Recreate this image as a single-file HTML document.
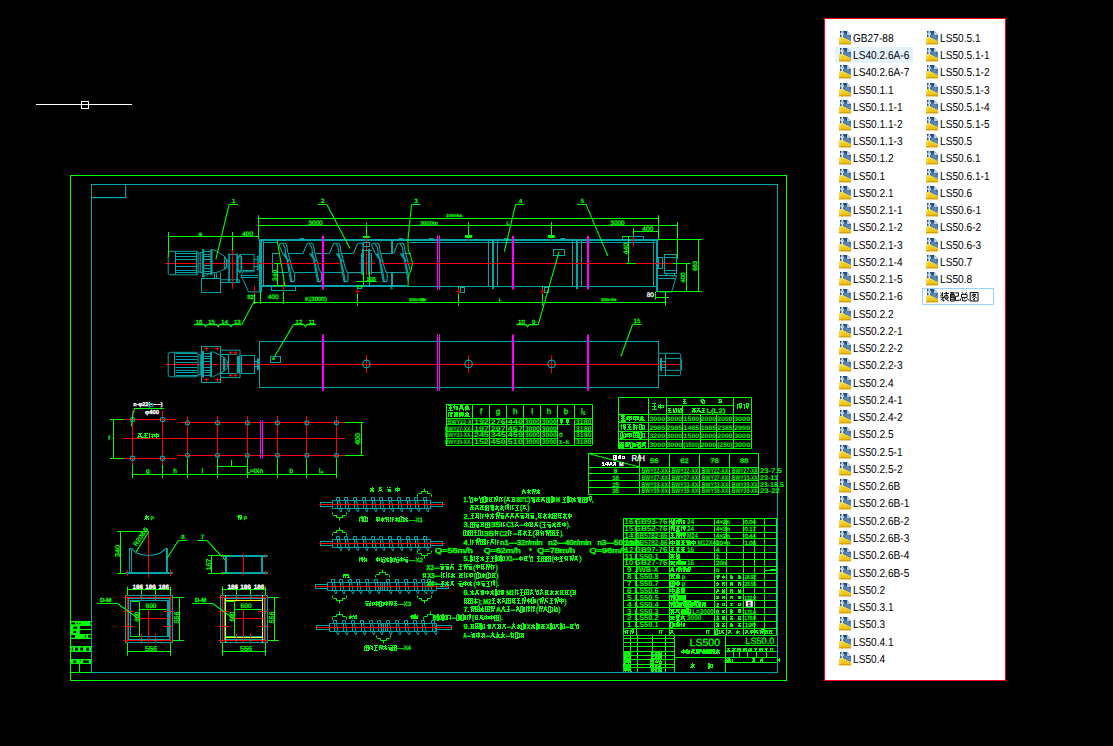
<!DOCTYPE html>
<html><head><meta charset="utf-8"><title>LS500</title>
<style>
html,body{margin:0;padding:0;background:#000}
body{width:1113px;height:746px;overflow:hidden;position:relative;font-family:"Liberation Sans",sans-serif;text-rendering:geometricPrecision;-webkit-font-smoothing:antialiased}
#cad{position:absolute;left:0;top:0}
#cad path,#cad rect,#cad circle{fill:none}
#cad text{font-family:"Liberation Sans",sans-serif;text-rendering:geometricPrecision}
#panel{position:absolute;left:824px;top:18px;width:180px;height:661px;background:#fff;border:1px solid #f00}
#pi{position:absolute;left:-825px;top:-19px;width:1113px;height:746px}
.ic{position:absolute}
.t{position:absolute;font-size:11.5px;line-height:16px;height:16px;color:#000;white-space:nowrap;transform:scaleX(.88);transform-origin:0 50%;letter-spacing:0}
.hl{position:absolute;left:835px;top:47px;width:78px;height:16px;background:#e5f3ff}
.sel{position:absolute;left:922px;top:288px;width:72px;height:17px;border:1px solid #99d1ff;box-sizing:border-box;background:#fff}
</style></head><body>
<svg id="cad" width="1113" height="746" viewBox="0 0 1113 746" fill="none" stroke-linecap="butt">
<rect x="70.5" y="175.5" width="716" height="505" stroke="#00ff00" stroke-width="1" fill="none"/>
<rect x="91.5" y="184.5" width="686" height="488" stroke="#00a6a8" stroke-width="1" fill="none"/>
<path d="M91.5 197.6L125.6 197.6L125.6 184.5" stroke="#00a6a8" stroke-width="1.15" fill="none"/>
<path d="M36 104.5L132 104.5" stroke="#ffffff" stroke-width="1"/>
<rect x="81.5" y="101.5" width="7" height="7" stroke="#ffffff" stroke-width="1" fill="none"/>
<path d="M258.7 240L658.5 240" stroke="#00a6a8" stroke-width="2"/>
<path d="M263.7 242.5L277.6 242.5" stroke="#00a6a8" stroke-width="1"/>
<path d="M409.3 242.5L655.2 242.5" stroke="#00a6a8" stroke-width="1"/>
<path d="M262 286L407 286" stroke="#00a6a8" stroke-width="2"/>
<path d="M407 286.5L656 286.5" stroke="#00a6a8" stroke-width="1"/>
<path d="M260.5 239.1L260.5 291.9" stroke="#00a6a8" stroke-width="3"/>
<path d="M263.5 241L263.5 287" stroke="#00a6a8" stroke-width="1"/>
<path d="M657 239.2L657 291.5" stroke="#00a6a8" stroke-width="2"/>
<path d="M653.5 241L653.5 286.4" stroke="#00a6a8" stroke-width="1"/>
<path d="M656 291.5L669.2 291.5" stroke="#00a6a8" stroke-width="1"/>
<rect x="271.5" y="286.5" width="24" height="4" stroke="#00a6a8" stroke-width="1" fill="none"/>
<path d="M283.5 282L283.5 291" stroke="#ff0000" stroke-width="1"/>
<defs><clipPath id="cf"><path d="M380 230H408L410.5 250L412.6 263L411 270L408.3 277V295H380Z"/></clipPath></defs>
<path d="M279.2 245.7C279.4 244.1 280.2 243.3 281.4 243.3L285 243.3C287.2 244.1 287.2 248.3 287.4 250.5L292.2 268.9L294.7 273.7L294.7 279.9L293.5 281.6L290.8 281.6L289.8 276.9L286.8 259.2L282.6 253.2L279.2 245.7M282.6 244.1L284.9 247.3L285.8 253.8L290 270.3L291.8 280.9M284.2 253.2L289 261.3" stroke="#00a6a8" stroke-width="1.1"/>
<path d="M303 253.2C304.8 250.3 305.8 244.5 307.8 243.3L311.8 243.3C314 244.1 314 248.3 314.2 250.5L319 268.9L321.5 273.7L321.5 279.9L320.3 281.6L317.6 281.6L316.6 276.9L313.6 259.2L309.4 253.2M309.4 244.1L311.7 247.3L312.6 253.8L316.8 270.3L318.6 280.9M311 253.2L315.8 261.3" stroke="#00a6a8" stroke-width="1.1"/>
<path d="M329.5 253.2C331.3 250.3 332.3 244.5 334.3 243.3L338.3 243.3C340.5 244.1 340.5 248.3 340.7 250.5L345.5 268.9L348 273.7L348 279.9L346.8 281.6L344.1 281.6L343.1 276.9L340.1 259.2L335.9 253.2M335.9 244.1L338.2 247.3L339.1 253.8L343.3 270.3L345.1 280.9M337.5 253.2L342.3 261.3" stroke="#00a6a8" stroke-width="1.1"/>
<path d="M353.5 253.2C355.3 250.3 356.3 244.5 358.3 243.3L362.3 243.3C363.3 243.9 363.1 248.3 363.1 253.2" stroke="#00a6a8" stroke-width="1.1"/>
<path d="M371.7 245.7C371.9 244.1 372.7 243.3 373.9 243.3L377.5 243.3C379.7 244.1 379.7 248.3 379.9 250.5L384.7 268.9L387.2 273.7L387.2 279.9L386 281.6L383.3 281.6L382.3 276.9L379.3 259.2L375.1 253.2L371.7 245.7M375.1 244.1L377.4 247.3L378.3 253.8L382.5 270.3L384.3 280.9M376.7 253.2L381.5 261.3" stroke="#00a6a8" stroke-width="1.1"/>
<path d="M393.7 253.2C395.5 250.3 396.5 244.5 398.5 243.3L402.5 243.3C404.7 244.1 404.7 248.3 404.9 250.5L409.7 268.9L412.2 273.7L412.2 279.9L411 281.6L408.3 281.6L407.3 276.9L404.3 259.2L400.1 253.2M400.1 244.1L402.4 247.3L403.3 253.8L407.5 270.3L409.3 280.9M401.7 253.2L406.5 261.3" stroke="#00a6a8" stroke-width="1.1" clip-path="url(#cf)"/>
<path d="M272 253.5L278.6 253.5" stroke="#00a6a8" stroke-width="1"/>
<path d="M288.8 253.5L303 253.5" stroke="#00a6a8" stroke-width="1"/>
<path d="M315.6 253.5L329.5 253.5" stroke="#00a6a8" stroke-width="1"/>
<path d="M342.1 253.5L353.5 253.5" stroke="#00a6a8" stroke-width="1"/>
<path d="M381.3 253.5L393.7 253.5" stroke="#00a6a8" stroke-width="1"/>
<path d="M404.4 253.5L411 253.5" stroke="#00a6a8" stroke-width="1"/>
<path d="M272 272.5L288 272.5" stroke="#00a6a8" stroke-width="1"/>
<path d="M294.7 272.5L316 272.5" stroke="#00a6a8" stroke-width="1"/>
<path d="M321.5 272.5L342.5 272.5" stroke="#00a6a8" stroke-width="1"/>
<path d="M348 272.5L361.5 272.5" stroke="#00a6a8" stroke-width="1"/>
<path d="M372 272.5L381.2 272.5" stroke="#00a6a8" stroke-width="1"/>
<path d="M387.2 272.5L406.5 272.5" stroke="#00a6a8" stroke-width="1"/>
<path d="M272.5 253.1L272.5 272.4" stroke="#00a6a8" stroke-width="1"/>
<path d="M277.3 241L284.8 285.4" stroke="#00ff00" stroke-width="1.1"/>
<path d="M392 240.5L392 253.1" stroke="#00a6a8" stroke-width="2"/>
<path d="M392 272.4L392 286" stroke="#00a6a8" stroke-width="2"/>
<circle cx="391.5" cy="288.2" r="0.9" stroke="#00a6a8" stroke-width="1" fill="none"/>
<path d="M407.9 239.4L408.2 250L410.6 256L412.6 263L411 270L408.3 277L408 287" stroke="#00ff00"/>
<path d="M488.5 241L488.5 286.4" stroke="#00a6a8" stroke-width="1"/>
<path d="M497.5 241L497.5 286.4" stroke="#00a6a8" stroke-width="1"/>
<path d="M493 241L493 289" stroke="#00a6a8" stroke-width="2"/>
<path d="M572.5 241L572.5 286.4" stroke="#00a6a8" stroke-width="1"/>
<path d="M581.5 241L581.5 286.4" stroke="#00a6a8" stroke-width="1"/>
<path d="M577 241L577 289" stroke="#00a6a8" stroke-width="2"/>
<path d="M428.9 238.5L433.7 238.5" stroke="#00a6a8" stroke-width="1"/>
<path d="M503.9 238.5L508.7 238.5" stroke="#00a6a8" stroke-width="1"/>
<path d="M560.4 238.5L565.2 238.5" stroke="#00a6a8" stroke-width="1"/>
<path d="M299.6 238.5L304.4 238.5" stroke="#00a6a8" stroke-width="1"/>
<path d="M398.6 238.5L403.4 238.5" stroke="#00a6a8" stroke-width="1"/>
<rect x="553.5" y="249.5" width="11" height="6" stroke="#00a6a8" stroke-width="1" fill="none"/>
<rect x="622.5" y="236.5" width="21" height="3" stroke="#00a6a8" stroke-width="1" fill="none"/>
<path d="M323 235.8L323 289.6" stroke="#ff00ff" stroke-width="2"/>
<path d="M513 235.8L513 289.6" stroke="#ff00ff" stroke-width="2"/>
<path d="M588 235.8L588 289.6" stroke="#ff00ff" stroke-width="2"/>
<path d="M437.5 235.3L437.5 289.6" stroke="#ff00ff" stroke-width="1"/>
<path d="M439.5 235.3L439.5 289.6" stroke="#ff00ff" stroke-width="1"/>
<path d="M165 263.5L196 263.5" stroke="#ff0000" stroke-width="1"/>
<path d="M198 263.5L203 263.5" stroke="#ff0000" stroke-width="1"/>
<path d="M205 263.5L340.5 263.5" stroke="#ff0000" stroke-width="1"/>
<path d="M359 263.5L375 263.5" stroke="#ff0000" stroke-width="1"/>
<path d="M381.8 263.5L672.8 263.5" stroke="#ff0000" stroke-width="1"/>
<path d="M366.5 222.7L366.5 236" stroke="#00ff00" stroke-width="1"/>
<path d="M363 237L369.8 237" stroke="#00ff00" stroke-width="2"/>
<path d="M366.5 237.4L366.5 275.2" stroke="#ff0000" stroke-width="1"/>
<path d="M363 248.7L363 275.2" stroke="#00a6a8" stroke-width="2"/>
<path d="M369 248.7L369 275.2" stroke="#00a6a8" stroke-width="2"/>
<path d="M361.5 253.1L361.5 274.4" stroke="#00a6a8" stroke-width="1"/>
<path d="M371.5 253.1L371.5 274.4" stroke="#00a6a8" stroke-width="1"/>
<rect x="363.5" y="242.5" width="6" height="4" stroke="#00a6a8" stroke-width="1" fill="none"/>
<path d="M361.5 250.5L371.9 250.5" stroke="#00a6a8" stroke-width="1"/>
<path d="M468.5 222L468.5 235.5" stroke="#00ff00" stroke-width="1"/>
<path d="M465.1 236.5L472.1 236.5" stroke="#00ff00" stroke-width="3"/>
<path d="M468.5 238L468.5 241" stroke="#ff0000" stroke-width="1"/>
<path d="M551.5 222L551.5 235.5" stroke="#00ff00" stroke-width="1"/>
<path d="M547.8 236.5L554.8 236.5" stroke="#00ff00" stroke-width="3"/>
<path d="M551.5 238L551.5 241" stroke="#ff0000" stroke-width="1"/>
<path d="M357.5 286.9L357.5 305.7" stroke="#00ff00" stroke-width="1"/>
<path d="M355.5 291.5L359.5 291.5" stroke="#ff0000" stroke-width="1"/>
<path d="M357.5 288.5L357.5 294" stroke="#ff0000" stroke-width="1"/>
<path d="M458.5 286.9L458.5 305.7" stroke="#00ff00" stroke-width="1"/>
<path d="M456.2 291.5L460.2 291.5" stroke="#ff0000" stroke-width="1"/>
<path d="M458.5 288.5L458.5 294" stroke="#ff0000" stroke-width="1"/>
<path d="M542.5 286.9L542.5 305.7" stroke="#00ff00" stroke-width="1"/>
<path d="M540.5 291.5L544.5 291.5" stroke="#ff0000" stroke-width="1"/>
<path d="M542.5 288.5L542.5 294" stroke="#ff0000" stroke-width="1"/>
<rect x="460.5" y="287.5" width="4" height="5" stroke="#00a6a8" stroke-width="1" fill="none"/>
<rect x="544.5" y="287.5" width="4" height="5" stroke="#00a6a8" stroke-width="1" fill="none"/>
<rect x="357.5" y="286.5" width="4" height="2" stroke="#00a6a8" stroke-width="1" fill="none"/>
<path d="M356.3 286.4L363 286.4" stroke="#00ff00" stroke-width="1.6"/>
<rect x="168.2" y="251.3" width="29.9" height="23.5" rx="1.6" stroke="#00a6a8"/>
<path d="M175.6 253.5L196.7 253.5" stroke="#00a6a8" stroke-width="1"/>
<path d="M175.6 256.5L196.7 256.5" stroke="#00a6a8" stroke-width="1"/>
<path d="M175.6 259.5L196.7 259.5" stroke="#00a6a8" stroke-width="1"/>
<path d="M175.6 266.5L196.7 266.5" stroke="#00a6a8" stroke-width="1"/>
<path d="M175.6 270.5L196.7 270.5" stroke="#00a6a8" stroke-width="1"/>
<path d="M175.6 272.5L196.7 272.5" stroke="#00a6a8" stroke-width="1"/>
<path d="M175.5 251.6L175.5 274.5" stroke="#00a6a8" stroke-width="1"/>
<path d="M196.5 251.6L196.5 274.5" stroke="#00a6a8" stroke-width="1"/>
<path d="M198 253.7L200.2 253L200.2 272.3L198 271.5" stroke="#00a6a8" stroke-width="1" fill="none"/>
<path d="M203.2 249.1V277.3M211.4 249.1V275.3" stroke="#00a6a8" stroke-width="2.2"/>
<path d="M204.2 251.5L210.3 251.5" stroke="#00a6a8" stroke-width="1"/>
<path d="M204.2 254.5L210.3 254.5" stroke="#00a6a8" stroke-width="1"/>
<path d="M204.2 256.5L210.3 256.5" stroke="#00a6a8" stroke-width="1"/>
<path d="M204.2 259.5L210.3 259.5" stroke="#00a6a8" stroke-width="1"/>
<path d="M204.2 265.5L210.3 265.5" stroke="#00a6a8" stroke-width="1"/>
<path d="M204.2 268.5L210.3 268.5" stroke="#00a6a8" stroke-width="1"/>
<path d="M204.2 271.5L210.3 271.5" stroke="#00a6a8" stroke-width="1"/>
<path d="M204.2 273.5L210.3 273.5" stroke="#00a6a8" stroke-width="1"/>
<path d="M200.2 252.5L202.2 252.5" stroke="#00a6a8" stroke-width="1"/>
<path d="M200.2 272.5L202.2 272.5" stroke="#00a6a8" stroke-width="1"/>
<path d="M212.5 249.6L214.8 250.1L224.4 256.2L224.4 269.2L219.3 271.5L214.8 272.8L212.5 272.3" stroke="#00a6a8" stroke-width="1" fill="none"/>
<path d="M224.4 257L226.6 259.7L226.6 266.7L224.4 269.2" stroke="#00a6a8" stroke-width="1.4" fill="none"/>
<path d="M226.6 260.5L228.4 260.5" stroke="#00a6a8" stroke-width="1"/>
<path d="M226.6 266.5L228.4 266.5" stroke="#00a6a8" stroke-width="1"/>
<path d="M229.1 253.4V282.3M237.1 253.4V282.3" stroke="#00a6a8" stroke-width="1.6"/>
<path d="M229.9 254.5L236.4 254.5" stroke="#00a6a8" stroke-width="1"/>
<path d="M237.9 258.2L239.9 255.2L241.4 257.2L241.4 270.2L239.9 272.3L237.9 269.2Z" stroke="#00a6a8" stroke-width="1.6" fill="none"/>
<path d="M239.9 254.4L254 254.4L254 271.8L242.5 271.8" stroke="#00a6a8" stroke-width="1" fill="none"/>
<path d="M242.5 270.5L254 270.5" stroke="#00a6a8" stroke-width="1"/>
<path d="M254 259.5L258 259.5" stroke="#00a6a8" stroke-width="1"/>
<path d="M254 266.5L258 266.5" stroke="#00a6a8" stroke-width="1"/>
<path d="M257 257.2L258 256.2L258 269.7L257 268.7" stroke="#00a6a8" stroke-width="1.3" fill="none"/>
<rect x="201.5" y="278.5" width="19" height="14" stroke="#00a6a8" stroke-width="1" fill="none"/>
<path d="M220.8 279.8L239.4 279.8L239.4 282.5L220.8 282.5" stroke="#00a6a8" stroke-width="1" fill="none"/>
<path d="M202.2 277.3L212.3 272.3" stroke="#00a6a8" stroke-width="1"/>
<path d="M214.5 273.3L214.5 278.5" stroke="#00a6a8" stroke-width="1"/>
<path d="M216.5 273.3L216.5 278.5" stroke="#00a6a8" stroke-width="1"/>
<path d="M220.5 272.3L220.5 278.8" stroke="#00a6a8" stroke-width="1"/>
<path d="M202.2 278.5L220.8 278.5" stroke="#00a6a8" stroke-width="1"/>
<path d="M212.3 272.3L214.8 273.1" stroke="#00a6a8" stroke-width="1"/>
<path d="M241.4 275.5L258 275.5" stroke="#00a6a8" stroke-width="1"/>
<path d="M241.4 277.5L258 277.5" stroke="#00a6a8" stroke-width="1"/>
<path d="M241.4 275.8L248.5 291.9L261.6 291.9" stroke="#00a6a8" stroke-width="1" fill="none"/>
<path d="M242.5 271.8L241.4 275.8" stroke="#00a6a8" stroke-width="1"/>
<rect x="658.5" y="257.5" width="4" height="11" stroke="#00a6a8" stroke-width="1" fill="none"/>
<rect x="664.5" y="254.5" width="12" height="19" stroke="#00a6a8" stroke-width="1" fill="none"/>
<path d="M664.5 257.5L676.6 257.5" stroke="#00a6a8" stroke-width="1"/>
<path d="M664.5 270.5L676.6 270.5" stroke="#00a6a8" stroke-width="1"/>
<path d="M666.5 273L666.5 275.5" stroke="#00a6a8" stroke-width="1"/>
<path d="M674.5 273L674.5 275.5" stroke="#00a6a8" stroke-width="1"/>
<path d="M658.5 275.5L676.6 275.5L671.6 291.9L658.5 291.9" stroke="#00a6a8" stroke-width="1" fill="none"/>
<path d="M658.5 278.5L675.6 278.5" stroke="#00a6a8" stroke-width="1"/>
<path d="M258.5 215.2L258.5 239" stroke="#00ff00" stroke-width="1"/>
<path d="M258.7 218.5L658.5 218.5" stroke="#00ff00" stroke-width="1"/>
<path d="M258.7 225.5L677.9 225.5" stroke="#00ff00" stroke-width="1"/>
<path d="M658.5 215.2L658.5 240.3" stroke="#00ff00" stroke-width="1"/>
<path d="M677.5 222L677.5 258.8" stroke="#00ff00" stroke-width="1"/>
<path d="M168.4 236.5L258.7 236.5" stroke="#00ff00" stroke-width="1"/>
<path d="M168.5 232L168.5 257" stroke="#00ff00" stroke-width="1"/>
<path d="M232.5 232L232.5 250" stroke="#00ff00" stroke-width="1"/>
<path d="M232.5 250L232.5 289" stroke="#ff0000" stroke-width="1"/>
<path d="M254.5 286L254.5 294.4" stroke="#ff0000" stroke-width="1"/>
<text x="315.5" y="224.6" font-size="6.5" fill="#00ff00" stroke="#00ff00" stroke-width="0.3" text-anchor="middle">3000</text>
<text x="617.5" y="224.6" font-size="6.5" fill="#00ff00" stroke="#00ff00" stroke-width="0.3" text-anchor="middle">3000</text>
<text x="429" y="224.6" font-size="5.5" fill="#00ff00" stroke="#00ff00" stroke-width="0.3" text-anchor="middle">300/Xn</text>
<text x="508" y="224.6" font-size="5" fill="#00ff00" stroke="#00ff00" stroke-width="0.3" text-anchor="middle">L</text>
<text x="454" y="217" font-size="4.5" fill="#00ff00" stroke="#00ff00" stroke-width="0.3" text-anchor="middle">10m=ka</text>
<text x="200.3" y="235.6" font-size="6" fill="#00ff00" stroke="#00ff00" stroke-width="0.3" text-anchor="middle">a</text>
<text x="247.6" y="236.2" font-size="6.5" fill="#00ff00" stroke="#00ff00" stroke-width="0.3" text-anchor="middle">400</text>
<path d="M633.3 231.5L658.5 231.5" stroke="#00ff00" stroke-width="1"/>
<path d="M633.5 227.8L633.5 236" stroke="#00ff00" stroke-width="1"/>
<path d="M633.5 236L633.5 246.6" stroke="#ff0000" stroke-width="1"/>
<text x="647.8" y="230.6" font-size="6.5" fill="#00ff00" stroke="#00ff00" stroke-width="0.3" text-anchor="middle">400</text>
<path d="M628.5 236.5L628.5 263.5" stroke="#00ff00" stroke-width="1"/>
<path d="M622.5 236.5L630 236.5" stroke="#00ff00" stroke-width="1"/>
<path d="M626 263.5L636 263.5" stroke="#00ff00" stroke-width="1"/>
<text x="627.6" y="248.6" font-size="6.4" fill="#00ff00" stroke="#00ff00" stroke-width="0.3" text-anchor="middle" transform="rotate(-90 627.6 248.6)" textLength="11.5" lengthAdjust="spacingAndGlyphs">440</text>
<path d="M658.5 239.5L702 239.5" stroke="#00ff00" stroke-width="1"/>
<path d="M672.8 263.5L690.5 263.5" stroke="#00ff00" stroke-width="1"/>
<path d="M658.5 291.5L702 291.5" stroke="#00ff00" stroke-width="1"/>
<path d="M686.5 263.5L686.5 291.9" stroke="#00ff00" stroke-width="1"/>
<path d="M698.5 239.6L698.5 291.9" stroke="#00ff00" stroke-width="1"/>
<text x="685" y="277.5" font-size="6" fill="#00ff00" stroke="#00ff00" stroke-width="0.3" text-anchor="middle" transform="rotate(-90 685 277.5)">400</text>
<text x="696.6" y="265.8" font-size="6" fill="#00ff00" stroke="#00ff00" stroke-width="0.3" text-anchor="middle" transform="rotate(-90 696.6 265.8)">883</text>
<path d="M254.4 302.5L665.3 302.5" stroke="#00ff00" stroke-width="1"/>
<path d="M254.5 294L254.5 304" stroke="#00ff00" stroke-width="1"/>
<path d="M260.5 292L260.5 304" stroke="#00ff00" stroke-width="1"/>
<path d="M283.5 291.3L283.5 304" stroke="#00ff00" stroke-width="1"/>
<path d="M665.5 291.9L665.5 305.7" stroke="#00ff00" stroke-width="1"/>
<path d="M655.2 297.5L669 297.5" stroke="#00ff00" stroke-width="1"/>
<path d="M655.5 292L655.5 299.5" stroke="#00ff00" stroke-width="1"/>
<text x="650.3" y="296.6" font-size="6.5" fill="#ffffff" stroke="#ffffff" stroke-width="0.3" text-anchor="middle">80</text>
<text x="250.6" y="299.2" font-size="6" fill="#00ff00" stroke="#00ff00" stroke-width="0.3" text-anchor="middle">82</text>
<text x="273.3" y="299.2" font-size="6.5" fill="#00ff00" stroke="#00ff00" stroke-width="0.3" text-anchor="middle">400</text>
<text x="316" y="301.2" font-size="6" fill="#00ff00" stroke="#00ff00" stroke-width="0.3" text-anchor="middle">K(3000)</text>
<text x="416.7" y="301.4" font-size="4.3" fill="#00ff00" stroke="#00ff00" stroke-width="0.3" text-anchor="middle">10m=ka</text>
<text x="608.7" y="301.2" font-size="4.3" fill="#00ff00" stroke="#00ff00" stroke-width="0.3" text-anchor="middle">10m=ka</text>
<text x="500" y="301" font-size="4.5" fill="#00ff00" stroke="#00ff00" stroke-width="0.3" text-anchor="middle">L</text>
<text x="424" y="301.4" font-size="4.3" fill="#00ff00" stroke="#00ff00" stroke-width="0.3" text-anchor="middle">kn</text>
<path d="M277.5 263.5L277.5 285.5" stroke="#00ff00" stroke-width="1"/>
<path d="M274 263.5L281 263.5" stroke="#00ff00" stroke-width="1"/>
<path d="M274 285.5L286 285.5" stroke="#00ff00" stroke-width="1"/>
<text x="276.8" y="275.4" font-size="6.4" fill="#00ff00" stroke="#00ff00" stroke-width="0.3" text-anchor="middle" transform="rotate(-90 276.8 275.4)" textLength="11" lengthAdjust="spacingAndGlyphs">340</text>
<path d="M356.3 281.5L376.8 281.5" stroke="#00ff00" stroke-width="1"/>
<text x="371.2" y="280.6" font-size="5.5" fill="#00ff00" stroke="#00ff00" stroke-width="0.3" text-anchor="middle">105</text>
<path d="M363.5 271.2L363.5 284.8" stroke="#00ff00" stroke-width="1"/>
<path d="M369.5 271.2L369.5 284.8" stroke="#00ff00" stroke-width="1"/>
<text x="233.6" y="203.2" font-size="6" fill="#00ff00" stroke="#00ff00" stroke-width="0.3" text-anchor="middle">1</text>
<path d="M229.2 204.5L238 204.5" stroke="#00ff00" stroke-width="1"/>
<path d="M229.2 204.4L215.9 259.2" stroke="#00ff00" stroke-width="1.1"/>
<text x="322.6" y="203.2" font-size="6" fill="#00ff00" stroke="#00ff00" stroke-width="0.3" text-anchor="middle">2</text>
<path d="M318 204.5L326.9 204.5" stroke="#00ff00" stroke-width="1"/>
<path d="M326.9 204.4L350 248.4" stroke="#00ff00" stroke-width="1.1"/>
<text x="416.2" y="203.2" font-size="6" fill="#00ff00" stroke="#00ff00" stroke-width="0.3" text-anchor="middle">3</text>
<path d="M411.6 204.5L420.4 204.5" stroke="#00ff00" stroke-width="1"/>
<path d="M411.6 204.4L407.9 240" stroke="#00ff00" stroke-width="1.1"/>
<text x="520.6" y="203.2" font-size="6" fill="#00ff00" stroke="#00ff00" stroke-width="0.3" text-anchor="middle">4</text>
<path d="M515.6 204.5L524.4 204.5" stroke="#00ff00" stroke-width="1"/>
<path d="M515.6 204.4L504.3 251.6" stroke="#00ff00" stroke-width="1.1"/>
<text x="582.3" y="203.2" font-size="6" fill="#00ff00" stroke="#00ff00" stroke-width="0.3" text-anchor="middle">5</text>
<path d="M577.2 204.5L586 204.5" stroke="#00ff00" stroke-width="1"/>
<path d="M586 204.4L607.4 254.9" stroke="#00ff00" stroke-width="1.1"/>
<circle cx="607.4" cy="254.9" r="0.6" stroke="#00ff00" stroke-width="1" fill="none"/>
<text x="199" y="323.6" font-size="6" fill="#00ff00" stroke="#00ff00" stroke-width="0.3" text-anchor="middle">16</text>
<text x="211.6" y="323.6" font-size="6" fill="#00ff00" stroke="#00ff00" stroke-width="0.3" text-anchor="middle">15</text>
<text x="224.7" y="323.6" font-size="6" fill="#00ff00" stroke="#00ff00" stroke-width="0.3" text-anchor="middle">14</text>
<text x="237.3" y="323.6" font-size="6" fill="#00ff00" stroke="#00ff00" stroke-width="0.3" text-anchor="middle">13</text>
<path d="M194 324.6L203.8 324.6L205.4 326.6L207 324.6L216.6 324.6L218.2 326.6L219.8 324.6L229.4 324.6L231 326.6L232.6 324.6L241.8 324.6" stroke="#00ff00" stroke-width="1.15" fill="none"/>
<path d="M241.8 324.6L254.4 300.7" stroke="#00ff00" stroke-width="1.1"/>
<text x="298.9" y="323.6" font-size="6" fill="#00ff00" stroke="#00ff00" stroke-width="0.3" text-anchor="middle">12</text>
<text x="311.8" y="323.6" font-size="6" fill="#00ff00" stroke="#00ff00" stroke-width="0.3" text-anchor="middle">11</text>
<path d="M293.4 324.6L303.8 324.6L305.4 326.6L307 324.6L316 324.6" stroke="#00ff00" stroke-width="1.15" fill="none"/>
<path d="M293.4 324.6L273.3 358.8" stroke="#00ff00" stroke-width="1.1"/>
<text x="521.4" y="323.6" font-size="6" fill="#00ff00" stroke="#00ff00" stroke-width="0.3" text-anchor="middle">10</text>
<text x="533.7" y="323.6" font-size="6" fill="#00ff00" stroke="#00ff00" stroke-width="0.3" text-anchor="middle">9</text>
<path d="M516.4 324.6L526 324.6L527.6 326.6L529.2 324.6L538.2 324.6" stroke="#00ff00" stroke-width="1.15" fill="none"/>
<path d="M538.2 324.6L559.1 251.6" stroke="#00ff00" stroke-width="1.1"/>
<text x="636.9" y="322.8" font-size="6" fill="#00ff00" stroke="#00ff00" stroke-width="0.3" text-anchor="middle">15</text>
<path d="M632.6 324.5L641.4 324.5" stroke="#00ff00" stroke-width="1"/>
<path d="M632.6 324.2L621.3 355.3" stroke="#00ff00" stroke-width="1.1"/>
<circle cx="621.3" cy="355.3" r="0.6" stroke="#00ff00" stroke-width="1" fill="none"/>
<rect x="259.5" y="341.5" width="399" height="46" stroke="#00a6a8" stroke-width="1" fill="none"/>
<path d="M165 364.5L202.6 364.5" stroke="#ff0000" stroke-width="1"/>
<path d="M204.4 364.5L210.2 364.5" stroke="#ff0000" stroke-width="1"/>
<path d="M212 364.5L218.4 364.5" stroke="#ff0000" stroke-width="1"/>
<path d="M220.2 364.5L227.2 364.5" stroke="#ff0000" stroke-width="1"/>
<path d="M229 364.5L234.8 364.5" stroke="#ff0000" stroke-width="1"/>
<path d="M236.5 364.5L681.9 364.5" stroke="#ff0000" stroke-width="1"/>
<path d="M323 334.4L323 390.8" stroke="#ff00ff" stroke-width="2"/>
<path d="M513 334.4L513 390.8" stroke="#ff00ff" stroke-width="2"/>
<path d="M588 334.4L588 390.8" stroke="#ff00ff" stroke-width="2"/>
<path d="M437.5 334.4L437.5 390.8" stroke="#ff00ff" stroke-width="1"/>
<path d="M439.5 334.4L439.5 390.8" stroke="#ff00ff" stroke-width="1"/>
<path d="M366.5 355.3L366.5 373" stroke="#ff0000" stroke-width="1"/>
<circle cx="366.4" cy="363.9" r="3.7" stroke="#00a6a8" stroke-width="1.2" fill="none"/>
<path d="M468.5 355.3L468.5 373" stroke="#ff0000" stroke-width="1"/>
<circle cx="468.6" cy="363.9" r="3.7" stroke="#00a6a8" stroke-width="1.2" fill="none"/>
<path d="M551.5 355.3L551.5 373" stroke="#ff0000" stroke-width="1"/>
<circle cx="551.5" cy="363.9" r="3.7" stroke="#00a6a8" stroke-width="1.2" fill="none"/>
<rect x="168.2" y="352.3" width="29.8" height="24.5" rx="2.2" stroke="#00a6a8"/>
<path d="M175.8 353.5L197.4 353.5" stroke="#00a6a8" stroke-width="1"/>
<path d="M175.8 356.5L197.4 356.5" stroke="#00a6a8" stroke-width="1"/>
<path d="M175.8 359.5L197.4 359.5" stroke="#00a6a8" stroke-width="1"/>
<path d="M175.8 362.5L197.4 362.5" stroke="#00a6a8" stroke-width="1"/>
<path d="M175.8 367.5L197.4 367.5" stroke="#00a6a8" stroke-width="1"/>
<path d="M175.8 370.5L197.4 370.5" stroke="#00a6a8" stroke-width="1"/>
<path d="M175.8 372.5L197.4 372.5" stroke="#00a6a8" stroke-width="1"/>
<path d="M175.8 375.5L197.4 375.5" stroke="#00a6a8" stroke-width="1"/>
<path d="M174.5 352.5L174.5 376.6" stroke="#00a6a8" stroke-width="1"/>
<path d="M198 354.3L200.3 354.9L200.3 374.7L198 375.3" stroke="#00a6a8" stroke-width="1" fill="none"/>
<rect x="201.5" y="346.5" width="19" height="36" stroke="#00a6a8" stroke-width="1" fill="none"/>
<path d="M202.5 350.8L202.5 377.6" stroke="#00a6a8" stroke-width="3"/>
<path d="M211 351.4L211 377" stroke="#00a6a8" stroke-width="2"/>
<path d="M204.4 353.5L210.2 353.5" stroke="#00a6a8" stroke-width="1"/>
<path d="M204.4 356.5L210.2 356.5" stroke="#00a6a8" stroke-width="1"/>
<path d="M204.4 358.5L210.2 358.5" stroke="#00a6a8" stroke-width="1"/>
<path d="M204.4 361.5L210.2 361.5" stroke="#00a6a8" stroke-width="1"/>
<path d="M204.4 367.5L210.2 367.5" stroke="#00a6a8" stroke-width="1"/>
<path d="M204.4 370.5L210.2 370.5" stroke="#00a6a8" stroke-width="1"/>
<path d="M204.4 372.5L210.2 372.5" stroke="#00a6a8" stroke-width="1"/>
<path d="M204.4 375.5L210.2 375.5" stroke="#00a6a8" stroke-width="1"/>
<path d="M212.8 351.9L214.9 352.5L224.8 357.8L224.8 370.6L214.9 375.9L212.8 376.5" stroke="#00a6a8" stroke-width="1" fill="none"/>
<path d="M224 357.8L224 370.6" stroke="#00a6a8" stroke-width="2"/>
<path d="M225.4 358.9L227.3 361.3L227.3 367.7L225.4 370" stroke="#00a6a8" stroke-width="1" fill="none"/>
<path d="M220.7 350.2L240 350.2L240 377.6L220.7 377.6" stroke="#00a6a8" stroke-width="1" fill="none"/>
<path d="M228.9 354.3L237.1 354.3" stroke="#00a6a8" stroke-width="1" fill="none"/>
<path d="M228.9 373.5L237.1 373.5" stroke="#00a6a8" stroke-width="1" fill="none"/>
<path d="M228.5 354.3L228.5 373.5" stroke="#00a6a8" stroke-width="1"/>
<path d="M220.7 354.5L228.9 354.5" stroke="#00a6a8" stroke-width="1"/>
<path d="M220.7 373.5L228.9 373.5" stroke="#00a6a8" stroke-width="1"/>
<path d="M238.5 356L238.5 373" stroke="#00a6a8" stroke-width="3"/>
<rect x="241.5" y="355.5" width="13" height="18" stroke="#00a6a8" stroke-width="1" fill="none"/>
<path d="M254 361.5L257.5 361.5" stroke="#00a6a8" stroke-width="1"/>
<path d="M254 366.5L257.5 366.5" stroke="#00a6a8" stroke-width="1"/>
<path d="M258 358.4L258 370" stroke="#00a6a8" stroke-width="2"/>
<path d="M204.2 348.5L208.8 348.5" stroke="#ff0000" stroke-width="1"/>
<path d="M206.5 346.3L206.5 351" stroke="#ff0000" stroke-width="1"/>
<path d="M215.1 348.5L219.8 348.5" stroke="#ff0000" stroke-width="1"/>
<path d="M217.5 346.3L217.5 351" stroke="#ff0000" stroke-width="1"/>
<path d="M204.2 379.5L208.8 379.5" stroke="#ff0000" stroke-width="1"/>
<path d="M206.5 377.6L206.5 382.3" stroke="#ff0000" stroke-width="1"/>
<path d="M215.1 379.5L219.8 379.5" stroke="#ff0000" stroke-width="1"/>
<path d="M217.5 377.6L217.5 382.3" stroke="#ff0000" stroke-width="1"/>
<path d="M228.7 352.5L232.2 352.5" stroke="#ff0000" stroke-width="1"/>
<path d="M230.5 351.1L230.5 354.6" stroke="#ff0000" stroke-width="1"/>
<path d="M233.9 352.5L237.4 352.5" stroke="#ff0000" stroke-width="1"/>
<path d="M235.5 351.1L235.5 354.6" stroke="#ff0000" stroke-width="1"/>
<path d="M228.7 375.5L232.2 375.5" stroke="#ff0000" stroke-width="1"/>
<path d="M230.5 373.9L230.5 377.4" stroke="#ff0000" stroke-width="1"/>
<path d="M233.9 375.5L237.4 375.5" stroke="#ff0000" stroke-width="1"/>
<path d="M235.5 373.9L235.5 377.4" stroke="#ff0000" stroke-width="1"/>
<rect x="270.5" y="356.5" width="10" height="6" stroke="#00a6a8" stroke-width="1" fill="none"/>
<circle cx="273.5" cy="359" r="0.7" stroke="#00ff00" stroke-width="1.2" fill="none"/>
<path d="M658.6 353.3L679.5 353.3L680.7 354.6L680.7 374.5L679.5 375.6L658.6 375.6" stroke="#00a6a8" stroke-width="1" fill="none"/>
<path d="M665.5 353.3L665.5 375.6" stroke="#00a6a8" stroke-width="1"/>
<path d="M665.8 358.4L680.7 358.4L681.6 359.5L681.6 369.1L680.7 370.3L665.8 370.3" stroke="#00a6a8" stroke-width="1" fill="none"/>
<rect x="660.5" y="358.5" width="1" height="12" stroke="#00a6a8" stroke-width="1" fill="none"/>
<path d="M661.5 361.5L665.8 361.5" stroke="#00a6a8" stroke-width="1"/>
<path d="M661.5 367.5L665.8 367.5" stroke="#00a6a8" stroke-width="1"/>
<path d="M123.9 419.5L175.8 419.5" stroke="#ff0000" stroke-width="1"/>
<path d="M123.9 458.5L177 458.5" stroke="#ff0000" stroke-width="1"/>
<path d="M179 422.5L344.4 422.5" stroke="#ff0000" stroke-width="1"/>
<path d="M177 455.5L344.4 455.5" stroke="#ff0000" stroke-width="1"/>
<path d="M123 438.5L344.8 438.5" stroke="#ff0000" stroke-width="1"/>
<path d="M132.5 410.7L132.5 464.8" stroke="#ff0000" stroke-width="1"/>
<path d="M132.5 464.8L132.5 478" stroke="#00ff00" stroke-width="1"/>
<circle cx="132.5" cy="419.5" r="2.2" stroke="#00a6a8" stroke-width="1.1" fill="none"/>
<circle cx="132.5" cy="458.3" r="2.2" stroke="#00a6a8" stroke-width="1.1" fill="none"/>
<path d="M162.5 410.7L162.5 464.8" stroke="#ff0000" stroke-width="1"/>
<path d="M162.5 464.8L162.5 478" stroke="#00ff00" stroke-width="1"/>
<circle cx="162.5" cy="419.5" r="2.2" stroke="#00a6a8" stroke-width="1.1" fill="none"/>
<circle cx="162.5" cy="458.3" r="2.2" stroke="#00a6a8" stroke-width="1.1" fill="none"/>
<path d="M187.5 416.1L187.5 458.5" stroke="#ff0000" stroke-width="1"/>
<path d="M187.5 458.5L187.5 478" stroke="#00ff00" stroke-width="1"/>
<circle cx="187.5" cy="422.8" r="2" stroke="#00a6a8" stroke-width="1.1" fill="none"/>
<circle cx="187.5" cy="455.2" r="2" stroke="#00a6a8" stroke-width="1.1" fill="none"/>
<path d="M217.5 416.1L217.5 458.5" stroke="#ff0000" stroke-width="1"/>
<path d="M217.5 458.5L217.5 478" stroke="#00ff00" stroke-width="1"/>
<circle cx="217.5" cy="422.8" r="2" stroke="#00a6a8" stroke-width="1.1" fill="none"/>
<circle cx="217.5" cy="455.2" r="2" stroke="#00a6a8" stroke-width="1.1" fill="none"/>
<path d="M247.5 416.1L247.5 458.5" stroke="#ff0000" stroke-width="1"/>
<path d="M247.5 458.5L247.5 478" stroke="#00ff00" stroke-width="1"/>
<circle cx="247.4" cy="422.8" r="2" stroke="#00a6a8" stroke-width="1.1" fill="none"/>
<circle cx="247.4" cy="455.2" r="2" stroke="#00a6a8" stroke-width="1.1" fill="none"/>
<path d="M277.5 416.1L277.5 458.5" stroke="#ff0000" stroke-width="1"/>
<path d="M277.5 458.5L277.5 478" stroke="#00ff00" stroke-width="1"/>
<circle cx="277.4" cy="422.8" r="2" stroke="#00a6a8" stroke-width="1.1" fill="none"/>
<circle cx="277.4" cy="455.2" r="2" stroke="#00a6a8" stroke-width="1.1" fill="none"/>
<path d="M306.5 416.1L306.5 458.5" stroke="#ff0000" stroke-width="1"/>
<path d="M306.5 458.5L306.5 478" stroke="#00ff00" stroke-width="1"/>
<circle cx="306.9" cy="422.8" r="2" stroke="#00a6a8" stroke-width="1.1" fill="none"/>
<circle cx="306.9" cy="455.2" r="2" stroke="#00a6a8" stroke-width="1.1" fill="none"/>
<path d="M336.5 416.1L336.5 458.5" stroke="#ff0000" stroke-width="1"/>
<path d="M336.5 458.5L336.5 478" stroke="#00ff00" stroke-width="1"/>
<circle cx="336.5" cy="422.8" r="2" stroke="#00a6a8" stroke-width="1.1" fill="none"/>
<circle cx="336.5" cy="455.2" r="2" stroke="#00a6a8" stroke-width="1.1" fill="none"/>
<path d="M260.5 420.2L260.5 458.6" stroke="#ff00ff" stroke-width="1"/>
<path d="M262.5 420.2L262.5 458.6" stroke="#ff00ff" stroke-width="1"/>
<path d="M113.5 419.5L113.5 458.3" stroke="#00ff00" stroke-width="1"/>
<path d="M110 419.5L124 419.5" stroke="#00ff00" stroke-width="1"/>
<path d="M110 458.5L124 458.5" stroke="#00ff00" stroke-width="1"/>
<text x="109" y="440" font-size="6" fill="#00ff00" stroke="#00ff00" stroke-width="0.3" text-anchor="middle">f</text>
<path d="M132.5 474.5L336.5 474.5" stroke="#00ff00" stroke-width="1"/>
<path d="M344.4 422.5L363.7 422.5" stroke="#00ff00" stroke-width="1"/>
<path d="M344.4 455.5L363.7 455.5" stroke="#00ff00" stroke-width="1"/>
<path d="M361.5 422.4L361.5 455.6" stroke="#00ff00" stroke-width="1"/>
<text x="359.6" y="439" font-size="7" fill="#00ff00" stroke="#00ff00" stroke-width="0.3" text-anchor="middle" transform="rotate(-90 359.6 439)">400</text>
<path d="M217.5 466.5L247.4 466.5" stroke="#00ff00" stroke-width="1"/>
<path d="M231.5 459.8L231.5 466.4" stroke="#00ff00" stroke-width="1"/>
<text x="147.8" y="473" font-size="6.5" fill="#00ff00" stroke="#00ff00" stroke-width="0.3" text-anchor="middle">g</text>
<text x="175" y="472.6" font-size="6.5" fill="#00ff00" stroke="#00ff00" stroke-width="0.3" text-anchor="middle">h</text>
<text x="202.5" y="472.6" font-size="6.5" fill="#00ff00" stroke="#00ff00" stroke-width="0.3" text-anchor="middle">l</text>
<text x="254.8" y="472.8" font-size="6.5" fill="#00ff00" stroke="#00ff00" stroke-width="0.3" text-anchor="middle">L=lXn</text>
<text x="291.3" y="472.6" font-size="6.5" fill="#00ff00" stroke="#00ff00" stroke-width="0.3" text-anchor="middle">b</text>
<text x="321" y="472.6" font-size="6.5" fill="#00ff00" stroke="#00ff00" stroke-width="0.3" text-anchor="middle">l&#8324;</text>
<path d="M131.4 426.4L133 413.9L134.6 408.5L163.9 408.5" stroke="#00ff00" stroke-width="1.15" fill="none"/>
<text x="148" y="406.2" font-size="5.4" fill="#ffffff" stroke="#ffffff" stroke-width="0.3" text-anchor="middle" font-weight="bold">n-&#966;22(&#8212;&#8212;)</text>
<rect x="148.5" y="403.5" width="4" height="3" stroke="#00a6a8" stroke-width="1" fill="none"/>
<text x="152" y="413.8" font-size="5.8" fill="#ffffff" stroke="#ffffff" stroke-width="0.3" text-anchor="middle" font-weight="bold">&#966;400</text>
<path d="M140.1 433L137.8 438M140.1 434.5L142.3 438M138.7 436L141.4 436M138.2 433.8L141.9 433.8M143.8 433.2L147.5 433.2M144.1 435.5L147.2 435.5M143.4 437.9L147.9 437.9M145.7 433.2L145.7 437.9M150.1 433L149 435.5M149.7 434.5L149.7 438M150.8 434L153.5 434M152.2 434L152.2 438M151 436.2L153.3 436.2M154.8 434.2L158.9 434.2L158.9 436.5L154.8 436.5L154.8 434.2M156.9 433L156.9 438" stroke="#00ff00" stroke-width="1" shape-rendering="crispEdges"/>
<path d="M144.6 516.1L149.1 516.1M146.8 514.6L146.8 519.6M146.8 516.4L144.6 519.6M146.8 516.4L149.1 519.6" stroke="#00ff00" stroke-width="1" shape-rendering="crispEdges"/>
<text x="152.3" y="519.6" font-size="5" fill="#00ff00" stroke="#00ff00" stroke-width="0.3" text-anchor="middle">P</text>
<path d="M237.4 516L239.2 516M238.3 515L238.3 520M239.9 515L241.9 515L241.9 517.2L239.9 517.2L239.9 515M239.7 518.5L241.9 518.5M240.9 517.2L240.9 520" stroke="#00ff00" stroke-width="1" shape-rendering="crispEdges"/>
<text x="245.5" y="520" font-size="5" fill="#00ff00" stroke="#00ff00" stroke-width="0.3" text-anchor="middle">P</text>
<path d="M117.2 531.5L148.8 531.5" stroke="#00ff00" stroke-width="1"/>
<path d="M120.5 531.5L120.5 573.3" stroke="#00ff00" stroke-width="1"/>
<path d="M117.2 573.5L127.4 573.5" stroke="#00ff00" stroke-width="1"/>
<text x="120" y="551" font-size="6.8" fill="#00ff00" stroke="#00ff00" stroke-width="0.3" text-anchor="middle" transform="rotate(-90 120 551)" textLength="12" lengthAdjust="spacingAndGlyphs">340</text>
<path d="M148.5 531.5L148.5 577.6" stroke="#ff0000" stroke-width="1"/>
<path d="M136 551.9L148.8 531.5" stroke="#00ff00" stroke-width="1.1"/>
<text x="142.4" y="537.8" font-size="6" fill="#00ff00" stroke="#00ff00" stroke-width="0.3" text-anchor="middle" transform="rotate(-55 142.4 537.8)" textLength="21" lengthAdjust="spacingAndGlyphs">R208.5</text>
<path d="M129.5 548.5L129.5 573" stroke="#00a6a8" stroke-width="1"/>
<path d="M167 548.5L167 573" stroke="#00a6a8" stroke-width="2"/>
<path d="M125.7 573L172.7 573" stroke="#00a6a8" stroke-width="2"/>
<path d="M131.5 549.5L131.5 572" stroke="#00a6a8" stroke-width="1"/>
<path d="M129 548.6H131.8L135.5 552.4Q148.4 558.6 161.2 552.4L165.4 548.6H167.8" stroke="#00a6a8" stroke-width="1.15"/>
<path d="M127.5 569.9L127.5 575.8" stroke="#ff0000" stroke-width="1"/>
<path d="M170.5 569.9L170.5 575.8" stroke="#ff0000" stroke-width="1"/>
<text x="182.9" y="539.4" font-size="6" fill="#00ff00" stroke="#00ff00" stroke-width="0.3" text-anchor="middle">8</text>
<path d="M178.6 540.5L186.8 540.5" stroke="#00ff00" stroke-width="1"/>
<path d="M178.6 540.3L167 558.3" stroke="#00ff00" stroke-width="1.1"/>
<text x="202.5" y="539.4" font-size="6" fill="#00ff00" stroke="#00ff00" stroke-width="0.3" text-anchor="middle">7</text>
<path d="M197.1 540.5L206.8 540.5" stroke="#00ff00" stroke-width="1"/>
<path d="M206.8 540.3L226.4 561.3" stroke="#00ff00" stroke-width="1.1"/>
<path d="M221.3 556L267.8 556" stroke="#00a6a8" stroke-width="2"/>
<path d="M221.3 573L267.8 573" stroke="#00a6a8" stroke-width="2"/>
<path d="M226 556L226 573.3" stroke="#00a6a8" stroke-width="2"/>
<path d="M262 556L262 573.3" stroke="#00a6a8" stroke-width="2"/>
<path d="M222.5 553.7L222.5 558" stroke="#ff0000" stroke-width="1"/>
<path d="M222.5 570.7L222.5 575" stroke="#ff0000" stroke-width="1"/>
<path d="M265.5 553.7L265.5 558" stroke="#ff0000" stroke-width="1"/>
<path d="M265.5 570.7L265.5 575" stroke="#ff0000" stroke-width="1"/>
<path d="M243.5 553.7L243.5 575" stroke="#ff0000" stroke-width="1"/>
<path d="M208 555.5L229 555.5" stroke="#00ff00" stroke-width="1"/>
<path d="M208 573.5L229 573.5" stroke="#00ff00" stroke-width="1"/>
<path d="M211.5 555.5L211.5 573.3" stroke="#00ff00" stroke-width="1"/>
<text x="210.8" y="564.4" font-size="6.8" fill="#00ff00" stroke="#00ff00" stroke-width="0.3" text-anchor="middle" transform="rotate(-90 210.8 564.4)" textLength="11.5" lengthAdjust="spacingAndGlyphs">157</text>
<rect x="125.5" y="595.5" width="47" height="47" stroke="#00a6a8" stroke-width="1" fill="none"/>
<rect x="128.5" y="598.5" width="41" height="41" stroke="#00a6a8" stroke-width="1" fill="none"/>
<rect x="130.5" y="600.5" width="37" height="36" stroke="#00a6a8" stroke-width="1" fill="none"/>
<path d="M169 600.2L169 636.9" stroke="#00a6a8" stroke-width="2"/>
<path d="M139.5 601.9L139.5 636" stroke="#00ff00" stroke-width="1"/>
<path d="M139.4 609.5L166.7 609.5" stroke="#00ff00" stroke-width="1"/>
<path d="M131.4 601.5L139.4 601.5" stroke="#00ff00" stroke-width="1"/>
<path d="M131.4 636.5L139.4 636.5" stroke="#00ff00" stroke-width="1"/>
<text x="151" y="608.3" font-size="6.6" fill="#00ff00" stroke="#00ff00" stroke-width="0.3" text-anchor="middle" textLength="11" lengthAdjust="spacingAndGlyphs">600</text>
<text x="138.6" y="616.6" font-size="6" fill="#00ff00" stroke="#00ff00" stroke-width="0.3" text-anchor="middle" transform="rotate(-90 138.6 616.6)" textLength="10" lengthAdjust="spacingAndGlyphs">600</text>
<path d="M123.2 597.5L173.5 597.5" stroke="#ff0000" stroke-width="1"/>
<path d="M123.2 640.5L173.5 640.5" stroke="#ff0000" stroke-width="1"/>
<path d="M123.2 611.5L133.4 611.5" stroke="#ff0000" stroke-width="1"/>
<path d="M163.3 611.5L173.5 611.5" stroke="#ff0000" stroke-width="1"/>
<path d="M123.2 626.5L133.4 626.5" stroke="#ff0000" stroke-width="1"/>
<path d="M163.3 626.5L173.5 626.5" stroke="#ff0000" stroke-width="1"/>
<path d="M139.4 618.5L168.4 618.5" stroke="#ff0000" stroke-width="1"/>
<path d="M127.5 594.2L127.5 642.9" stroke="#ff0000" stroke-width="1"/>
<path d="M170.5 594.2L170.5 642.9" stroke="#ff0000" stroke-width="1"/>
<path d="M141.5 594.2L141.5 600.2" stroke="#ff0000" stroke-width="1"/>
<path d="M141.5 633.5L141.5 643.7" stroke="#ff0000" stroke-width="1"/>
<path d="M155.5 594.2L155.5 600.2" stroke="#ff0000" stroke-width="1"/>
<path d="M155.5 633.5L155.5 643.7" stroke="#ff0000" stroke-width="1"/>
<path d="M148.5 609.6L148.5 643.7" stroke="#ff0000" stroke-width="1"/>
<circle cx="141.4" cy="597.3" r="0.8" stroke="#00a6a8" stroke-width="1" fill="none"/>
<circle cx="155.6" cy="597.3" r="0.8" stroke="#00a6a8" stroke-width="1" fill="none"/>
<circle cx="170.2" cy="611.6" r="0.8" stroke="#00a6a8" stroke-width="1" fill="none"/>
<circle cx="170.2" cy="626.3" r="0.8" stroke="#00a6a8" stroke-width="1" fill="none"/>
<circle cx="141.4" cy="640.3" r="0.8" stroke="#00a6a8" stroke-width="1" fill="none"/>
<circle cx="155.6" cy="640.3" r="0.8" stroke="#00a6a8" stroke-width="1" fill="none"/>
<path d="M127.4 589.5L170.6 589.5" stroke="#00ff00" stroke-width="1"/>
<path d="M127.5 586.5L127.5 595" stroke="#00ff00" stroke-width="1"/>
<path d="M141.5 586.5L141.5 595" stroke="#00ff00" stroke-width="1"/>
<path d="M155.5 586.5L155.5 595" stroke="#00ff00" stroke-width="1"/>
<path d="M170.5 586.5L170.5 595" stroke="#00ff00" stroke-width="1"/>
<text x="137.7" y="588.7" font-size="6.3" fill="#ffffff" stroke="#ffffff" stroke-width="0.3" text-anchor="middle" textLength="10.5" lengthAdjust="spacingAndGlyphs" font-weight="bold">186</text>
<text x="150.5" y="588.7" font-size="6.3" fill="#ffffff" stroke="#ffffff" stroke-width="0.3" text-anchor="middle" textLength="10.5" lengthAdjust="spacingAndGlyphs" font-weight="bold">186</text>
<text x="163.8" y="588.7" font-size="6.3" fill="#ffffff" stroke="#ffffff" stroke-width="0.3" text-anchor="middle" textLength="10.5" lengthAdjust="spacingAndGlyphs" font-weight="bold">186</text>
<path d="M179.5 597.3L179.5 640.3" stroke="#00ff00" stroke-width="1"/>
<path d="M172.7 597.5L183.8 597.5" stroke="#00ff00" stroke-width="1"/>
<path d="M172.7 640.5L183.8 640.5" stroke="#00ff00" stroke-width="1"/>
<text x="178.8" y="617.5" font-size="6.8" fill="#00ff00" stroke="#00ff00" stroke-width="0.3" text-anchor="middle" transform="rotate(-90 178.8 617.5)" textLength="11.5" lengthAdjust="spacingAndGlyphs">556</text>
<path d="M127.4 651.5L170.6 651.5" stroke="#00ff00" stroke-width="1"/>
<path d="M127.5 642.9L127.5 655.7" stroke="#00ff00" stroke-width="1"/>
<path d="M170.5 642.9L170.5 655.7" stroke="#00ff00" stroke-width="1"/>
<text x="151" y="651" font-size="7" fill="#00ff00" stroke="#00ff00" stroke-width="0.3" text-anchor="middle" textLength="12" lengthAdjust="spacingAndGlyphs">556</text>
<text x="105.6" y="602.4" font-size="6" fill="#00ff00" stroke="#00ff00" stroke-width="0.3" text-anchor="middle" font-weight="bold">D-M</text>
<path d="M97 603.5L117.2 603.5" stroke="#00ff00" stroke-width="1"/>
<path d="M117.2 603.3L137.7 618.1" stroke="#00ff00" stroke-width="1.1"/>
<rect x="220.5" y="595.5" width="47" height="47" stroke="#00a6a8" stroke-width="1" fill="none"/>
<rect x="224.5" y="598.5" width="40" height="41" stroke="#00a6a8" stroke-width="1" fill="none"/>
<rect x="225.5" y="600.5" width="37" height="36" stroke="#00a6a8" stroke-width="1" fill="none"/>
<path d="M225.5 595.1L225.5 642.5" stroke="#ffff00" stroke-width="1"/>
<path d="M262.5 595.1L262.5 642.5" stroke="#ffff00" stroke-width="1"/>
<path d="M225.7 600.5L262.9 600.5" stroke="#ffff00" stroke-width="1"/>
<path d="M225.7 637.5L262.9 637.5" stroke="#ffff00" stroke-width="1"/>
<path d="M234.5 601.9L234.5 636" stroke="#00ff00" stroke-width="1"/>
<path d="M234.5 609.5L261.8 609.5" stroke="#00ff00" stroke-width="1"/>
<path d="M226.5 601.5L234.5 601.5" stroke="#00ff00" stroke-width="1"/>
<path d="M226.5 636.5L234.5 636.5" stroke="#00ff00" stroke-width="1"/>
<text x="246.1" y="608.3" font-size="6.6" fill="#00ff00" stroke="#00ff00" stroke-width="0.3" text-anchor="middle" textLength="11" lengthAdjust="spacingAndGlyphs">600</text>
<text x="233.7" y="616.6" font-size="6" fill="#00ff00" stroke="#00ff00" stroke-width="0.3" text-anchor="middle" transform="rotate(-90 233.7 616.6)" textLength="10" lengthAdjust="spacingAndGlyphs">600</text>
<path d="M218.3 597.5L268.6 597.5" stroke="#ff0000" stroke-width="1"/>
<path d="M218.3 640.5L268.6 640.5" stroke="#ff0000" stroke-width="1"/>
<path d="M218.3 611.5L228.5 611.5" stroke="#ff0000" stroke-width="1"/>
<path d="M258.4 611.5L268.6 611.5" stroke="#ff0000" stroke-width="1"/>
<path d="M218.3 626.5L228.5 626.5" stroke="#ff0000" stroke-width="1"/>
<path d="M258.4 626.5L268.6 626.5" stroke="#ff0000" stroke-width="1"/>
<path d="M234.5 618.5L263.5 618.5" stroke="#ff0000" stroke-width="1"/>
<path d="M222.5 594.2L222.5 642.9" stroke="#ff0000" stroke-width="1"/>
<path d="M265.5 594.2L265.5 642.9" stroke="#ff0000" stroke-width="1"/>
<path d="M236.5 594.2L236.5 600.2" stroke="#ff0000" stroke-width="1"/>
<path d="M236.5 633.5L236.5 643.7" stroke="#ff0000" stroke-width="1"/>
<path d="M250.5 594.2L250.5 600.2" stroke="#ff0000" stroke-width="1"/>
<path d="M250.5 633.5L250.5 643.7" stroke="#ff0000" stroke-width="1"/>
<path d="M243.5 609.6L243.5 643.7" stroke="#ff0000" stroke-width="1"/>
<circle cx="236.5" cy="597.3" r="0.8" stroke="#00a6a8" stroke-width="1" fill="none"/>
<circle cx="250.7" cy="597.3" r="0.8" stroke="#00a6a8" stroke-width="1" fill="none"/>
<circle cx="265.3" cy="611.6" r="0.8" stroke="#00a6a8" stroke-width="1" fill="none"/>
<circle cx="265.3" cy="626.3" r="0.8" stroke="#00a6a8" stroke-width="1" fill="none"/>
<circle cx="236.5" cy="640.3" r="0.8" stroke="#00a6a8" stroke-width="1" fill="none"/>
<circle cx="250.7" cy="640.3" r="0.8" stroke="#00a6a8" stroke-width="1" fill="none"/>
<path d="M222.5 589.5L265.7 589.5" stroke="#00ff00" stroke-width="1"/>
<path d="M222.5 586.5L222.5 595" stroke="#00ff00" stroke-width="1"/>
<path d="M236.5 586.5L236.5 595" stroke="#00ff00" stroke-width="1"/>
<path d="M250.5 586.5L250.5 595" stroke="#00ff00" stroke-width="1"/>
<path d="M265.5 586.5L265.5 595" stroke="#00ff00" stroke-width="1"/>
<text x="232.8" y="588.7" font-size="6.3" fill="#ffffff" stroke="#ffffff" stroke-width="0.3" text-anchor="middle" textLength="10.5" lengthAdjust="spacingAndGlyphs" font-weight="bold">186</text>
<text x="245.6" y="588.7" font-size="6.3" fill="#ffffff" stroke="#ffffff" stroke-width="0.3" text-anchor="middle" textLength="10.5" lengthAdjust="spacingAndGlyphs" font-weight="bold">186</text>
<text x="258.9" y="588.7" font-size="6.3" fill="#ffffff" stroke="#ffffff" stroke-width="0.3" text-anchor="middle" textLength="10.5" lengthAdjust="spacingAndGlyphs" font-weight="bold">186</text>
<path d="M274.5 597.3L274.5 640.3" stroke="#00ff00" stroke-width="1"/>
<path d="M267.8 597.5L278.9 597.5" stroke="#00ff00" stroke-width="1"/>
<path d="M267.8 640.5L278.9 640.5" stroke="#00ff00" stroke-width="1"/>
<text x="273.9" y="617.5" font-size="6.8" fill="#00ff00" stroke="#00ff00" stroke-width="0.3" text-anchor="middle" transform="rotate(-90 273.9 617.5)" textLength="11.5" lengthAdjust="spacingAndGlyphs">556</text>
<path d="M222.5 651.5L265.7 651.5" stroke="#00ff00" stroke-width="1"/>
<path d="M222.5 642.9L222.5 655.7" stroke="#00ff00" stroke-width="1"/>
<path d="M265.5 642.9L265.5 655.7" stroke="#00ff00" stroke-width="1"/>
<text x="246.1" y="651" font-size="7" fill="#00ff00" stroke="#00ff00" stroke-width="0.3" text-anchor="middle" textLength="12" lengthAdjust="spacingAndGlyphs">556</text>
<text x="200.7" y="602.4" font-size="6" fill="#00ff00" stroke="#00ff00" stroke-width="0.3" text-anchor="middle" font-weight="bold">D-M</text>
<path d="M192.1 603.5L212.3 603.5" stroke="#00ff00" stroke-width="1"/>
<path d="M212.3 603.3L232.8 618.1" stroke="#00ff00" stroke-width="1.1"/>
<rect x="70.7" y="621.3" width="20.4" height="4.3" fill="#00ff00" stroke="none" style="fill:#00ff00"/>
<rect x="70.7" y="625.5" width="9.1" height="8.6" fill="#00ff00" stroke="none" style="fill:#00ff00"/>
<rect x="75" y="634.1" width="16.1" height="4.3" fill="#00ff00" stroke="none" style="fill:#00ff00"/>
<rect x="70.7" y="646.4" width="20.4" height="5.4" fill="#00ff00" stroke="none" style="fill:#00ff00"/>
<rect x="70.7" y="659.3" width="20.4" height="4.3" fill="#00ff00" stroke="none" style="fill:#00ff00"/>
<rect x="71.3" y="622.3" width="3.8" height="2.1" fill="#000" stroke="none" style="fill:#000"/>
<rect x="76.6" y="622.9" width="1.1" height="1.3" fill="#000" stroke="none" style="fill:#000"/>
<rect x="79.5" y="622.9" width="1.1" height="1.3" fill="#000" stroke="none" style="fill:#000"/>
<rect x="90" y="622.3" width="1.1" height="2.1" fill="#000" stroke="none" style="fill:#000"/>
<rect x="73.4" y="626.6" width="3.8" height="2.1" fill="#000" stroke="none" style="fill:#000"/>
<rect x="73.4" y="630.9" width="2.7" height="2.1" fill="#000" stroke="none" style="fill:#000"/>
<rect x="84.9" y="635.2" width="1.1" height="2.5" fill="#000" stroke="none" style="fill:#000"/>
<rect x="88.1" y="635.2" width="3" height="2.5" fill="#000" stroke="none" style="fill:#000"/>
<rect x="71.8" y="647.5" width="1.1" height="3.2" fill="#000" stroke="none" style="fill:#000"/>
<rect x="75" y="647.5" width="2.7" height="3.2" fill="#000" stroke="none" style="fill:#000"/>
<rect x="80.4" y="647.5" width="2.7" height="3.2" fill="#000" stroke="none" style="fill:#000"/>
<rect x="86.3" y="647.5" width="2.7" height="3.2" fill="#000" stroke="none" style="fill:#000"/>
<rect x="73.4" y="660.4" width="2.7" height="2.4" fill="#000" stroke="none" style="fill:#000"/>
<rect x="79.8" y="659.8" width="1.1" height="1.4" fill="#000" stroke="none" style="fill:#000"/>
<rect x="83" y="660.4" width="5.9" height="2.4" fill="#000" stroke="none" style="fill:#000"/>
<path d="M70.5 621.5L91.4 621.5" stroke="#00ff00" stroke-width="1"/>
<path d="M70.5 625.5L91.4 625.5" stroke="#00ff00" stroke-width="1"/>
<path d="M70.5 629.5L91.4 629.5" stroke="#00ff00" stroke-width="1"/>
<path d="M70.5 634.5L91.4 634.5" stroke="#00ff00" stroke-width="1"/>
<path d="M70.5 638.5L91.4 638.5" stroke="#00ff00" stroke-width="1"/>
<path d="M70.5 646.5L91.4 646.5" stroke="#00ff00" stroke-width="1"/>
<path d="M70.5 651.5L91.4 651.5" stroke="#00ff00" stroke-width="1"/>
<path d="M70.5 659.5L91.4 659.5" stroke="#00ff00" stroke-width="1"/>
<path d="M70.5 663.5L91.4 663.5" stroke="#00ff00" stroke-width="1"/>
<path d="M79.5 663.6L79.5 672.2" stroke="#00ff00" stroke-width="1"/>
<path d="M70.5 672.5L91.4 672.5" stroke="#00ff00" stroke-width="1"/>
<rect x="320.5" y="502.5" width="12" height="4" stroke="#00a6a8" stroke-width="1" fill="none"/>
<rect x="430.5" y="502.5" width="12" height="4" stroke="#00a6a8" stroke-width="1" fill="none"/>
<path d="M332.2 500.5L430.6 500.5" stroke="#00a6a8" stroke-width="1"/>
<path d="M332.2 508.5L430.6 508.5" stroke="#00a6a8" stroke-width="1"/>
<path d="M332.5 500.5L332.5 508.5" stroke="#00a6a8" stroke-width="1"/>
<path d="M430.5 500.5L430.5 508.5" stroke="#00a6a8" stroke-width="1"/>
<path d="M336.5 500.5V497.5H339.5V500.5M339.5 500.5L341 508.5M339 508.5L341 511.9L342.3 508.5M337.5 500.5V508.5M344.5 500.5V497.5H347.5V500.5M347.5 500.5L349 508.5M347 508.5L349 511.9L350.3 508.5M345.5 500.5V508.5M353.5 500.5V497.5H356.5V500.5M356.5 500.5L358 508.5M356 508.5L358 511.9L359.3 508.5M354.5 500.5V508.5M362.5 500.5V497.5H365.5V500.5M365.5 500.5L367 508.5M365 508.5L367 511.9L368.3 508.5M363.5 500.5V508.5M371.5 500.5V497.5H374.5V500.5M374.5 500.5L376 508.5M374 508.5L376 511.9L377.3 508.5M372.5 500.5V508.5M379.5 500.5V497.5H382.5V500.5M382.5 500.5L384 508.5M382 508.5L384 511.9L385.3 508.5M380.5 500.5V508.5M388.5 500.5V497.5H391.5V500.5M391.5 500.5L393 508.5M391 508.5L393 511.9L394.3 508.5M389.5 500.5V508.5M397.5 500.5V497.5H400.5V500.5M400.5 500.5L402 508.5M400 508.5L402 511.9L403.3 508.5M398.5 500.5V508.5M406.5 500.5V497.5H409.5V500.5M409.5 500.5L411 508.5M409 508.5L411 511.9L412.3 508.5M407.5 500.5V508.5M414.5 500.5V497.5H417.5V500.5M417.5 500.5L419 508.5M417 508.5L419 511.9L420.3 508.5M415.5 500.5V508.5M423.5 500.5V497.5H426.5V500.5M426.5 500.5L428 508.5M426 508.5L428 511.9L429.3 508.5M424.5 500.5V508.5" stroke="#00a6a8" stroke-width="1"/>
<path d="M319.2 504.5L444.8 504.5" stroke="#ff0000" stroke-width="1"/>
<rect x="320.5" y="541.5" width="12" height="4" stroke="#00a6a8" stroke-width="1" fill="none"/>
<rect x="430.5" y="541.5" width="12" height="4" stroke="#00a6a8" stroke-width="1" fill="none"/>
<path d="M332.2 539.5L430.6 539.5" stroke="#00a6a8" stroke-width="1"/>
<path d="M332.2 547.5L430.6 547.5" stroke="#00a6a8" stroke-width="1"/>
<path d="M332.5 539.5L332.5 547.5" stroke="#00a6a8" stroke-width="1"/>
<path d="M430.5 539.5L430.5 547.5" stroke="#00a6a8" stroke-width="1"/>
<path d="M336.5 539.5V536.5H339.5V539.5M339.5 539.5L341 547.5M339 547.5L341 550.9L342.3 547.5M337.5 539.5V547.5M344.5 539.5V536.5H347.5V539.5M347.5 539.5L349 547.5M347 547.5L349 550.9L350.3 547.5M345.5 539.5V547.5M353.5 539.5V536.5H356.5V539.5M356.5 539.5L358 547.5M356 547.5L358 550.9L359.3 547.5M354.5 539.5V547.5M362.5 539.5V536.5H365.5V539.5M365.5 539.5L367 547.5M365 547.5L367 550.9L368.3 547.5M363.5 539.5V547.5M371.5 539.5V536.5H374.5V539.5M374.5 539.5L376 547.5M374 547.5L376 550.9L377.3 547.5M372.5 539.5V547.5M379.5 539.5V536.5H382.5V539.5M382.5 539.5L384 547.5M382 547.5L384 550.9L385.3 547.5M380.5 539.5V547.5M388.5 539.5V536.5H391.5V539.5M391.5 539.5L393 547.5M391 547.5L393 550.9L394.3 547.5M389.5 539.5V547.5M397.5 539.5V536.5H400.5V539.5M400.5 539.5L402 547.5M400 547.5L402 550.9L403.3 547.5M398.5 539.5V547.5M406.5 539.5V536.5H409.5V539.5M409.5 539.5L411 547.5M409 547.5L411 550.9L412.3 547.5M407.5 539.5V547.5M414.5 539.5V536.5H417.5V539.5M417.5 539.5L419 547.5M417 547.5L419 550.9L420.3 547.5M415.5 539.5V547.5M423.5 539.5V536.5H426.5V539.5M426.5 539.5L428 547.5M426 547.5L428 550.9L429.3 547.5M424.5 539.5V547.5" stroke="#00a6a8" stroke-width="1"/>
<path d="M319.2 543.5L444.8 543.5" stroke="#ff0000" stroke-width="1"/>
<rect x="315.5" y="584.5" width="12" height="4" stroke="#00a6a8" stroke-width="1" fill="none"/>
<rect x="436.5" y="584.5" width="12" height="4" stroke="#00a6a8" stroke-width="1" fill="none"/>
<path d="M327.3 582.5L436.7 582.5" stroke="#00a6a8" stroke-width="1"/>
<path d="M327.3 590.5L436.7 590.5" stroke="#00a6a8" stroke-width="1"/>
<path d="M327.5 582.5L327.5 590.5" stroke="#00a6a8" stroke-width="1"/>
<path d="M436.5 582.5L436.5 590.5" stroke="#00a6a8" stroke-width="1"/>
<path d="M331.5 582.5V579.5H334.5V582.5M334.5 582.5L336 590.5M334 590.5L336 593.9L337.3 590.5M332.5 582.5V590.5M339.5 582.5V579.5H342.5V582.5M342.5 582.5L344 590.5M342 590.5L344 593.9L345.3 590.5M340.5 582.5V590.5M348.5 582.5V579.5H351.5V582.5M351.5 582.5L353 590.5M351 590.5L353 593.9L354.3 590.5M349.5 582.5V590.5M356.5 582.5V579.5H359.5V582.5M359.5 582.5L361 590.5M359 590.5L361 593.9L362.3 590.5M357.5 582.5V590.5M365.5 582.5V579.5H368.5V582.5M368.5 582.5L370 590.5M368 590.5L370 593.9L371.3 590.5M366.5 582.5V590.5M374.5 582.5V579.5H377.5V582.5M377.5 582.5L379 590.5M377 590.5L379 593.9L380.3 590.5M375.5 582.5V590.5M386.5 582.5V579.5H389.5V582.5M389.5 582.5L391 590.5M389 590.5L391 593.9L392.3 590.5M387.5 582.5V590.5M395.5 582.5V579.5H398.5V582.5M398.5 582.5L400 590.5M398 590.5L400 593.9L401.3 590.5M396.5 582.5V590.5M404.5 582.5V579.5H407.5V582.5M407.5 582.5L409 590.5M407 590.5L409 593.9L410.3 590.5M405.5 582.5V590.5M413.5 582.5V579.5H416.5V582.5M416.5 582.5L418 590.5M416 590.5L418 593.9L419.3 590.5M414.5 582.5V590.5M421.5 582.5V579.5H424.5V582.5M424.5 582.5L426 590.5M424 590.5L426 593.9L427.3 590.5M422.5 582.5V590.5M427.5 582.5V579.5H430.5V582.5M430.5 582.5L432 590.5M430 590.5L432 593.9L433.3 590.5M428.5 582.5V590.5" stroke="#00a6a8" stroke-width="1"/>
<path d="M380.5 582.5L380.5 590.5" stroke="#00a6a8" stroke-width="1"/>
<path d="M382.5 582.5L382.5 590.5" stroke="#00a6a8" stroke-width="1"/>
<path d="M384.5 582.5L384.5 590.5" stroke="#00a6a8" stroke-width="1"/>
<path d="M314 586.5L448.8 586.5" stroke="#ff0000" stroke-width="1"/>
<rect x="316.5" y="625.5" width="13" height="4" stroke="#00a6a8" stroke-width="1" fill="none"/>
<rect x="436.5" y="625.5" width="15" height="4" stroke="#00a6a8" stroke-width="1" fill="none"/>
<path d="M329.5 623.5L436.7 623.5" stroke="#00a6a8" stroke-width="1"/>
<path d="M329.5 631.5L436.7 631.5" stroke="#00a6a8" stroke-width="1"/>
<path d="M329.5 623.5L329.5 631.5" stroke="#00a6a8" stroke-width="1"/>
<path d="M436.5 623.5L436.5 631.5" stroke="#00a6a8" stroke-width="1"/>
<path d="M333.5 623.5V620.5H336.5V623.5M336.5 623.5L338 631.5M336 631.5L338 634.9L339.3 631.5M334.5 623.5V631.5M342.5 623.5V620.5H345.5V623.5M345.5 623.5L347 631.5M345 631.5L347 634.9L348.3 631.5M343.5 623.5V631.5M351.5 623.5V620.5H354.5V623.5M354.5 623.5L356 631.5M354 631.5L356 634.9L357.3 631.5M352.5 623.5V631.5M360.5 623.5V620.5H363.5V623.5M363.5 623.5L365 631.5M363 631.5L365 634.9L366.3 631.5M361.5 623.5V631.5M369.5 623.5V620.5H372.5V623.5M372.5 623.5L374 631.5M372 631.5L374 634.9L375.3 631.5M370.5 623.5V631.5M377.5 623.5V620.5H380.5V623.5M380.5 623.5L382 631.5M380 631.5L382 634.9L383.3 631.5M378.5 623.5V631.5M386.5 623.5V620.5H389.5V623.5M389.5 623.5L391 631.5M389 631.5L391 634.9L392.3 631.5M387.5 623.5V631.5M395.5 623.5V620.5H398.5V623.5M398.5 623.5L400 631.5M398 631.5L400 634.9L401.3 631.5M396.5 623.5V631.5M404.5 623.5V620.5H407.5V623.5M407.5 623.5L409 631.5M407 631.5L409 634.9L410.3 631.5M405.5 623.5V631.5M413.5 623.5V620.5H416.5V623.5M416.5 623.5L418 631.5M416 631.5L418 634.9L419.3 631.5M414.5 623.5V631.5M421.5 623.5V620.5H424.5V623.5M424.5 623.5L426 631.5M424 631.5L426 634.9L427.3 631.5M422.5 623.5V631.5M431.5 623.5V620.5H434.5V623.5M434.5 623.5L436 631.5M434 631.5L436 634.9L437.3 631.5M432.5 623.5V631.5" stroke="#00a6a8" stroke-width="1"/>
<path d="M381.5 623.5L381.5 631.5" stroke="#00a6a8" stroke-width="1"/>
<path d="M383.5 623.5L383.5 631.5" stroke="#00a6a8" stroke-width="1"/>
<path d="M385.5 623.5L385.5 631.5" stroke="#00a6a8" stroke-width="1"/>
<path d="M315.1 627.5L452.2 627.5" stroke="#ff0000" stroke-width="1"/>
<path d="M339.5 520.5V517.5M332.5 512.5V514.5L333.5 515.5H336.5V517.5H342.5V515.5H345.5L346.5 514.5V512.5" stroke="#00ff00" stroke-width="1"/>
<path d="M424.5 488.5V491.5M417.5 496.5V494.5L418.5 493.5H421.5V491.5H427.5V493.5H430.5L431.5 494.5V496.5" stroke="#00ff00" stroke-width="1"/>
<path d="M339.5 527.5V530.5M332.5 535.5V533.5L333.5 532.5H336.5V530.5H342.5V532.5H345.5L346.5 533.5V535.5" stroke="#00ff00" stroke-width="1"/>
<path d="M424.5 558.5V555.5M417.5 550.5V552.5L418.5 553.5H421.5V555.5H427.5V553.5H430.5L431.5 552.5V550.5" stroke="#00ff00" stroke-width="1"/>
<path d="M382.5 569.5V572.5M375.5 577.5V575.5L376.5 574.5H379.5V572.5H385.5V574.5H388.5L389.5 575.5V577.5" stroke="#00ff00" stroke-width="1"/>
<path d="M339.5 603.5V600.5M332.5 595.5V597.5L333.5 598.5H336.5V600.5H342.5V598.5H345.5L346.5 597.5V595.5" stroke="#00ff00" stroke-width="1"/>
<path d="M424.5 603.5V600.5M417.5 595.5V597.5L418.5 598.5H421.5V600.5H427.5V598.5H430.5L431.5 597.5V595.5" stroke="#00ff00" stroke-width="1"/>
<path d="M339.5 611.5V614.5M332.5 619.5V617.5L333.5 616.5H336.5V614.5H342.5V616.5H345.5L346.5 617.5V619.5" stroke="#00ff00" stroke-width="1"/>
<path d="M430.5 611.5V614.5M423.5 619.5V617.5L424.5 616.5H427.5V614.5H433.5V616.5H436.5L437.5 617.5V619.5" stroke="#00ff00" stroke-width="1"/>
<path d="M383.5 643.5V640.5M376.5 635.5V637.5L377.5 638.5H380.5V640.5H386.5V638.5H389.5L390.5 637.5V635.5" stroke="#00ff00" stroke-width="1"/>
<path d="M370 488.6L374.1 488.6M372.1 487L372.1 492.2M372.1 488.8L370 492.2M372.1 488.8L374.1 492.2" stroke="#00ff00" stroke-width="1" shape-rendering="crispEdges"/>
<path d="M380.6 487L378.5 492.2M380.6 488.6L382.6 492.2M379.3 490.1L381.8 490.1M378.9 487.8L382.2 487.8" stroke="#00ff00" stroke-width="1" shape-rendering="crispEdges"/>
<path d="M387.4 487L388.2 488M387 489.1L388.2 489.1L388.2 492.2M389.1 487.5L391.1 487.5M389.3 489.1L390.9 489.1L390.9 491.9L389.3 491.9L389.3 489.1" stroke="#00ff00" stroke-width="1" shape-rendering="crispEdges"/>
<path d="M395.7 488.3L399.4 488.3L399.4 490.6L395.7 490.6L395.7 488.3M397.6 487L397.6 492.2" stroke="#00ff00" stroke-width="1" shape-rendering="crispEdges"/>
<path d="M359.2 517.6L360.7 517.6M359.9 516.6L359.9 521.6M361.2 516.6L362.9 516.6L362.9 518.9L361.2 518.9L361.2 516.6M361.1 520.1L362.9 520.1M362.1 518.9L362.1 521.6M363.6 516.6L365.2 516.6L365.2 521.6L363.6 521.6L363.6 516.6M365.8 517.6L367.3 517.6L367.3 521.1L365.8 521.1L365.8 517.6" stroke="#00ff00" stroke-width="1" shape-rendering="crispEdges"/>
<path d="M376.2 517.9L379.7 517.9L379.7 520.1L376.2 520.1L376.2 517.9M377.9 516.6L377.9 521.6M380.7 518.1L384.6 518.1M382.6 516.6L382.6 521.6M382.6 518.4L380.7 521.6M382.6 518.4L384.6 521.6M386.4 516.6L385.4 519.1M386 518.1L386 521.6M387 517.6L389.3 517.6M388.1 517.6L388.1 521.6M387.2 519.9L389.1 519.9M391.1 516.6L390.1 519.1M390.7 518.1L390.7 521.6M391.7 517.6L394 517.6M392.8 517.6L392.8 521.6M391.9 519.9L393.8 519.9M394.8 518.1L398.7 518.1M396.8 516.6L396.8 521.6M396.8 518.4L394.8 521.6M396.8 518.4L398.7 521.6M399.5 516.6L401.1 516.6L401.1 521.6L399.5 521.6L399.5 516.6M401.8 517.6L403.4 517.6L403.4 521.1L401.8 521.1L401.8 517.6M404.2 518.1L408.1 518.1M406.1 516.6L406.1 521.6M406.1 518.4L404.2 521.6M406.1 518.4L408.1 521.6" stroke="#00ff00" stroke-width="1" shape-rendering="crispEdges"/>
<text x="409.2" y="521.6" font-size="6.2" fill="#00ff00" stroke="#00ff00" stroke-width="0.3" text-anchor="start">&#8212;X1</text>
<path d="M359.2 558.4L360.7 558.4M359.9 557.4L359.9 562.4M361.2 557.4L362.9 557.4L362.9 559.6L361.2 559.6L361.2 557.4M361.1 560.9L362.9 560.9M362.1 559.6L362.1 562.4M364.5 557.4L363.6 559.9M364.2 558.9L364.2 562.4M365.1 558.4L367.3 558.4M366.2 558.4L366.2 562.4M365.3 560.6L367.1 560.6" stroke="#00ff00" stroke-width="1" shape-rendering="crispEdges"/>
<path d="M376.2 558.6L379.7 558.6L379.7 560.9L376.2 560.9L376.2 558.6M377.9 557.4L377.9 562.4M381.1 557.4L381.9 558.4M380.7 559.4L381.9 559.4L381.9 562.4M382.6 557.9L384.6 557.9M382.8 559.4L384.4 559.4L384.4 562.1L382.8 562.1L382.8 559.4M385.4 558.9L389.3 558.9M387.3 557.4L387.3 562.4M387.3 559.1L385.4 562.4M387.3 559.1L389.3 562.4M390.1 557.4L391.7 557.4L391.7 562.4L390.1 562.4L390.1 557.4M392.4 558.4L394 558.4L394 561.9L392.4 561.9L392.4 558.4M395.2 557.4L396 558.4M394.8 559.4L396 559.4L396 562.4M396.8 557.9L398.7 557.9M396.9 559.4L398.5 559.4L398.5 562.1L396.9 562.1L396.9 559.4M399.7 558.6L403.2 558.6L403.2 560.9L399.7 560.9L399.7 558.6M401.4 557.4L401.4 562.4M404.6 557.4L405.4 558.4M404.2 559.4L405.4 559.4L405.4 562.4M406.1 557.9L408.1 557.9M406.3 559.4L407.9 559.4L407.9 562.1L406.3 562.1L406.3 559.4" stroke="#00ff00" stroke-width="1" shape-rendering="crispEdges"/>
<text x="409.2" y="562.4" font-size="6.2" fill="#00ff00" stroke="#00ff00" stroke-width="0.3" text-anchor="start">&#8212;X2</text>
<path d="M365.7 601L366.5 602M365.3 603L366.5 603L366.5 606M367.2 601.5L369.2 601.5M367.4 603L369 603L369 605.8L367.4 605.8L367.4 603M371 601L370 603.5M370.6 602.5L370.6 606M371.6 602L373.9 602M372.7 602L372.7 606M371.8 604.2L373.7 604.2M374.9 602.2L378.4 602.2L378.4 604.5L374.9 604.5L374.9 602.2M376.6 601L376.6 606M379.4 601L381 601L381 606L379.4 606L379.4 601M381.7 602L383.3 602L383.3 605.5L381.7 605.5L381.7 602M384.3 602.2L387.8 602.2L387.8 604.5L384.3 604.5L384.3 602.2M386.1 601L386.1 606M388.8 602L390.4 602M389.6 601L389.6 606M390.9 601L392.7 601L392.7 603.2L390.9 603.2L390.9 601M390.8 604.5L392.7 604.5M391.8 603.2L391.8 606M393.9 601.2L397 601.2M394.1 603.5L396.8 603.5M393.5 605.9L397.4 605.9M395.4 601.2L395.4 605.9" stroke="#00ff00" stroke-width="1" shape-rendering="crispEdges"/>
<text x="397.4" y="606" font-size="6.2" fill="#00ff00" stroke="#00ff00" stroke-width="0.3" text-anchor="start">&#8212;X3</text>
<path d="M364.6 645.6L368.5 645.6L368.5 650.1L364.6 650.1L364.6 645.6M366.6 645.6L366.6 650.1M364.6 647.9L368.5 647.9M370.3 645.4L369.3 647.9M369.9 646.9L369.9 650.4M370.9 646.4L373.2 646.4M372 646.4L372 650.4M371.1 648.6L373 648.6M374.4 645.6L377.5 645.6M374.6 647.9L377.3 647.9M374 650.3L377.9 650.3M375.9 645.6L375.9 650.3M378.7 646.4L380.3 646.4M379.5 645.4L379.5 650.4M380.8 645.4L382.6 645.4L382.6 647.6L380.8 647.6L380.8 645.4M380.7 648.9L382.6 648.9M381.7 647.6L381.7 650.4M383.4 646.9L387.3 646.9M385.4 645.4L385.4 650.4M385.4 647.1L383.4 650.4M385.4 647.1L387.3 650.4M388.5 645.4L389.3 646.4M388.1 647.4L389.3 647.4L389.3 650.4M390.1 645.9L392 645.9M390.2 647.4L391.8 647.4L391.8 650.1L390.2 650.1L390.2 647.4M392.8 645.6L396.7 645.6L396.7 650.1L392.8 650.1L392.8 645.6M394.8 645.6L394.8 650.1M392.8 647.9L396.7 647.9" stroke="#00ff00" stroke-width="1" shape-rendering="crispEdges"/>
<text x="397.2" y="650.4" font-size="6.2" fill="#00ff00" stroke="#00ff00" stroke-width="0.3" text-anchor="start">&#8212;X4</text>
<path d="M343 574.7L344.2 574.7M343.6 574L343.6 577.6M344.7 574L346.1 574L346.1 575.6L344.7 575.6L344.7 574M344.6 576.5L346.1 576.5M345.4 575.6L345.4 577.6M346.9 574.2L349.4 574.2M347.1 575.8L349.2 575.8M346.6 577.5L349.7 577.5M348.2 574.2L348.2 577.5" stroke="#00ff00" stroke-width="1" shape-rendering="crispEdges"/>
<path d="M349 616L352.5 616M350.8 614.8L350.8 618.8M350.8 616.2L349 618.8M350.8 616.2L352.5 618.8M353.4 614.8L354.1 615.6M353 616.4L354.1 616.4L354.1 618.8M354.8 615.2L356.5 615.2M354.9 616.4L356.3 616.4L356.3 618.6L354.9 618.6L354.9 616.4" stroke="#00ff00" stroke-width="1" shape-rendering="crispEdges"/>
<path d="M410.8 614.8L411.4 615.6M410.4 616.4L411.4 616.4L411.4 618.8M412.1 615.2L413.9 615.2M412.3 616.4L413.7 616.4L413.7 618.6L412.3 618.6L412.3 616.4M414.4 614.8L415.9 614.8L415.9 618.8L414.4 618.8L414.4 614.8M416.5 615.6L417.9 615.6L417.9 618.4L416.5 618.4L416.5 615.6" stroke="#00ff00" stroke-width="1" shape-rendering="crispEdges"/>
<path d="M523.9 489.4L522 493.6M523.9 490.7L525.7 493.6M522.7 491.9L525 491.9M522.4 490L525.3 490" stroke="#00ff00" stroke-width="1" shape-rendering="crispEdges"/>
<path d="M526.8 490.7L530.5 490.7M528.6 489.4L528.6 493.6M528.6 490.9L526.8 493.6M528.6 490.9L530.5 493.6" stroke="#00ff00" stroke-width="1" shape-rendering="crispEdges"/>
<path d="M531.6 490.2L533.1 490.2M532.3 489.4L532.3 493.6M533.6 489.4L535.3 489.4L535.3 491.3L533.6 491.3L533.6 489.4M533.5 492.3L535.3 492.3M534.5 491.3L534.5 493.6" stroke="#00ff00" stroke-width="1" shape-rendering="crispEdges"/>
<path d="M536.4 490.7L540.1 490.7M538.2 489.4L538.2 493.6M538.2 490.9L536.4 493.6M538.2 490.9L540.1 493.6" stroke="#00ff00" stroke-width="1" shape-rendering="crispEdges"/>
<text x="463.6" y="502.3" font-size="7.2" fill="#00ff00" stroke="#00ff00" stroke-width="0.5" text-anchor="start" textLength="4.6" lengthAdjust="spacingAndGlyphs">1.</text>
<path d="M469.2 496.7L470 497.8M468.8 498.9L470 498.9L470 502.3M470.8 497.3L472.7 497.3M470.9 498.9L472.5 498.9L472.5 502L470.9 502L470.9 498.9M474 498.1L477.5 498.1L477.5 500.6L474 500.6L474 498.1M475.8 496.7L475.8 502.3M479.2 496.7L480 497.8M478.8 498.9L480 498.9L480 502.3M480.8 497.3L482.7 497.3M480.9 498.9L482.5 498.9L482.5 502L480.9 502L480.9 498.9M483.8 496.7L485.4 496.7L485.4 502.3L483.8 502.3L483.8 496.7M486.1 497.8L487.7 497.8L487.7 501.7L486.1 501.7L486.1 497.8M488.8 497.3L492.7 497.3M489.2 499.2L492.3 499.2M488.8 501.2L492.7 501.2M490 497.3L489.6 502.3M491.7 497.3L491.7 502.3M493.8 497.8L495.4 497.8M494.6 496.7L494.6 502.3M495.9 496.7L497.7 496.7L497.7 499.2L495.9 499.2L495.9 496.7M495.8 500.6L497.7 500.6M496.8 499.2L496.8 502.3M499.8 496.7L498.8 499.5M499.4 498.4L499.4 502.3M500.4 497.8L502.7 497.8M501.5 497.8L501.5 502.3M500.6 500.3L502.5 500.3" stroke="#00ff00" stroke-width="1" shape-rendering="crispEdges"/>
<text x="503.8" y="502.3" font-size="7.2" fill="#00ff00" stroke="#00ff00" stroke-width="0.5" text-anchor="start" textLength="2" lengthAdjust="spacingAndGlyphs">(</text>
<path d="M508.4 496.7L506.4 502.3M508.4 498.4L510.3 502.3M507.2 500.1L509.5 500.1M506.8 497.5L509.9 497.5M511.4 497.3L515.3 497.3M511.8 499.2L514.9 499.2M511.4 501.2L515.3 501.2M512.6 497.3L512.2 502.3M514.3 497.3L514.3 502.3" stroke="#00ff00" stroke-width="1" shape-rendering="crispEdges"/>
<text x="516.4" y="502.3" font-size="7.2" fill="#00ff00" stroke="#00ff00" stroke-width="0.5" text-anchor="start" textLength="14" lengthAdjust="spacingAndGlyphs">80&#176;C)</text>
<path d="M531.4 496.7L532.2 497.8M531 498.9L532.2 498.9L532.2 502.3M533 497.3L534.9 497.3M533.1 498.9L534.7 498.9L534.7 502L533.1 502L533.1 498.9M536 497.3L539.9 497.3M536.4 499.2L539.5 499.2M536 501.2L539.9 501.2M537.2 497.3L536.8 502.3M538.9 497.3L538.9 502.3M543 496.7L541 502.3M543 498.4L544.9 502.3M541.8 500.1L544.1 500.1M541.4 497.5L544.5 497.5M546 497L549.9 497L549.9 502L546 502L546 497M548 497L548 502M546 499.5L549.9 499.5M551 496.7L552.6 496.7L552.6 502.3L551 502.3L551 496.7M553.3 497.8L554.9 497.8L554.9 501.7L553.3 501.7L553.3 497.8" stroke="#00ff00" stroke-width="1" shape-rendering="crispEdges"/>
<text x="556" y="502.3" font-size="7.2" fill="#00ff00" stroke="#00ff00" stroke-width="0.5" text-anchor="start" textLength="4" lengthAdjust="spacingAndGlyphs">M</text>
<path d="M562.5 497L565.6 497M562.7 499.5L565.4 499.5M562.1 502.2L566 502.2M564.1 497L564.1 502.2M567.1 496.7L568.7 496.7L568.7 502.3L567.1 502.3L567.1 496.7M569.4 497.8L571 497.8L571 501.7L569.4 501.7L569.4 497.8M572.1 498.4L576 498.4M574.1 496.7L574.1 502.3M574.1 498.7L572.1 502.3M574.1 498.7L576 502.3M577.5 496.7L578.3 497.8M577.1 498.9L578.3 498.9L578.3 502.3M579.1 497.3L581 497.3M579.2 498.9L580.8 498.9L580.8 502L579.2 502L579.2 498.9M582.1 497L586 497L586 502L582.1 502L582.1 497M584.1 497L584.1 502M582.1 499.5L586 499.5M587.1 497.8L588.7 497.8M587.9 496.7L587.9 502.3M589.2 496.7L591 496.7L591 499.2L589.2 499.2L589.2 496.7M589.1 500.6L591 500.6M590.1 499.2L590.1 502.3" stroke="#00ff00" stroke-width="1" shape-rendering="crispEdges"/>
<text x="592.1" y="502.3" font-size="7.2" fill="#00ff00" stroke="#00ff00" stroke-width="0.5" text-anchor="start" textLength="1.5" lengthAdjust="spacingAndGlyphs">,</text>
<path d="M470 505.3L473.9 505.3M470.4 507.2L473.5 507.2M470 509.2L473.9 509.2M471.2 505.3L470.8 510.3M472.9 505.3L472.9 510.3M476.9 504.7L475 510.3M476.9 506.4L478.9 510.3M475.8 508.1L478.1 508.1M475.4 505.5L478.5 505.5M480 505.3L483.9 505.3M480.4 507.2L483.5 507.2M480 509.2L483.9 509.2M481.2 505.3L480.8 510.3M482.9 505.3L482.9 510.3" stroke="#00ff00" stroke-width="1" shape-rendering="crispEdges"/>
<path d="M485 505L488.9 505L488.9 510L485 510L485 505M486.9 505L486.9 510M485 507.5L488.9 507.5M490.4 504.7L491.2 505.8M490 506.9L491.2 506.9L491.2 510.3M491.9 505.3L493.9 505.3M492.1 506.9L493.7 506.9L493.7 510L492.1 510L492.1 506.9M495 506.4L498.9 506.4M496.9 504.7L496.9 510.3M496.9 506.7L495 510.3M496.9 506.7L498.9 510.3M500 506.4L503.9 506.4M501.9 504.7L501.9 510.3M501.9 506.7L500 510.3M501.9 506.7L503.9 510.3M505 505.8L506.6 505.8M505.8 504.7L505.8 510.3M507.1 504.7L508.9 504.7L508.9 507.2L507.1 507.2L507.1 504.7M506.9 508.6L508.9 508.6M508 507.2L508 510.3M511 504.7L510 507.5M510.6 506.4L510.6 510.3M511.6 505.8L513.9 505.8M512.7 505.8L512.7 510.3M511.8 508.3L513.7 508.3M515.4 505L518.5 505M515.6 507.5L518.3 507.5M515 510.2L518.9 510.2M517 505L517 510.2" stroke="#00ff00" stroke-width="1" shape-rendering="crispEdges"/>
<text x="520" y="510.3" font-size="7.2" fill="#00ff00" stroke="#00ff00" stroke-width="0.5" text-anchor="start" textLength="2" lengthAdjust="spacingAndGlyphs">(</text>
<path d="M524.6 504.7L522.6 510.3M524.6 506.4L526.5 510.3M523.4 508.1L525.7 508.1M523 505.5L526.1 505.5" stroke="#00ff00" stroke-width="1" shape-rendering="crispEdges"/>
<text x="527.6" y="510.3" font-size="7.2" fill="#00ff00" stroke="#00ff00" stroke-width="0.5" text-anchor="start" textLength="2" lengthAdjust="spacingAndGlyphs">)</text>
<text x="463.6" y="518.5" font-size="7.2" fill="#00ff00" stroke="#00ff00" stroke-width="0.5" text-anchor="start" textLength="6" lengthAdjust="spacingAndGlyphs">2.</text>
<path d="M470.6 513.2L473.7 513.2M470.8 515.7L473.5 515.7M470.2 518.4L474.1 518.4M472.2 513.2L472.2 518.4M475.2 513.5L479.1 513.5M475.6 515.4L478.7 515.4M475.2 517.4L479.1 517.4M476.4 513.5L476 518.5M478.1 513.5L478.1 518.5M481.2 512.9L480.2 515.7M480.8 514.6L480.8 518.5M481.8 514L484.1 514M482.9 514L482.9 518.5M482 516.5L483.9 516.5M485.4 514.3L488.9 514.3L488.9 516.8L485.4 516.8L485.4 514.3M487.2 512.9L487.2 518.5M490.2 514.6L494.1 514.6M492.2 512.9L492.2 518.5M492.2 514.9L490.2 518.5M492.2 514.9L494.1 518.5M495.2 514L496.8 514M496 512.9L496 518.5M497.3 512.9L499.1 512.9L499.1 515.4L497.3 515.4L497.3 512.9M497.2 516.8L499.1 516.8M498.2 515.4L498.2 518.5M500.6 512.9L501.4 514M500.2 515.1L501.4 515.1L501.4 518.5M502.2 513.5L504.1 513.5M502.3 515.1L503.9 515.1L503.9 518.2L502.3 518.2L502.3 515.1M507.2 512.9L505.2 518.5M507.2 514.6L509.1 518.5M506 516.3L508.3 516.3M505.6 513.7L508.7 513.7M512.2 512.9L510.2 518.5M512.2 514.6L514.1 518.5M511 516.3L513.3 516.3M510.6 513.7L513.7 513.7M517.2 512.9L515.2 518.5M517.2 514.6L519.1 518.5M516 516.3L518.3 516.3M515.6 513.7L518.7 513.7M520.6 512.9L521.4 514M520.2 515.1L521.4 515.1L521.4 518.5M522.2 513.5L524.1 513.5M522.3 515.1L523.9 515.1L523.9 518.2L522.3 518.2L522.3 515.1M525.2 513.5L529.1 513.5M525.6 515.4L528.7 515.4M525.2 517.4L529.1 517.4M526.4 513.5L526 518.5M528.1 513.5L528.1 518.5M530.6 512.9L531.4 514M530.2 515.1L531.4 515.1L531.4 518.5M532.2 513.5L534.1 513.5M532.3 515.1L533.9 515.1L533.9 518.2L532.3 518.2L532.3 515.1" stroke="#00ff00" stroke-width="1" shape-rendering="crispEdges"/>
<text x="535.2" y="518.5" font-size="7.2" fill="#00ff00" stroke="#00ff00" stroke-width="0.5" text-anchor="start" textLength="2" lengthAdjust="spacingAndGlyphs">,</text>
<path d="M537.8 513.5L541.7 513.5M538.2 515.4L541.3 515.4M537.8 517.4L541.7 517.4M539 513.5L538.6 518.5M540.7 513.5L540.7 518.5M542.8 514.6L546.7 514.6M544.8 512.9L544.8 518.5M544.8 514.9L542.8 518.5M544.8 514.9L546.7 518.5M547.8 514.6L551.7 514.6M549.8 512.9L549.8 518.5M549.8 514.9L547.8 518.5M549.8 514.9L551.7 518.5M552.8 513.2L556.7 513.2L556.7 518.2L552.8 518.2L552.8 513.2M554.8 513.2L554.8 518.2M552.8 515.7L556.7 515.7M557.8 513.5L561.7 513.5M558.2 515.4L561.3 515.4M557.8 517.4L561.7 517.4M559 513.5L558.6 518.5M560.7 513.5L560.7 518.5M562.8 514.6L566.7 514.6M564.8 512.9L564.8 518.5M564.8 514.9L562.8 518.5M564.8 514.9L566.7 518.5M568 514.3L571.5 514.3L571.5 516.8L568 516.8L568 514.3M569.8 512.9L569.8 518.5" stroke="#00ff00" stroke-width="1" shape-rendering="crispEdges"/>
<text x="463.6" y="527.4" font-size="7.2" fill="#00ff00" stroke="#00ff00" stroke-width="0.5" text-anchor="start" textLength="6" lengthAdjust="spacingAndGlyphs">3.</text>
<path d="M470.2 522.1L474.1 522.1L474.1 527.1L470.2 527.1L470.2 522.1M472.2 522.1L472.2 527.1M470.2 524.6L474.1 524.6M475.6 521.8L476.4 522.9M475.2 524L476.4 524L476.4 527.4M477.2 522.4L479.1 522.4M477.3 524L478.9 524L478.9 527.1L477.3 527.1L477.3 524M480.2 522.4L484.1 522.4M480.6 524.3L483.7 524.3M480.2 526.3L484.1 526.3M481.4 522.4L481 527.4M483.1 522.4L483.1 527.4M485.2 522.1L489.1 522.1L489.1 527.1L485.2 527.1L485.2 522.1M487.2 522.1L487.2 527.1M485.2 524.6L489.1 524.6" stroke="#00ff00" stroke-width="1" shape-rendering="crispEdges"/>
<text x="490.2" y="527.4" font-size="7.2" fill="#00ff00" stroke="#00ff00" stroke-width="0.5" text-anchor="start" textLength="10.4" lengthAdjust="spacingAndGlyphs">35</text>
<path d="M502.2 521.8L501.2 524.6M501.8 523.5L501.8 527.4M502.8 522.9L505.1 522.9M503.9 522.9L503.9 527.4M503 525.4L504.9 525.4" stroke="#00ff00" stroke-width="1" shape-rendering="crispEdges"/>
<text x="506.2" y="527.4" font-size="7.2" fill="#00ff00" stroke="#00ff00" stroke-width="0.5" text-anchor="start" textLength="8" lengthAdjust="spacingAndGlyphs">C1</text>
<path d="M516.8 521.8L514.8 527.4M516.8 523.5L518.7 527.4M515.6 525.2L517.9 525.2M515.2 522.6L518.3 522.6" stroke="#00ff00" stroke-width="1" shape-rendering="crispEdges"/>
<text x="519.8" y="527.4" font-size="7.2" fill="#00ff00" stroke="#00ff00" stroke-width="0.5" text-anchor="start" textLength="4" lengthAdjust="spacingAndGlyphs">&#8212;</text>
<path d="M524.6 523.2L528.1 523.2L528.1 525.7L524.6 525.7L524.6 523.2M526.4 521.8L526.4 527.4M529.4 522.4L533.3 522.4M529.8 524.3L532.9 524.3M529.4 526.3L533.3 526.3M530.6 522.4L530.2 527.4M532.3 522.4L532.3 527.4M536.4 521.8L534.4 527.4M536.4 523.5L538.3 527.4M535.2 525.2L537.5 525.2M534.8 522.6L537.9 522.6" stroke="#00ff00" stroke-width="1" shape-rendering="crispEdges"/>
<text x="539.4" y="527.4" font-size="7.2" fill="#00ff00" stroke="#00ff00" stroke-width="0.5" text-anchor="start" textLength="2" lengthAdjust="spacingAndGlyphs">(</text>
<path d="M542.4 522.1L545.5 522.1M542.6 524.6L545.3 524.6M542 527.3L545.9 527.3M544 522.1L544 527.3M547.4 521.8L548.2 522.9M547 524L548.2 524L548.2 527.4M549 522.4L550.9 522.4M549.1 524L550.7 524L550.7 527.1L549.1 527.1L549.1 524M552 523.5L555.9 523.5M554 521.8L554 527.4M554 523.8L552 527.4M554 523.8L555.9 527.4M557 522.4L560.9 522.4M557.4 524.3L560.5 524.3M557 526.3L560.9 526.3M558.2 522.4L557.8 527.4M559.9 522.4L559.9 527.4M562.2 523.2L565.7 523.2L565.7 525.7L562.2 525.7L562.2 523.2M564 521.8L564 527.4" stroke="#00ff00" stroke-width="1" shape-rendering="crispEdges"/>
<text x="567" y="527.4" font-size="7.2" fill="#00ff00" stroke="#00ff00" stroke-width="0.5" text-anchor="start" textLength="3" lengthAdjust="spacingAndGlyphs">).</text>
<path d="M463.6 530L465.2 530L465.2 535.6L463.6 535.6L463.6 530M465.9 531.1L467.5 531.1L467.5 535L465.9 535L465.9 531.1M468.6 530.3L472.5 530.3L472.5 535.3L468.6 535.3L468.6 530.3M470.6 530.3L470.6 535.3M468.6 532.8L472.5 532.8M474 530.3L477.1 530.3M474.2 532.8L476.9 532.8M473.6 535.5L477.5 535.5M475.6 530.3L475.6 535.5M478.6 530L480.2 530L480.2 535.6L478.6 535.6L478.6 530M480.9 531.1L482.5 531.1L482.5 535L480.9 535L480.9 531.1" stroke="#00ff00" stroke-width="1" shape-rendering="crispEdges"/>
<text x="483.6" y="535.6" font-size="7.2" fill="#00ff00" stroke="#00ff00" stroke-width="0.5" text-anchor="start" textLength="10.4" lengthAdjust="spacingAndGlyphs">35</text>
<path d="M495.6 530L494.6 532.8M495.2 531.7L495.2 535.6M496.2 531.1L498.5 531.1M497.3 531.1L497.3 535.6M496.4 533.6L498.3 533.6" stroke="#00ff00" stroke-width="1" shape-rendering="crispEdges"/>
<text x="499.6" y="535.6" font-size="7.2" fill="#00ff00" stroke="#00ff00" stroke-width="0.5" text-anchor="start" textLength="8" lengthAdjust="spacingAndGlyphs">C2</text>
<path d="M509.2 530L508.2 532.8M508.8 531.7L508.8 535.6M509.8 531.1L512.1 531.1M510.9 531.1L510.9 535.6M510 533.6L511.9 533.6" stroke="#00ff00" stroke-width="1" shape-rendering="crispEdges"/>
<text x="513.2" y="535.6" font-size="7.2" fill="#00ff00" stroke="#00ff00" stroke-width="0.5" text-anchor="start" textLength="4" lengthAdjust="spacingAndGlyphs">&#8212;</text>
<path d="M517.8 530.6L521.7 530.6M518.2 532.5L521.3 532.5M517.8 534.5L521.7 534.5M519 530.6L518.6 535.6M520.7 530.6L520.7 535.6M522.8 531.7L526.7 531.7M524.8 530L524.8 535.6M524.8 532L522.8 535.6M524.8 532L526.7 535.6M528.2 530.3L531.3 530.3M528.4 532.8L531.1 532.8M527.8 535.5L531.7 535.5M529.8 530.3L529.8 535.5" stroke="#00ff00" stroke-width="1" shape-rendering="crispEdges"/>
<text x="532.8" y="535.6" font-size="7.2" fill="#00ff00" stroke="#00ff00" stroke-width="0.5" text-anchor="start" textLength="2" lengthAdjust="spacingAndGlyphs">(</text>
<path d="M535.4 530.6L539.3 530.6M535.8 532.5L538.9 532.5M535.4 534.5L539.3 534.5M536.6 530.6L536.2 535.6M538.3 530.6L538.3 535.6M541.4 530L540.4 532.8M541 531.7L541 535.6M542 531.1L544.3 531.1M543.1 531.1L543.1 535.6M542.2 533.6L544.1 533.6M545.4 531.1L547 531.1M546.2 530L546.2 535.6M547.5 530L549.3 530L549.3 532.5L547.5 532.5L547.5 530M547.4 533.9L549.3 533.9M548.4 532.5L548.4 535.6M550.4 530.3L554.3 530.3L554.3 535.3L550.4 535.3L550.4 530.3M552.4 530.3L552.4 535.3M550.4 532.8L554.3 532.8M555.8 530.3L558.9 530.3M556 532.8L558.7 532.8M555.4 535.5L559.3 535.5M557.4 530.3L557.4 535.5" stroke="#00ff00" stroke-width="1" shape-rendering="crispEdges"/>
<text x="560.4" y="535.6" font-size="7.2" fill="#00ff00" stroke="#00ff00" stroke-width="0.5" text-anchor="start" textLength="3" lengthAdjust="spacingAndGlyphs">).</text>
<text x="463.6" y="544.5" font-size="7.2" fill="#00ff00" stroke="#00ff00" stroke-width="0.5" text-anchor="start" textLength="6" lengthAdjust="spacingAndGlyphs">4.</text>
<path d="M471.2 538.9L470.2 541.7M470.8 540.6L470.8 544.5M471.8 540L474.1 540M472.9 540L472.9 544.5M472 542.5L473.9 542.5M475.2 540L476.8 540M476 538.9L476 544.5M477.3 538.9L479.1 538.9L479.1 541.4L477.3 541.4L477.3 538.9M477.2 542.8L479.1 542.8M478.2 541.4L478.2 544.5M480.2 539.2L484.1 539.2L484.1 544.2L480.2 544.2L480.2 539.2M482.2 539.2L482.2 544.2M480.2 541.7L484.1 541.7M486.2 538.9L485.2 541.7M485.8 540.6L485.8 544.5M486.8 540L489.1 540M487.9 540L487.9 544.5M487 542.5L488.9 542.5M492.2 538.9L490.2 544.5M492.2 540.6L494.1 544.5M491 542.3L493.3 542.3M490.6 539.7L493.7 539.7M496.2 538.9L495.2 541.7M495.8 540.6L495.8 544.5M496.8 540L499.1 540M497.9 540L497.9 544.5M497 542.5L498.9 542.5" stroke="#00ff00" stroke-width="1" shape-rendering="crispEdges"/>
<text x="500.2" y="544.5" font-size="7.2" fill="#00ff00" stroke="#00ff00" stroke-width="0.5" text-anchor="start" textLength="42.5" lengthAdjust="spacingAndGlyphs">n1&#8212;32r/min</text>
<text x="548.3" y="544.5" font-size="7.2" fill="#00ff00" stroke="#00ff00" stroke-width="0.5" text-anchor="start" textLength="43" lengthAdjust="spacingAndGlyphs">n2&#8212;40r/min</text>
<text x="597.4" y="544.5" font-size="7.2" fill="#00ff00" stroke="#00ff00" stroke-width="0.5" text-anchor="start" textLength="43" lengthAdjust="spacingAndGlyphs">n3&#8212;50r/min</text>
<text x="435.1" y="553" font-size="7.2" fill="#00ff00" stroke="#00ff00" stroke-width="0.5" text-anchor="start" textLength="37.7" lengthAdjust="spacingAndGlyphs">Q=56m/h</text>
<text x="483.8" y="553" font-size="7.2" fill="#00ff00" stroke="#00ff00" stroke-width="0.5" text-anchor="start" textLength="36.8" lengthAdjust="spacingAndGlyphs">Q=62m/h</text>
<text x="529.2" y="553" font-size="7.2" fill="#00ff00" stroke="#00ff00" stroke-width="0.5" text-anchor="start" textLength="2.5" lengthAdjust="spacingAndGlyphs">*</text>
<text x="537.3" y="553" font-size="7.2" fill="#00ff00" stroke="#00ff00" stroke-width="0.5" text-anchor="start" textLength="37.7" lengthAdjust="spacingAndGlyphs">Q=78m/h</text>
<text x="589.6" y="553" font-size="7.2" fill="#00ff00" stroke="#00ff00" stroke-width="0.5" text-anchor="start" textLength="38" lengthAdjust="spacingAndGlyphs">Q=96m/h</text>
<text x="463.6" y="561.3" font-size="7.2" fill="#00ff00" stroke="#00ff00" stroke-width="0.5" text-anchor="start" textLength="6" lengthAdjust="spacingAndGlyphs">5.</text>
<path d="M470.2 555.7L471.8 555.7L471.8 561.3L470.2 561.3L470.2 555.7M472.5 556.8L474.1 556.8L474.1 560.7L472.5 560.7L472.5 556.8M475.6 556L478.7 556M475.8 558.5L478.5 558.5M475.2 561.2L479.1 561.2M477.2 556L477.2 561.2M480.2 557.4L484.1 557.4M482.2 555.7L482.2 561.3M482.2 557.7L480.2 561.3M482.2 557.7L484.1 561.3M485.6 556L488.7 556M485.8 558.5L488.5 558.5M485.2 561.2L489.1 561.2M487.2 556L487.2 561.2M490.6 556L493.7 556M490.8 558.5L493.5 558.5M490.2 561.2L494.1 561.2M492.2 556L492.2 561.2M495.2 555.7L496.8 555.7L496.8 561.3L495.2 561.3L495.2 555.7M497.5 556.8L499.1 556.8L499.1 560.7L497.5 560.7L497.5 556.8M500.2 555.7L501.8 555.7L501.8 561.3L500.2 561.3L500.2 555.7M502.5 556.8L504.1 556.8L504.1 560.7L502.5 560.7L502.5 556.8" stroke="#00ff00" stroke-width="1" shape-rendering="crispEdges"/>
<text x="506.2" y="561.3" font-size="7.2" fill="#00ff00" stroke="#00ff00" stroke-width="0.5" text-anchor="start" textLength="12" lengthAdjust="spacingAndGlyphs">X1&#8212;</text>
<path d="M519 557.1L522.5 557.1L522.5 559.6L519 559.6L519 557.1M520.8 555.7L520.8 561.3M523.8 556.3L527.7 556.3M524.2 558.2L527.3 558.2M523.8 560.2L527.7 560.2M525 556.3L524.6 561.3M526.7 556.3L526.7 561.3M529.2 555.7L530 556.8M528.8 557.9L530 557.9L530 561.3M530.8 556.3L532.7 556.3M530.9 557.9L532.5 557.9L532.5 561L530.9 561L530.9 557.9" stroke="#00ff00" stroke-width="1" shape-rendering="crispEdges"/>
<path d="M537.2 556L540.3 556M537.4 558.5L540.1 558.5M536.8 561.2L540.7 561.2M538.8 556L538.8 561.2M541.8 556L545.7 556L545.7 561L541.8 561L541.8 556M543.8 556L543.8 561M541.8 558.5L545.7 558.5M546.8 556L550.7 556L550.7 561L546.8 561L546.8 556M548.8 556L548.8 561M546.8 558.5L550.7 558.5" stroke="#00ff00" stroke-width="1" shape-rendering="crispEdges"/>
<text x="551.8" y="561.3" font-size="7.2" fill="#00ff00" stroke="#00ff00" stroke-width="0.5" text-anchor="start" textLength="2" lengthAdjust="spacingAndGlyphs">(</text>
<path d="M554.6 557.1L558.1 557.1L558.1 559.6L554.6 559.6L554.6 557.1M556.4 555.7L556.4 561.3M559.8 556L562.9 556M560 558.5L562.7 558.5M559.4 561.2L563.3 561.2M561.4 556L561.4 561.2M565.4 555.7L564.4 558.5M565 557.4L565 561.3M566 556.8L568.3 556.8M567.1 556.8L567.1 561.3M566.2 559.3L568.1 559.3M569.4 556.8L571 556.8M570.2 555.7L570.2 561.3M571.5 555.7L573.3 555.7L573.3 558.2L571.5 558.2L571.5 555.7M571.4 559.6L573.3 559.6M572.4 558.2L572.4 561.3M576.4 555.7L574.4 561.3M576.4 557.4L578.3 561.3M575.2 559.1L577.5 559.1M574.8 556.5L577.9 556.5" stroke="#00ff00" stroke-width="1" shape-rendering="crispEdges"/>
<text x="579.4" y="561.3" font-size="7.2" fill="#00ff00" stroke="#00ff00" stroke-width="0.5" text-anchor="start" textLength="2" lengthAdjust="spacingAndGlyphs">)</text>
<text x="426.6" y="569.6" font-size="7.2" fill="#00ff00" stroke="#00ff00" stroke-width="0.5" text-anchor="start" textLength="13" lengthAdjust="spacingAndGlyphs">X2&#8212;</text>
<path d="M440.6 564L441.4 565.1M440.2 566.2L441.4 566.2L441.4 569.6M442.2 564.6L444.1 564.6M442.3 566.2L443.9 566.2L443.9 569.3L442.3 569.3L442.3 566.2M445.6 564L446.4 565.1M445.2 566.2L446.4 566.2L446.4 569.6M447.2 564.6L449.1 564.6M447.3 566.2L448.9 566.2L448.9 569.3L447.3 569.3L447.3 566.2M452.2 564L450.2 569.6M452.2 565.7L454.1 569.6M451 567.4L453.3 567.4M450.6 564.8L453.7 564.8" stroke="#00ff00" stroke-width="1" shape-rendering="crispEdges"/>
<path d="M458.6 564.3L461.7 564.3M458.8 566.8L461.5 566.8M458.2 569.5L462.1 569.5M460.2 564.3L460.2 569.5M463.2 565.1L464.8 565.1M464 564L464 569.6M465.3 564L467.1 564L467.1 566.5L465.3 566.5L465.3 564M465.2 567.9L467.1 567.9M466.2 566.5L466.2 569.6M468.6 564L469.4 565.1M468.2 566.2L469.4 566.2L469.4 569.6M470.2 564.6L472.1 564.6M470.3 566.2L471.9 566.2L471.9 569.3L470.3 569.3L470.3 566.2" stroke="#00ff00" stroke-width="1" shape-rendering="crispEdges"/>
<text x="473.2" y="569.6" font-size="7.2" fill="#00ff00" stroke="#00ff00" stroke-width="0.5" text-anchor="start" textLength="2" lengthAdjust="spacingAndGlyphs">(</text>
<path d="M476 565.4L479.5 565.4L479.5 567.9L476 567.9L476 565.4M477.8 564L477.8 569.6M480.8 564.6L484.7 564.6M481.2 566.5L484.3 566.5M480.8 568.5L484.7 568.5M482 564.6L481.6 569.6M483.7 564.6L483.7 569.6M485.8 565.1L487.4 565.1M486.6 564L486.6 569.6M487.9 564L489.7 564L489.7 566.5L487.9 566.5L487.9 564M487.8 567.9L489.7 567.9M488.8 566.5L488.8 569.6M491.8 564L490.8 566.8M491.4 565.7L491.4 569.6M492.4 565.1L494.7 565.1M493.5 565.1L493.5 569.6M492.6 567.6L494.5 567.6" stroke="#00ff00" stroke-width="1" shape-rendering="crispEdges"/>
<text x="495.8" y="569.6" font-size="7.2" fill="#00ff00" stroke="#00ff00" stroke-width="0.5" text-anchor="start" textLength="2" lengthAdjust="spacingAndGlyphs">)</text>
<path d="M423.4 572.5L422.4 575.3M423 574.2L423 578.1M424 573.6L426.3 573.6M425.1 573.6L425.1 578.1M424.2 576.1L426.1 576.1" stroke="#00ff00" stroke-width="1" shape-rendering="crispEdges"/>
<text x="427.4" y="578.1" font-size="7.2" fill="#00ff00" stroke="#00ff00" stroke-width="0.5" text-anchor="start" textLength="13" lengthAdjust="spacingAndGlyphs">X3&#8212;</text>
<path d="M442 572.5L441 575.3M441.6 574.2L441.6 578.1M442.6 573.6L444.9 573.6M443.7 573.6L443.7 578.1M442.8 576.1L444.7 576.1M447 572.5L446 575.3M446.6 574.2L446.6 578.1M447.6 573.6L449.9 573.6M448.7 573.6L448.7 578.1M447.8 576.1L449.7 576.1M451 574.2L454.9 574.2M452.9 572.5L452.9 578.1M452.9 574.5L451 578.1M452.9 574.5L454.9 578.1" stroke="#00ff00" stroke-width="1" shape-rendering="crispEdges"/>
<path d="M459 573.1L462.9 573.1M459.4 575L462.5 575M459 577L462.9 577M460.2 573.1L459.8 578.1M461.9 573.1L461.9 578.1M465 572.5L464 575.3M464.6 574.2L464.6 578.1M465.6 573.6L467.9 573.6M466.7 573.6L466.7 578.1M465.8 576.1L467.7 576.1M469.2 573.9L472.7 573.9L472.7 576.4L469.2 576.4L469.2 573.9M470.9 572.5L470.9 578.1" stroke="#00ff00" stroke-width="1" shape-rendering="crispEdges"/>
<text x="474" y="578.1" font-size="7.2" fill="#00ff00" stroke="#00ff00" stroke-width="0.5" text-anchor="start" textLength="2" lengthAdjust="spacingAndGlyphs">(</text>
<path d="M476.6 572.5L478.2 572.5L478.2 578.1L476.6 578.1L476.6 572.5M478.9 573.6L480.5 573.6L480.5 577.5L478.9 577.5L478.9 573.6M481.6 574.2L485.5 574.2M483.6 572.5L483.6 578.1M483.6 574.5L481.6 578.1M483.6 574.5L485.5 578.1M486.6 572.5L488.2 572.5L488.2 578.1L486.6 578.1L486.6 572.5M488.9 573.6L490.5 573.6L490.5 577.5L488.9 577.5L488.9 573.6M491.6 573.1L495.5 573.1M492 575L495.1 575M491.6 577L495.5 577M492.8 573.1L492.4 578.1M494.5 573.1L494.5 578.1" stroke="#00ff00" stroke-width="1" shape-rendering="crispEdges"/>
<text x="496.6" y="578.1" font-size="7.2" fill="#00ff00" stroke="#00ff00" stroke-width="0.5" text-anchor="start" textLength="2" lengthAdjust="spacingAndGlyphs">)</text>
<text x="426.8" y="586.4" font-size="7.2" fill="#00ff00" stroke="#00ff00" stroke-width="0.5" text-anchor="start" textLength="13" lengthAdjust="spacingAndGlyphs">X4&#8212;</text>
<path d="M440.8 581.1L443.9 581.1M441 583.6L443.7 583.6M440.4 586.3L444.3 586.3M442.4 581.1L442.4 586.3M445.4 582.5L449.3 582.5M447.4 580.8L447.4 586.4M447.4 582.8L445.4 586.4M447.4 582.8L449.3 586.4M452.4 580.8L450.4 586.4M452.4 582.5L454.3 586.4M451.2 584.2L453.5 584.2M450.8 581.6L453.9 581.6" stroke="#00ff00" stroke-width="1" shape-rendering="crispEdges"/>
<path d="M458.8 580.8L459.6 581.9M458.4 583L459.6 583L459.6 586.4M460.4 581.4L462.3 581.4M460.5 583L462.1 583L462.1 586.1L460.5 586.1L460.5 583M463.6 582.2L467.1 582.2L467.1 584.7L463.6 584.7L463.6 582.2M465.4 580.8L465.4 586.4M468.4 582.5L472.3 582.5M470.4 580.8L470.4 586.4M470.4 582.8L468.4 586.4M470.4 582.8L472.3 586.4" stroke="#00ff00" stroke-width="1" shape-rendering="crispEdges"/>
<text x="473.4" y="586.4" font-size="7.2" fill="#00ff00" stroke="#00ff00" stroke-width="0.5" text-anchor="start" textLength="2" lengthAdjust="spacingAndGlyphs">(</text>
<path d="M476.2 582.2L479.7 582.2L479.7 584.7L476.2 584.7L476.2 582.2M478 580.8L478 586.4M481.4 580.8L482.2 581.9M481 583L482.2 583L482.2 586.4M483 581.4L484.9 581.4M483.1 583L484.7 583L484.7 586.1L483.1 586.1L483.1 583M486.4 581.1L489.5 581.1M486.6 583.6L489.3 583.6M486 586.3L489.9 586.3M488 581.1L488 586.3M491 581.9L492.6 581.9M491.8 580.8L491.8 586.4M493.1 580.8L494.9 580.8L494.9 583.3L493.1 583.3L493.1 580.8M493 584.7L494.9 584.7M494 583.3L494 586.4" stroke="#00ff00" stroke-width="1" shape-rendering="crispEdges"/>
<text x="496" y="586.4" font-size="7.2" fill="#00ff00" stroke="#00ff00" stroke-width="0.5" text-anchor="start" textLength="3" lengthAdjust="spacingAndGlyphs">).</text>
<text x="463.6" y="595.2" font-size="7.2" fill="#00ff00" stroke="#00ff00" stroke-width="0.5" text-anchor="start" textLength="6" lengthAdjust="spacingAndGlyphs">6.</text>
<path d="M470.2 591.3L474.1 591.3M472.2 589.6L472.2 595.2M472.2 591.6L470.2 595.2M472.2 591.6L474.1 595.2M477.2 589.6L475.2 595.2M477.2 591.3L479.1 595.2M476 593L478.3 593M475.6 590.4L478.7 590.4M480.6 589.6L481.4 590.7M480.2 591.8L481.4 591.8L481.4 595.2M482.2 590.2L484.1 590.2M482.3 591.8L483.9 591.8L483.9 594.9L482.3 594.9L482.3 591.8M485.4 591L488.9 591L488.9 593.5L485.4 593.5L485.4 591M487.2 589.6L487.2 595.2M490.2 591.3L494.1 591.3M492.2 589.6L492.2 595.2M492.2 591.6L490.2 595.2M492.2 591.6L494.1 595.2M495.2 589.6L496.8 589.6L496.8 595.2L495.2 595.2L495.2 589.6M497.5 590.7L499.1 590.7L499.1 594.6L497.5 594.6L497.5 590.7M500.6 589.6L501.4 590.7M500.2 591.8L501.4 591.8L501.4 595.2M502.2 590.2L504.1 590.2M502.3 591.8L503.9 591.8L503.9 594.9L502.3 594.9L502.3 591.8" stroke="#00ff00" stroke-width="1" shape-rendering="crispEdges"/>
<text x="506.2" y="595.2" font-size="7.2" fill="#00ff00" stroke="#00ff00" stroke-width="0.5" text-anchor="start" textLength="8" lengthAdjust="spacingAndGlyphs">M1</text>
<path d="M515.8 589.6L514.8 592.4M515.4 591.3L515.4 595.2M516.4 590.7L518.7 590.7M517.5 590.7L517.5 595.2M516.6 593.2L518.5 593.2M520.2 589.9L523.3 589.9M520.4 592.4L523.1 592.4M519.8 595.1L523.7 595.1M521.8 589.9L521.8 595.1M524.8 589.9L528.7 589.9L528.7 594.9L524.8 594.9L524.8 589.9M526.8 589.9L526.8 594.9M524.8 592.4L528.7 592.4M531.8 589.6L529.8 595.2M531.8 591.3L533.7 595.2M530.6 593L532.9 593M530.2 590.4L533.3 590.4M535.2 589.6L536 590.7M534.8 591.8L536 591.8L536 595.2M536.8 590.2L538.7 590.2M536.9 591.8L538.5 591.8L538.5 594.9L536.9 594.9L536.9 591.8M541.8 589.6L539.8 595.2M541.8 591.3L543.7 595.2M540.6 593L542.9 593M540.2 590.4L543.3 590.4M544.8 590.2L548.7 590.2M545.2 592.1L548.3 592.1M544.8 594.1L548.7 594.1M546 590.2L545.6 595.2M547.7 590.2L547.7 595.2M549.8 591.3L553.7 591.3M551.8 589.6L551.8 595.2M551.8 591.6L549.8 595.2M551.8 591.6L553.7 595.2M554.8 591.3L558.7 591.3M556.8 589.6L556.8 595.2M556.8 591.6L554.8 595.2M556.8 591.6L558.7 595.2M559.8 590.2L563.7 590.2M560.2 592.1L563.3 592.1M559.8 594.1L563.7 594.1M561 590.2L560.6 595.2M562.7 590.2L562.7 595.2M564.8 590.2L568.7 590.2M565.2 592.1L568.3 592.1M564.8 594.1L568.7 594.1M566 590.2L565.6 595.2M567.7 590.2L567.7 595.2" stroke="#00ff00" stroke-width="1" shape-rendering="crispEdges"/>
<text x="569.8" y="595.2" font-size="7.2" fill="#00ff00" stroke="#00ff00" stroke-width="0.5" text-anchor="start" textLength="2" lengthAdjust="spacingAndGlyphs">(</text>
<path d="M572.4 590.2L576.3 590.2M572.8 592.1L575.9 592.1M572.4 594.1L576.3 594.1M573.6 590.2L573.2 595.2M575.3 590.2L575.3 595.2" stroke="#00ff00" stroke-width="1" shape-rendering="crispEdges"/>
<path d="M463.6 598.5L467.5 598.5M464 600.4L467.1 600.4M463.6 602.4L467.5 602.4M464.8 598.5L464.4 603.5M466.5 598.5L466.5 603.5M468.6 598.2L472.5 598.2L472.5 603.2L468.6 603.2L468.6 598.2M470.6 598.2L470.6 603.2M468.6 600.7L472.5 600.7M473.6 599.6L477.5 599.6M475.6 597.9L475.6 603.5M475.6 599.9L473.6 603.5M475.6 599.9L477.5 603.5" stroke="#00ff00" stroke-width="1" shape-rendering="crispEdges"/>
<text x="478.6" y="603.5" font-size="7.2" fill="#00ff00" stroke="#00ff00" stroke-width="0.5" text-anchor="start" textLength="3" lengthAdjust="spacingAndGlyphs">);</text>
<text x="483.2" y="603.5" font-size="7.2" fill="#00ff00" stroke="#00ff00" stroke-width="0.5" text-anchor="start" textLength="8" lengthAdjust="spacingAndGlyphs">M2</text>
<path d="M492.2 598.2L495.3 598.2M492.4 600.7L495.1 600.7M491.8 603.4L495.7 603.4M493.8 598.2L493.8 603.4M496.8 599.6L500.7 599.6M498.8 597.9L498.8 603.5M498.8 599.9L496.8 603.5M498.8 599.9L500.7 603.5M503.8 597.9L501.8 603.5M503.8 599.6L505.7 603.5M502.6 601.3L504.9 601.3M502.2 598.7L505.3 598.7M506.8 598.2L510.7 598.2L510.7 603.2L506.8 603.2L506.8 598.2M508.8 598.2L508.8 603.2M506.8 600.7L510.7 600.7M511.8 598.5L515.7 598.5M512.2 600.4L515.3 600.4M511.8 602.4L515.7 602.4M513 598.5L512.6 603.5M514.7 598.5L514.7 603.5M517.2 598.2L520.3 598.2M517.4 600.7L520.1 600.7M516.8 603.4L520.7 603.4M518.8 598.2L518.8 603.4M521.8 599L523.4 599M522.6 597.9L522.6 603.5M523.9 597.9L525.7 597.9L525.7 600.4L523.9 600.4L523.9 597.9M523.8 601.8L525.7 601.8M524.8 600.4L524.8 603.5M527 599.3L530.5 599.3L530.5 601.8L527 601.8L527 599.3M528.8 597.9L528.8 603.5M531.8 597.9L533.4 597.9L533.4 603.5L531.8 603.5L531.8 597.9M534.1 599L535.7 599L535.7 602.9L534.1 602.9L534.1 599" stroke="#00ff00" stroke-width="1" shape-rendering="crispEdges"/>
<text x="536.8" y="603.5" font-size="7.2" fill="#00ff00" stroke="#00ff00" stroke-width="0.5" text-anchor="start" textLength="2" lengthAdjust="spacingAndGlyphs">(</text>
<path d="M539.4 599L541 599M540.2 597.9L540.2 603.5M541.5 597.9L543.3 597.9L543.3 600.4L541.5 600.4L541.5 597.9M541.4 601.8L543.3 601.8M542.4 600.4L542.4 603.5M546.4 597.9L544.4 603.5M546.4 599.6L548.3 603.5M545.2 601.3L547.5 601.3M544.8 598.7L547.9 598.7M549.8 598.2L552.9 598.2M550 600.7L552.7 600.7M549.4 603.4L553.3 603.4M551.4 598.2L551.4 603.4M554.4 599L556 599M555.2 597.9L555.2 603.5M556.5 597.9L558.3 597.9L558.3 600.4L556.5 600.4L556.5 597.9M556.4 601.8L558.3 601.8M557.4 600.4L557.4 603.5M559.6 599.3L563.1 599.3L563.1 601.8L559.6 601.8L559.6 599.3M561.4 597.9L561.4 603.5" stroke="#00ff00" stroke-width="1" shape-rendering="crispEdges"/>
<text x="564.4" y="603.5" font-size="7.2" fill="#00ff00" stroke="#00ff00" stroke-width="0.5" text-anchor="start" textLength="2" lengthAdjust="spacingAndGlyphs">)</text>
<text x="463.6" y="612" font-size="7.2" fill="#00ff00" stroke="#00ff00" stroke-width="0.5" text-anchor="start" textLength="6" lengthAdjust="spacingAndGlyphs">7.</text>
<path d="M470.2 607.5L471.8 607.5M471 606.4L471 612M472.3 606.4L474.1 606.4L474.1 608.9L472.3 608.9L472.3 606.4M472.2 610.3L474.1 610.3M473.2 608.9L473.2 612M475.2 606.7L479.1 606.7L479.1 611.7L475.2 611.7L475.2 606.7M477.2 606.7L477.2 611.7M475.2 609.2L479.1 609.2M480.2 608.1L484.1 608.1M482.2 606.4L482.2 612M482.2 608.4L480.2 612M482.2 608.4L484.1 612M485.2 606.7L489.1 606.7L489.1 611.7L485.2 611.7L485.2 606.7M487.2 606.7L487.2 611.7M485.2 609.2L489.1 609.2M490.2 607.5L491.8 607.5M491 606.4L491 612M492.3 606.4L494.1 606.4L494.1 608.9L492.3 608.9L492.3 606.4M492.2 610.3L494.1 610.3M493.2 608.9L493.2 612" stroke="#00ff00" stroke-width="1" shape-rendering="crispEdges"/>
<text x="496.2" y="612" font-size="7.2" fill="#00ff00" stroke="#00ff00" stroke-width="0.5" text-anchor="start" textLength="4.5" lengthAdjust="spacingAndGlyphs">A</text>
<path d="M503.3 606.4L501.3 612M503.3 608.1L505.2 612M502.1 609.8L504.4 609.8M501.7 607.2L504.8 607.2M506.7 606.7L509.8 606.7M506.9 609.2L509.6 609.2M506.3 611.9L510.2 611.9M508.3 606.7L508.3 611.9" stroke="#00ff00" stroke-width="1" shape-rendering="crispEdges"/>
<text x="511.3" y="612" font-size="7.2" fill="#00ff00" stroke="#00ff00" stroke-width="0.5" text-anchor="start" textLength="4" lengthAdjust="spacingAndGlyphs">&#8212;</text>
<path d="M517.9 606.4L515.9 612M517.9 608.1L519.8 612M516.7 609.8L519 609.8M516.3 607.2L519.4 607.2M520.9 606.4L522.5 606.4L522.5 612L520.9 612L520.9 606.4M523.2 607.5L524.8 607.5L524.8 611.4L523.2 611.4L523.2 607.5M525.9 607.5L527.5 607.5M526.7 606.4L526.7 612M528 606.4L529.8 606.4L529.8 608.9L528 608.9L528 606.4M527.9 610.3L529.8 610.3M528.9 608.9L528.9 612M530.9 607.5L532.5 607.5M531.7 606.4L531.7 612M533 606.4L534.8 606.4L534.8 608.9L533 608.9L533 606.4M532.9 610.3L534.8 610.3M533.9 608.9L533.9 612" stroke="#00ff00" stroke-width="1" shape-rendering="crispEdges"/>
<text x="535.9" y="612" font-size="7.2" fill="#00ff00" stroke="#00ff00" stroke-width="0.5" text-anchor="start" textLength="2" lengthAdjust="spacingAndGlyphs">(</text>
<path d="M538.5 607.5L540.1 607.5M539.3 606.4L539.3 612M540.6 606.4L542.4 606.4L542.4 608.9L540.6 608.9L540.6 606.4M540.5 610.3L542.4 610.3M541.5 608.9L541.5 612M545.5 606.4L543.5 612M545.5 608.1L547.4 612M544.3 609.8L546.6 609.8M543.9 607.2L547 607.2M548.5 606.4L550.1 606.4L550.1 612L548.5 612L548.5 606.4M550.8 607.5L552.4 607.5L552.4 611.4L550.8 611.4L550.8 607.5M553.9 606.4L554.7 607.5M553.5 608.6L554.7 608.6L554.7 612M555.5 607L557.4 607M555.6 608.6L557.2 608.6L557.2 611.7L555.6 611.7L555.6 608.6" stroke="#00ff00" stroke-width="1" shape-rendering="crispEdges"/>
<text x="558.5" y="612" font-size="7.2" fill="#00ff00" stroke="#00ff00" stroke-width="0.5" text-anchor="start" textLength="2" lengthAdjust="spacingAndGlyphs">)</text>
<text x="432.7" y="620.3" font-size="7.2" fill="#00ff00" stroke="#00ff00" stroke-width="0.5" text-anchor="start" textLength="4" lengthAdjust="spacingAndGlyphs">8</text>
<path d="M437.3 614.7L438.9 614.7L438.9 620.3L437.3 620.3L437.3 614.7M439.6 615.8L441.2 615.8L441.2 619.7L439.6 619.7L439.6 615.8M442.3 614.7L443.9 614.7L443.9 620.3L442.3 620.3L442.3 614.7M444.6 615.8L446.2 615.8L446.2 619.7L444.6 619.7L444.6 615.8M448.3 614.7L447.3 617.5M447.9 616.4L447.9 620.3M448.9 615.8L451.2 615.8M450 615.8L450 620.3M449.1 618.3L451 618.3" stroke="#00ff00" stroke-width="1" shape-rendering="crispEdges"/>
<text x="452.3" y="620.3" font-size="7.2" fill="#00ff00" stroke="#00ff00" stroke-width="0.5" text-anchor="start" textLength="4" lengthAdjust="spacingAndGlyphs">&#8212;</text>
<path d="M456.9 614.7L458.5 614.7L458.5 620.3L456.9 620.3L456.9 614.7M459.2 615.8L460.8 615.8L460.8 619.7L459.2 619.7L459.2 615.8M461.9 614.7L463.5 614.7L463.5 620.3L461.9 620.3L461.9 614.7M464.2 615.8L465.8 615.8L465.8 619.7L464.2 619.7L464.2 615.8M466.9 615.8L468.5 615.8M467.7 614.7L467.7 620.3M469 614.7L470.8 614.7L470.8 617.2L469 617.2L469 614.7M468.9 618.6L470.8 618.6M469.9 617.2L469.9 620.3" stroke="#00ff00" stroke-width="1" shape-rendering="crispEdges"/>
<text x="471.9" y="620.3" font-size="7.2" fill="#00ff00" stroke="#00ff00" stroke-width="0.5" text-anchor="start" textLength="2" lengthAdjust="spacingAndGlyphs">(</text>
<path d="M474.5 615.3L478.4 615.3M474.9 617.2L478 617.2M474.5 619.2L478.4 619.2M475.7 615.3L475.3 620.3M477.4 615.3L477.4 620.3M481.5 614.7L479.5 620.3M481.5 616.4L483.4 620.3M480.3 618.1L482.6 618.1M479.9 615.5L483 615.5M484.7 616.1L488.2 616.1L488.2 618.6L484.7 618.6L484.7 616.1M486.5 614.7L486.5 620.3M489.7 616.1L493.2 616.1L493.2 618.6L489.7 618.6L489.7 616.1M491.5 614.7L491.5 620.3M494.5 615L498.4 615L498.4 620L494.5 620L494.5 615M496.5 615L496.5 620M494.5 617.5L498.4 617.5" stroke="#00ff00" stroke-width="1" shape-rendering="crispEdges"/>
<text x="499.5" y="620.3" font-size="7.2" fill="#00ff00" stroke="#00ff00" stroke-width="0.5" text-anchor="start" textLength="3" lengthAdjust="spacingAndGlyphs">).</text>
<text x="463.6" y="629.1" font-size="7.2" fill="#00ff00" stroke="#00ff00" stroke-width="0.5" text-anchor="start" textLength="6" lengthAdjust="spacingAndGlyphs">9.</text>
<path d="M470.2 624.1L474.1 624.1M470.6 626L473.7 626M470.2 628L474.1 628M471.4 624.1L471 629.1M473.1 624.1L473.1 629.1M475.2 623.8L479.1 623.8L479.1 628.8L475.2 628.8L475.2 623.8M477.2 623.8L477.2 628.8M475.2 626.3L479.1 626.3M480.2 623.5L481.8 623.5L481.8 629.1L480.2 629.1L480.2 623.5M482.5 624.6L484.1 624.6L484.1 628.5L482.5 628.5L482.5 624.6" stroke="#00ff00" stroke-width="1" shape-rendering="crispEdges"/>
<path d="M487.6 623.5L488.4 624.6M487.2 625.7L488.4 625.7L488.4 629.1M489.2 624.1L491.1 624.1M489.3 625.7L490.9 625.7L490.9 628.8L489.3 628.8L489.3 625.7M494.2 623.5L492.2 629.1M494.2 625.2L496.1 629.1M493 626.9L495.3 626.9M492.6 624.3L495.7 624.3M497.2 624.1L501.1 624.1M497.6 626L500.7 626M497.2 628L501.1 628M498.4 624.1L498 629.1M500.1 624.1L500.1 629.1M504.2 623.5L502.2 629.1M504.2 625.2L506.1 629.1M503 626.9L505.3 626.9M502.6 624.3L505.7 624.3" stroke="#00ff00" stroke-width="1" shape-rendering="crispEdges"/>
<text x="507.2" y="629.1" font-size="7.2" fill="#00ff00" stroke="#00ff00" stroke-width="0.5" text-anchor="start" textLength="4" lengthAdjust="spacingAndGlyphs">&#8212;</text>
<path d="M513.8 623.5L511.8 629.1M513.8 625.2L515.7 629.1M512.6 626.9L514.9 626.9M512.2 624.3L515.3 624.3M516.8 625.2L520.7 625.2M518.8 623.5L518.8 629.1M518.8 625.5L516.8 629.1M518.8 625.5L520.7 629.1M521.8 623.5L523.4 623.5L523.4 629.1L521.8 629.1L521.8 623.5M524.1 624.6L525.7 624.6L525.7 628.5L524.1 628.5L524.1 624.6" stroke="#00ff00" stroke-width="1" shape-rendering="crispEdges"/>
<text x="526.8" y="629.1" font-size="7.2" fill="#00ff00" stroke="#00ff00" stroke-width="0.5" text-anchor="start" textLength="3.6" lengthAdjust="spacingAndGlyphs">X</text>
<path d="M531 625.2L534.9 625.2M533 623.5L533 629.1M533 625.5L531 629.1M533 625.5L534.9 629.1M536 623.5L537.6 623.5L537.6 629.1L536 629.1L536 623.5M538.3 624.6L539.9 624.6L539.9 628.5L538.3 628.5L538.3 624.6M541 624.1L544.9 624.1M541.4 626L544.5 626M541 628L544.9 628M542.2 624.1L541.8 629.1M543.9 624.1L543.9 629.1" stroke="#00ff00" stroke-width="1" shape-rendering="crispEdges"/>
<text x="546" y="629.1" font-size="7.2" fill="#00ff00" stroke="#00ff00" stroke-width="0.5" text-anchor="start" textLength="3.6" lengthAdjust="spacingAndGlyphs">X</text>
<path d="M550.2 623.5L551.8 623.5L551.8 629.1L550.2 629.1L550.2 623.5M552.5 624.6L554.1 624.6L554.1 628.5L552.5 628.5L552.5 624.6M557.2 623.5L555.2 629.1M557.2 625.2L559.1 629.1M556 626.9L558.3 626.9M555.6 624.3L558.7 624.3M560.2 623.5L561.8 623.5L561.8 629.1L560.2 629.1L560.2 623.5M562.5 624.6L564.1 624.6L564.1 628.5L562.5 628.5L562.5 624.6" stroke="#00ff00" stroke-width="1" shape-rendering="crispEdges"/>
<text x="565.2" y="629.1" font-size="7.2" fill="#00ff00" stroke="#00ff00" stroke-width="0.5" text-anchor="start" textLength="4" lengthAdjust="spacingAndGlyphs">&#8212;</text>
<path d="M569.8 624.1L573.7 624.1M570.2 626L573.3 626M569.8 628L573.7 628M571 624.1L570.6 629.1M572.7 624.1L572.7 629.1M575.2 623.5L576 624.6M574.8 625.7L576 625.7L576 629.1M576.8 624.1L578.7 624.1M576.9 625.7L578.5 625.7L578.5 628.8L576.9 628.8L576.9 625.7" stroke="#00ff00" stroke-width="1" shape-rendering="crispEdges"/>
<text x="463.6" y="638" font-size="7.2" fill="#00ff00" stroke="#00ff00" stroke-width="0.5" text-anchor="start" textLength="7" lengthAdjust="spacingAndGlyphs">A&#8212;</text>
<path d="M471.6 632.4L472.4 633.5M471.2 634.6L472.4 634.6L472.4 638M473.2 633L475.1 633M473.3 634.6L474.9 634.6L474.9 637.7L473.3 637.7L473.3 634.6M476.4 633.8L479.9 633.8L479.9 636.3L476.4 636.3L476.4 633.8M478.2 632.4L478.2 638M481.2 633L485.1 633M481.6 634.9L484.7 634.9M481.2 636.9L485.1 636.9M482.4 633L482 638M484.1 633L484.1 638" stroke="#00ff00" stroke-width="1" shape-rendering="crispEdges"/>
<text x="486.2" y="638" font-size="7.2" fill="#00ff00" stroke="#00ff00" stroke-width="0.5" text-anchor="start" textLength="4" lengthAdjust="spacingAndGlyphs">&#8212;</text>
<path d="M492.8 632.4L490.8 638M492.8 634.1L494.7 638M491.6 635.8L493.9 635.8M491.2 633.2L494.3 633.2M495.8 634.1L499.7 634.1M497.8 632.4L497.8 638M497.8 634.4L495.8 638M497.8 634.4L499.7 638M500.8 634.1L504.7 634.1M502.8 632.4L502.8 638M502.8 634.4L500.8 638M502.8 634.4L504.7 638" stroke="#00ff00" stroke-width="1" shape-rendering="crispEdges"/>
<text x="505.8" y="638" font-size="7.2" fill="#00ff00" stroke="#00ff00" stroke-width="0.5" text-anchor="start" textLength="4" lengthAdjust="spacingAndGlyphs">&#8212;</text>
<path d="M511.4 632.4L510.4 635.2M511 634.1L511 638M512 633.5L514.3 633.5M513.1 633.5L513.1 638M512.2 636L514.1 636M515.4 632.4L517 632.4L517 638L515.4 638L515.4 632.4M517.7 633.5L519.3 633.5L519.3 637.4L517.7 637.4L517.7 633.5M520.4 633L524.3 633M520.8 634.9L523.9 634.9M520.4 636.9L524.3 636.9M521.6 633L521.2 638M523.3 633L523.3 638" stroke="#00ff00" stroke-width="1" shape-rendering="crispEdges"/>
<path d="M446.5 404.3L446.5 445" stroke="#00ff00" stroke-width="1"/>
<path d="M472.5 404.3L472.5 445" stroke="#00ff00" stroke-width="1"/>
<path d="M489.5 404.3L489.5 445" stroke="#00ff00" stroke-width="1"/>
<path d="M506.5 404.3L506.5 445" stroke="#00ff00" stroke-width="1"/>
<path d="M523.5 404.3L523.5 445" stroke="#00ff00" stroke-width="1"/>
<path d="M540.5 404.3L540.5 445" stroke="#00ff00" stroke-width="1"/>
<path d="M557.5 404.3L557.5 445" stroke="#00ff00" stroke-width="1"/>
<path d="M574.5 404.3L574.5 445" stroke="#00ff00" stroke-width="1"/>
<path d="M592.5 404.3L592.5 445" stroke="#00ff00" stroke-width="1"/>
<path d="M446 404.5L592 404.5" stroke="#00ff00" stroke-width="1"/>
<path d="M446 418.5L592 418.5" stroke="#00ff00" stroke-width="1"/>
<path d="M446 424.5L557.6 424.5" stroke="#00ff00" stroke-width="1"/>
<path d="M574.4 424.5L592 424.5" stroke="#00ff00" stroke-width="1"/>
<path d="M446 431.5L557.6 431.5" stroke="#00ff00" stroke-width="1"/>
<path d="M574.4 431.5L592 431.5" stroke="#00ff00" stroke-width="1"/>
<path d="M446 438.5L557.6 438.5" stroke="#00ff00" stroke-width="1"/>
<path d="M574.4 438.5L592 438.5" stroke="#00ff00" stroke-width="1"/>
<path d="M446 445.5L592 445.5" stroke="#00ff00" stroke-width="1"/>
<text x="481.2" y="414" font-size="8" fill="#00ff00" stroke="#00ff00" stroke-width="0.3" text-anchor="middle">f</text>
<text x="498.1" y="414" font-size="8" fill="#00ff00" stroke="#00ff00" stroke-width="0.3" text-anchor="middle">g</text>
<text x="515.2" y="414" font-size="8" fill="#00ff00" stroke="#00ff00" stroke-width="0.3" text-anchor="middle">h</text>
<text x="532.2" y="414" font-size="8" fill="#00ff00" stroke="#00ff00" stroke-width="0.3" text-anchor="middle">l</text>
<text x="549.1" y="414" font-size="8" fill="#00ff00" stroke="#00ff00" stroke-width="0.3" text-anchor="middle">h</text>
<text x="566" y="414" font-size="8" fill="#00ff00" stroke="#00ff00" stroke-width="0.3" text-anchor="middle">b</text>
<text x="583.2" y="414" font-size="8" fill="#00ff00" stroke="#00ff00" stroke-width="0.3" text-anchor="middle">l&#8321;</text>
<path d="M448.4 405.6L452.1 405.6M448.7 407.9L451.8 407.9M448 410.3L452.5 410.3M450.2 405.6L450.2 410.3M454.7 405.4L453.6 407.9M454.3 406.9L454.3 410.4M455.4 406.4L458.1 406.4M456.8 406.4L456.8 410.4M455.6 408.6L457.9 408.6M461.4 405.4L459.2 410.4M461.4 406.9L463.7 410.4M460.1 408.4L462.8 408.4M459.6 406.1L463.2 406.1M464.8 406.9L469.3 406.9M467.1 405.4L467.1 410.4M467.1 407.1L464.8 410.4M467.1 407.1L469.3 410.4" stroke="#00ff00" stroke-width="1.4" shape-rendering="crispEdges"/>
<path d="M449.1 411.8L448 414.3M448.7 413.3L448.7 416.8M449.8 412.8L452.5 412.8M451.1 412.8L451.1 416.8M450 415.1L452.3 415.1M453.6 412.3L458.1 412.3M454.1 414.1L457.7 414.1M453.6 415.8L458.1 415.8M455 412.3L454.5 416.8M457 412.3L457 416.8M460.3 411.8L459.2 414.3M459.9 413.3L459.9 416.8M461 412.8L463.7 412.8M462.3 412.8L462.3 416.8M461.2 415.1L463.5 415.1M464.8 413.3L469.3 413.3M467.1 411.8L467.1 416.8M467.1 413.6L464.8 416.8M467.1 413.6L469.3 416.8" stroke="#00ff00" stroke-width="1.4" shape-rendering="crispEdges"/>
<text x="447.5" y="423.9" font-size="6.6" font-weight="bold" fill="#00ff00" stroke="none" text-anchor="start" textLength="24" lengthAdjust="spacingAndGlyphs">BWY22-X</text>
<text x="474" y="423.9" font-size="6.8" font-weight="bold" fill="#00ff00" stroke="none" text-anchor="start" textLength="14.8" lengthAdjust="spacingAndGlyphs">192</text>
<text x="490.8" y="423.9" font-size="6.8" font-weight="bold" fill="#00ff00" stroke="none" text-anchor="start" textLength="15" lengthAdjust="spacingAndGlyphs">276</text>
<text x="507.8" y="423.9" font-size="6.8" font-weight="bold" fill="#00ff00" stroke="none" text-anchor="start" textLength="15.2" lengthAdjust="spacingAndGlyphs">440</text>
<text x="525" y="423.9" font-size="6.8" font-weight="bold" fill="#00ff00" stroke="none" text-anchor="start" textLength="14.8" lengthAdjust="spacingAndGlyphs">3000</text>
<text x="541.8" y="423.9" font-size="6.8" font-weight="bold" fill="#00ff00" stroke="none" text-anchor="start" textLength="15" lengthAdjust="spacingAndGlyphs">3000</text>
<text x="576" y="423.9" font-size="6.8" font-weight="bold" fill="#00ff00" stroke="none" text-anchor="start" textLength="15.5" lengthAdjust="spacingAndGlyphs">3180</text>
<text x="445" y="430.7" font-size="6.6" font-weight="bold" fill="#00ff00" stroke="none" text-anchor="start" textLength="27" lengthAdjust="spacingAndGlyphs">BWY27-XX-</text>
<text x="474" y="430.7" font-size="6.8" font-weight="bold" fill="#00ff00" stroke="none" text-anchor="start" textLength="14.8" lengthAdjust="spacingAndGlyphs">197</text>
<text x="490.8" y="430.7" font-size="6.8" font-weight="bold" fill="#00ff00" stroke="none" text-anchor="start" textLength="15" lengthAdjust="spacingAndGlyphs">297</text>
<text x="507.8" y="430.7" font-size="6.8" font-weight="bold" fill="#00ff00" stroke="none" text-anchor="start" textLength="15.2" lengthAdjust="spacingAndGlyphs">457</text>
<text x="525" y="430.7" font-size="6.8" font-weight="bold" fill="#00ff00" stroke="none" text-anchor="start" textLength="14.8" lengthAdjust="spacingAndGlyphs">3000</text>
<text x="541.8" y="430.7" font-size="6.8" font-weight="bold" fill="#00ff00" stroke="none" text-anchor="start" textLength="15" lengthAdjust="spacingAndGlyphs">3000</text>
<text x="576" y="430.7" font-size="6.8" font-weight="bold" fill="#00ff00" stroke="none" text-anchor="start" textLength="15.5" lengthAdjust="spacingAndGlyphs">3180</text>
<text x="445" y="437.1" font-size="6.6" font-weight="bold" fill="#00ff00" stroke="none" text-anchor="start" textLength="27" lengthAdjust="spacingAndGlyphs">BWY33-XX-</text>
<text x="474" y="437.1" font-size="6.8" font-weight="bold" fill="#00ff00" stroke="none" text-anchor="start" textLength="14.8" lengthAdjust="spacingAndGlyphs">245</text>
<text x="490.8" y="437.1" font-size="6.8" font-weight="bold" fill="#00ff00" stroke="none" text-anchor="start" textLength="15" lengthAdjust="spacingAndGlyphs">345</text>
<text x="507.8" y="437.1" font-size="6.8" font-weight="bold" fill="#00ff00" stroke="none" text-anchor="start" textLength="15.2" lengthAdjust="spacingAndGlyphs">459</text>
<text x="525" y="437.1" font-size="6.8" font-weight="bold" fill="#00ff00" stroke="none" text-anchor="start" textLength="14.8" lengthAdjust="spacingAndGlyphs">3000</text>
<text x="541.8" y="437.1" font-size="6.8" font-weight="bold" fill="#00ff00" stroke="none" text-anchor="start" textLength="15" lengthAdjust="spacingAndGlyphs">3000</text>
<text x="576" y="437.1" font-size="6.8" font-weight="bold" fill="#00ff00" stroke="none" text-anchor="start" textLength="15.5" lengthAdjust="spacingAndGlyphs">3180</text>
<text x="445" y="444" font-size="6.6" font-weight="bold" fill="#00ff00" stroke="none" text-anchor="start" textLength="27" lengthAdjust="spacingAndGlyphs">BWY39-XX-</text>
<text x="474" y="444" font-size="6.8" font-weight="bold" fill="#00ff00" stroke="none" text-anchor="start" textLength="14.8" lengthAdjust="spacingAndGlyphs">152</text>
<text x="490.8" y="444" font-size="6.8" font-weight="bold" fill="#00ff00" stroke="none" text-anchor="start" textLength="15" lengthAdjust="spacingAndGlyphs">450</text>
<text x="507.8" y="444" font-size="6.8" font-weight="bold" fill="#00ff00" stroke="none" text-anchor="start" textLength="15.2" lengthAdjust="spacingAndGlyphs">510</text>
<text x="525" y="444" font-size="6.8" font-weight="bold" fill="#00ff00" stroke="none" text-anchor="start" textLength="14.8" lengthAdjust="spacingAndGlyphs">3000</text>
<text x="541.8" y="444" font-size="6.8" font-weight="bold" fill="#00ff00" stroke="none" text-anchor="start" textLength="15" lengthAdjust="spacingAndGlyphs">3000</text>
<text x="576" y="444" font-size="6.8" font-weight="bold" fill="#00ff00" stroke="none" text-anchor="start" textLength="15.5" lengthAdjust="spacingAndGlyphs">3180</text>
<path d="M559.9 419.9L563.4 419.9M560.1 422.1L563.2 422.1M559.4 424.5L563.9 424.5M561.6 419.9L561.6 424.5M565.5 419.9L569 419.9M565.7 422.1L568.8 422.1M565 424.5L569.5 424.5M567.2 419.9L567.2 424.5" stroke="#00ff00" stroke-width="1.4" shape-rendering="crispEdges"/>
<text x="561" y="437" font-size="6" fill="#00ff00" stroke="#00ff00" stroke-width="0.3" text-anchor="middle">0</text>
<text x="558.6" y="444" font-size="6" font-weight="bold" fill="#00ff00" stroke="none" text-anchor="start" textLength="11" lengthAdjust="spacingAndGlyphs">1-k</text>
<path d="M618.5 397.4L618.5 448.6" stroke="#00ff00" stroke-width="1"/>
<path d="M648.5 397.4L648.5 448.6" stroke="#00ff00" stroke-width="1"/>
<path d="M666.5 397.4L666.5 448.6" stroke="#00ff00" stroke-width="1"/>
<path d="M682.5 405.3L682.5 448.6" stroke="#00ff00" stroke-width="1"/>
<path d="M700.5 414L700.5 448.6" stroke="#00ff00" stroke-width="1"/>
<path d="M716.5 414L716.5 448.6" stroke="#00ff00" stroke-width="1"/>
<path d="M733.5 397.4L733.5 448.6" stroke="#00ff00" stroke-width="1"/>
<path d="M751.5 397.4L751.5 448.6" stroke="#00ff00" stroke-width="1"/>
<path d="M618.5 397.5L751 397.5" stroke="#00ff00" stroke-width="1"/>
<path d="M618.5 414.5L751 414.5" stroke="#00ff00" stroke-width="1"/>
<path d="M618.5 422.5L751 422.5" stroke="#00ff00" stroke-width="1"/>
<path d="M618.5 431.5L751 431.5" stroke="#00ff00" stroke-width="1"/>
<path d="M618.5 439.5L751 439.5" stroke="#00ff00" stroke-width="1"/>
<path d="M618.5 448.5L751 448.5" stroke="#00ff00" stroke-width="1"/>
<path d="M666 405.5L733.2 405.5" stroke="#00ff00" stroke-width="1"/>
<path d="M652.1 403.9L656.2 403.9M652.4 406.4L655.9 406.4M651.6 409.1L656.7 409.1M654.1 403.9L654.1 409.1M658.5 405L663 405L663 407.5L658.5 407.5L658.5 405M660.8 403.6L660.8 409.2" stroke="#00ff00" stroke-width="1" shape-rendering="crispEdges"/>
<path d="M683 399.2L686.1 399.2M683.2 401.2L685.9 401.2M682.6 403.3L686.5 403.3M684.6 399.2L684.6 403.3" stroke="#00ff00" stroke-width="1" shape-rendering="crispEdges"/>
<path d="M700.8 399L701.6 399.9M700.4 400.8L701.6 400.8L701.6 403.4M702.4 399.4L704.3 399.4M702.5 400.8L704.1 400.8L704.1 403.2L702.5 403.2L702.5 400.8" stroke="#00ff00" stroke-width="1" shape-rendering="crispEdges"/>
<path d="M718.2 399.4L722.1 399.4M718.6 401L721.7 401M718.2 402.5L722.1 402.5M719.4 399.4L719 403.4M721.1 399.4L721.1 403.4" stroke="#00ff00" stroke-width="1" shape-rendering="crispEdges"/>
<path d="M668 408.2L671.3 408.2M668.2 410.3L671.1 410.3M667.6 412.5L671.7 412.5M669.6 408.2L669.6 412.5M673 408L673.8 408.9M672.6 409.8L673.8 409.8L673.8 412.6M674.6 408.5L676.7 408.5M674.9 409.8L676.5 409.8L676.5 412.4L674.9 412.4L674.9 409.8M678 408L678.8 408.9M677.6 409.8L678.8 409.8L678.8 412.6M679.6 408.5L681.7 408.5M679.9 409.8L681.5 409.8L681.5 412.4L679.9 412.4L679.9 409.8" stroke="#00ff00" stroke-width="1" shape-rendering="crispEdges"/>
<path d="M692 408.6L695.9 408.6M692.4 410.2L695.5 410.2M692 411.7L695.9 411.7M693.2 408.6L692.8 412.6M694.9 408.6L694.9 412.6M698.7 408.2L696.7 412.6M698.7 409.5L700.6 412.6M697.5 410.8L699.8 410.8M697.1 408.9L700.2 408.9M701.8 408.4L704.9 408.4M702 410.4L704.7 410.4M701.4 412.5L705.3 412.5M703.4 408.4L703.4 412.5" stroke="#00ff00" stroke-width="1" shape-rendering="crispEdges"/>
<text x="706.4" y="412.8" font-size="6.5" fill="#00ff00" stroke="#00ff00" stroke-width="0.3" text-anchor="start" textLength="19" lengthAdjust="spacingAndGlyphs">L(L2)</text>
<path d="M736.6 404.7L738.6 404.7M737.6 403.6L737.6 409.2M739.4 403.6L741.7 403.6L741.7 406.1L739.4 406.1L739.4 403.6M739.1 407.5L741.7 407.5M740.6 406.1L740.6 409.2M743.2 404.7L745.2 404.7M744.2 403.6L744.2 409.2M746 403.6L748.3 403.6L748.3 406.1L746 406.1L746 403.6M745.8 407.5L748.3 407.5M747.2 406.1L747.2 409.2" stroke="#00ff00" stroke-width="1" shape-rendering="crispEdges"/>
<path d="M621.1 416L625 416M621.3 418.4L624.8 418.4M620.6 421L625.5 421M623.1 416L623.1 421M627.1 417.1L631.6 417.1L631.6 419.5L627.1 419.5L627.1 417.1M629.4 415.7L629.4 421.1M633.4 417.1L637.9 417.1L637.9 419.5L633.4 419.5L633.4 417.1M635.7 415.7L635.7 421.1M639.5 417.3L644.4 417.3M642 415.7L642 421.1M642 417.6L639.5 421.1M642 417.6L644.4 421.1" stroke="#00ff00" stroke-width="1.4" shape-rendering="crispEdges"/>
<text x="649.4" y="421.1" font-size="6.6" font-weight="bold" fill="#00ff00" stroke="none" text-anchor="start" textLength="15.8" lengthAdjust="spacingAndGlyphs">3000</text>
<text x="666.8" y="421.1" font-size="6.6" font-weight="bold" fill="#00ff00" stroke="none" text-anchor="start" textLength="15.2" lengthAdjust="spacingAndGlyphs">3000</text>
<text x="683.6" y="421.1" font-size="6.6" font-weight="bold" fill="#00ff00" stroke="none" text-anchor="start" textLength="15.6" lengthAdjust="spacingAndGlyphs">1500</text>
<text x="700.8" y="421.1" font-size="6.6" font-weight="bold" fill="#00ff00" stroke="none" text-anchor="start" textLength="15.2" lengthAdjust="spacingAndGlyphs">2000</text>
<text x="717.6" y="421.1" font-size="6.6" font-weight="bold" fill="#00ff00" stroke="none" text-anchor="start" textLength="14.8" lengthAdjust="spacingAndGlyphs">2000</text>
<text x="734" y="421.1" font-size="6.6" font-weight="bold" fill="#00ff00" stroke="none" text-anchor="start" textLength="16.2" lengthAdjust="spacingAndGlyphs">3000</text>
<path d="M620.6 425.3L622.6 425.3M621.6 424.2L621.6 429.6M623.3 424.2L625.5 424.2L625.5 426.6L623.3 426.6L623.3 424.2M623.1 428L625.5 428M624.4 426.6L624.4 429.6M627.4 424.5L631.3 424.5M627.6 426.9L631.1 426.9M626.9 429.5L631.8 429.5M629.4 424.5L629.4 429.5M634.4 424.2L633.2 426.9M633.9 425.8L633.9 429.6M635.2 425.3L638.1 425.3M636.6 425.3L636.6 429.6M635.4 427.7L637.9 427.7M639.5 424.2L641.6 424.2L641.6 429.6L639.5 429.6L639.5 424.2M642.4 425.3L644.4 425.3L644.4 429.1L642.4 429.1L642.4 425.3" stroke="#00ff00" stroke-width="1.4" shape-rendering="crispEdges"/>
<text x="649.4" y="429.6" font-size="6.6" font-weight="bold" fill="#00ff00" stroke="none" text-anchor="start" textLength="15.8" lengthAdjust="spacingAndGlyphs">2985</text>
<text x="666.8" y="429.6" font-size="6.6" font-weight="bold" fill="#00ff00" stroke="none" text-anchor="start" textLength="15.2" lengthAdjust="spacingAndGlyphs">2985</text>
<text x="683.6" y="429.6" font-size="6.6" font-weight="bold" fill="#00ff00" stroke="none" text-anchor="start" textLength="15.6" lengthAdjust="spacingAndGlyphs">1485</text>
<text x="700.8" y="429.6" font-size="6.6" font-weight="bold" fill="#00ff00" stroke="none" text-anchor="start" textLength="15.2" lengthAdjust="spacingAndGlyphs">1985</text>
<text x="717.6" y="429.6" font-size="6.6" font-weight="bold" fill="#00ff00" stroke="none" text-anchor="start" textLength="14.8" lengthAdjust="spacingAndGlyphs">2385</text>
<text x="734" y="429.6" font-size="6.6" font-weight="bold" fill="#00ff00" stroke="none" text-anchor="start" textLength="16.2" lengthAdjust="spacingAndGlyphs">2990</text>
<path d="M620.6 432.5L622.7 432.5L622.7 437.9L620.6 437.9L620.6 432.5M623.5 433.6L625.5 433.6L625.5 437.4L623.5 437.4L623.5 433.6M627.1 433.9L631.6 433.9L631.6 436.3L627.1 436.3L627.1 433.9M629.4 432.5L629.4 437.9M633.2 432.8L638.1 432.8L638.1 437.6L633.2 437.6L633.2 432.8M635.7 432.8L635.7 437.6M633.2 435.2L638.1 435.2M639.5 432.5L641.6 432.5L641.6 437.9L639.5 437.9L639.5 432.5M642.4 433.6L644.4 433.6L644.4 437.4L642.4 437.4L642.4 433.6" stroke="#00ff00" stroke-width="1.4" shape-rendering="crispEdges"/>
<text x="649.4" y="437.9" font-size="6.6" font-weight="bold" fill="#00ff00" stroke="none" text-anchor="start" textLength="15.8" lengthAdjust="spacingAndGlyphs">3200</text>
<text x="666.8" y="437.9" font-size="6.6" font-weight="bold" fill="#00ff00" stroke="none" text-anchor="start" textLength="15.2" lengthAdjust="spacingAndGlyphs">3000</text>
<text x="683.6" y="437.9" font-size="6.6" font-weight="bold" fill="#00ff00" stroke="none" text-anchor="start" textLength="15.6" lengthAdjust="spacingAndGlyphs">1500</text>
<text x="700.8" y="437.9" font-size="6.6" font-weight="bold" fill="#00ff00" stroke="none" text-anchor="start" textLength="15.2" lengthAdjust="spacingAndGlyphs">2000</text>
<text x="717.6" y="437.9" font-size="6.6" font-weight="bold" fill="#00ff00" stroke="none" text-anchor="start" textLength="14.8" lengthAdjust="spacingAndGlyphs">2000</text>
<text x="734" y="437.9" font-size="6.6" font-weight="bold" fill="#00ff00" stroke="none" text-anchor="start" textLength="16.2" lengthAdjust="spacingAndGlyphs">3000</text>
<path d="M619.4 442.6L623.7 442.6L623.7 447L619.4 447L619.4 442.6M621.5 442.6L621.5 447M619.4 444.8L623.7 444.8M625 443.4L626.7 443.4M625.9 442.4L625.9 447.2M627.4 442.4L629.3 442.4L629.3 444.6L627.4 444.6L627.4 442.4M627.1 445.8L629.3 445.8M628.4 444.6L628.4 447.2M630.6 442.4L632.4 442.4L632.4 447.2L630.6 447.2L630.6 442.4M633.2 443.4L634.9 443.4L634.9 446.7L633.2 446.7L633.2 443.4M636.6 442.4L637.5 443.4M636.2 444.3L637.5 444.3L637.5 447.2M638.3 442.9L640.5 442.9M638.6 444.3L640.3 444.3L640.3 447L638.6 447L638.6 444.3M643.9 442.4L641.8 447.2M643.9 443.8L646.1 447.2M642.7 445.3L645.2 445.3M642.2 443.1L645.7 443.1" stroke="#00ff00" stroke-width="1.4" shape-rendering="crispEdges"/>
<text x="649.4" y="447.2" font-size="6.6" font-weight="bold" fill="#00ff00" stroke="none" text-anchor="start" textLength="15.8" lengthAdjust="spacingAndGlyphs">3000</text>
<text x="666.8" y="447.2" font-size="6.6" font-weight="bold" fill="#00ff00" stroke="none" text-anchor="start" textLength="15.2" lengthAdjust="spacingAndGlyphs">3000</text>
<text x="683.6" y="447.2" font-size="6.6" font-weight="bold" fill="#00ff00" stroke="none" text-anchor="start" textLength="15.6" lengthAdjust="spacingAndGlyphs">(1500)</text>
<text x="700.8" y="447.2" font-size="6.6" font-weight="bold" fill="#00ff00" stroke="none" text-anchor="start" textLength="15.2" lengthAdjust="spacingAndGlyphs">2000</text>
<text x="717.6" y="447.2" font-size="6.6" font-weight="bold" fill="#00ff00" stroke="none" text-anchor="start" textLength="14.8" lengthAdjust="spacingAndGlyphs">(250)</text>
<text x="734" y="447.2" font-size="6.6" font-weight="bold" fill="#00ff00" stroke="none" text-anchor="start" textLength="16.2" lengthAdjust="spacingAndGlyphs">3000</text>
<path d="M588.5 453.5L588.5 494.2" stroke="#00ff00" stroke-width="1"/>
<path d="M639.5 453.5L639.5 494.2" stroke="#00ff00" stroke-width="1"/>
<path d="M669.5 453.5L669.5 494.2" stroke="#00ff00" stroke-width="1"/>
<path d="M699.5 453.5L699.5 494.2" stroke="#00ff00" stroke-width="1"/>
<path d="M729.5 453.5L729.5 494.2" stroke="#00ff00" stroke-width="1"/>
<path d="M758.5 453.5L758.5 494.2" stroke="#00ff00" stroke-width="1"/>
<path d="M588.3 453.5L758.9 453.5" stroke="#00ff00" stroke-width="1"/>
<path d="M588.3 467.5L758.9 467.5" stroke="#00ff00" stroke-width="1"/>
<path d="M588.3 473.5L758.9 473.5" stroke="#00ff00" stroke-width="1"/>
<path d="M588.3 480.5L758.9 480.5" stroke="#00ff00" stroke-width="1"/>
<path d="M588.3 487.5L758.9 487.5" stroke="#00ff00" stroke-width="1"/>
<path d="M588.3 494.5L758.9 494.5" stroke="#00ff00" stroke-width="1"/>
<path d="M588.3 453.5L639.3 467" stroke="#00ff00" stroke-width="1.1"/>
<text x="645" y="460.6" font-size="8.5" fill="#ffffff" stroke="#ffffff" stroke-width="0.3" text-anchor="end" textLength="13.5" lengthAdjust="spacingAndGlyphs">R/H</text>
<path d="M613.4 455.8L616.7 455.8L616.7 459.2L613.4 459.2L613.4 455.8M615 455.8L615 459.2M613.4 457.5L616.7 457.5M617.6 456.4L618.9 456.4M618.3 455.6L618.3 459.4M619.4 455.6L620.9 455.6L620.9 457.3L619.4 457.3L619.4 455.6M619.2 458.3L620.9 458.3M620.2 457.3L620.2 459.4M622.6 455.6L621.8 457.5M622.3 456.7L622.3 459.4M623.1 456.4L625.1 456.4M624.1 456.4L624.1 459.4M623.3 458.1L624.9 458.1" stroke="#ffffff" stroke-width="1" shape-rendering="crispEdges"/>
<path d="M601.9 462.2L604.4 462.2M602.1 463.8L604.2 463.8M601.6 465.5L604.7 465.5M603.1 462.2L603.1 465.5M605.7 462.9L608.4 462.9L608.4 464.5L605.7 464.5L605.7 462.9M607 462L607 465.6M610.9 462L609.4 465.6M610.9 463.1L612.5 465.6M610 464.2L611.9 464.2M609.7 462.5L612.2 462.5M613.3 462.4L616.4 462.4M613.6 463.6L616.1 463.6M613.3 464.9L616.4 464.9M614.2 462.4L613.9 465.6M615.6 462.4L615.6 465.6" stroke="#ffffff" stroke-width="1" shape-rendering="crispEdges"/>
<text x="619" y="466" font-size="5.5" fill="#ffffff" stroke="#ffffff" stroke-width="0.3" text-anchor="start">M</text>
<text x="654.3" y="462.8" font-size="6.5" fill="#00ff00" stroke="#00ff00" stroke-width="0.3" text-anchor="middle" textLength="8.5" lengthAdjust="spacingAndGlyphs">56</text>
<text x="684.5" y="462.8" font-size="6.5" fill="#00ff00" stroke="#00ff00" stroke-width="0.3" text-anchor="middle" textLength="8.5" lengthAdjust="spacingAndGlyphs">62</text>
<text x="714.6" y="462.8" font-size="6.5" fill="#00ff00" stroke="#00ff00" stroke-width="0.3" text-anchor="middle" textLength="8.5" lengthAdjust="spacingAndGlyphs">78</text>
<text x="744.2" y="462.8" font-size="6.5" fill="#00ff00" stroke="#00ff00" stroke-width="0.3" text-anchor="middle" textLength="8.5" lengthAdjust="spacingAndGlyphs">88</text>
<text x="615.6" y="473" font-size="6.2" fill="#00ff00" stroke="#00ff00" stroke-width="0.3" text-anchor="middle">8</text>
<text x="641.5" y="473" font-size="6.8" font-weight="bold" fill="#00ff00" stroke="none" text-anchor="start" textLength="28.2" lengthAdjust="spacingAndGlyphs">BWY22-XX-</text>
<text x="671.5" y="473" font-size="6.8" font-weight="bold" fill="#00ff00" stroke="none" text-anchor="start" textLength="28.5" lengthAdjust="spacingAndGlyphs">BWY22-XX-</text>
<text x="701.8" y="473" font-size="6.8" font-weight="bold" fill="#00ff00" stroke="none" text-anchor="start" textLength="28.2" lengthAdjust="spacingAndGlyphs">BWY22-XX-</text>
<text x="731.8" y="473" font-size="6.8" font-weight="bold" fill="#00ff00" stroke="none" text-anchor="start" textLength="27.5" lengthAdjust="spacingAndGlyphs">BWY27-XX-</text>
<text x="759.9" y="473" font-size="6.8" font-weight="bold" fill="#00ff00" stroke="none" text-anchor="start" textLength="22" lengthAdjust="spacingAndGlyphs">23-7.5</text>
<text x="615.6" y="479.9" font-size="6.2" fill="#00ff00" stroke="#00ff00" stroke-width="0.3" text-anchor="middle">16</text>
<text x="641.5" y="479.9" font-size="6.8" font-weight="bold" fill="#00ff00" stroke="none" text-anchor="start" textLength="28.2" lengthAdjust="spacingAndGlyphs">BWY27-XX-</text>
<text x="671.5" y="479.9" font-size="6.8" font-weight="bold" fill="#00ff00" stroke="none" text-anchor="start" textLength="28.5" lengthAdjust="spacingAndGlyphs">BWY27-XX-</text>
<text x="701.8" y="479.9" font-size="6.8" font-weight="bold" fill="#00ff00" stroke="none" text-anchor="start" textLength="28.2" lengthAdjust="spacingAndGlyphs">BWY27-XX-</text>
<text x="731.8" y="479.9" font-size="6.8" font-weight="bold" fill="#00ff00" stroke="none" text-anchor="start" textLength="27.5" lengthAdjust="spacingAndGlyphs">BWY33-XX-</text>
<text x="759.9" y="479.9" font-size="6.8" font-weight="bold" fill="#00ff00" stroke="none" text-anchor="start" textLength="18" lengthAdjust="spacingAndGlyphs">23-11</text>
<text x="615.6" y="486.8" font-size="6.2" fill="#00ff00" stroke="#00ff00" stroke-width="0.3" text-anchor="middle">25</text>
<text x="641.5" y="486.8" font-size="6.8" font-weight="bold" fill="#00ff00" stroke="none" text-anchor="start" textLength="28.2" lengthAdjust="spacingAndGlyphs">BWY33-XX-</text>
<text x="671.5" y="486.8" font-size="6.8" font-weight="bold" fill="#00ff00" stroke="none" text-anchor="start" textLength="28.5" lengthAdjust="spacingAndGlyphs">BWY33-XX-</text>
<text x="701.8" y="486.8" font-size="6.8" font-weight="bold" fill="#00ff00" stroke="none" text-anchor="start" textLength="28.2" lengthAdjust="spacingAndGlyphs">BWY33-XX-</text>
<text x="731.8" y="486.8" font-size="6.8" font-weight="bold" fill="#00ff00" stroke="none" text-anchor="start" textLength="27.5" lengthAdjust="spacingAndGlyphs">BWY39-XX-</text>
<text x="759.9" y="486.8" font-size="6.8" font-weight="bold" fill="#00ff00" stroke="none" text-anchor="start" textLength="24" lengthAdjust="spacingAndGlyphs">23-18.5</text>
<text x="615.6" y="493.3" font-size="6.2" fill="#00ff00" stroke="#00ff00" stroke-width="0.3" text-anchor="middle">35</text>
<text x="641.5" y="493.3" font-size="6.8" font-weight="bold" fill="#00ff00" stroke="none" text-anchor="start" textLength="28.2" lengthAdjust="spacingAndGlyphs">BWY39-XX-</text>
<text x="671.5" y="493.3" font-size="6.8" font-weight="bold" fill="#00ff00" stroke="none" text-anchor="start" textLength="28.5" lengthAdjust="spacingAndGlyphs">BWY39-XX-</text>
<text x="701.8" y="493.3" font-size="6.8" font-weight="bold" fill="#00ff00" stroke="none" text-anchor="start" textLength="28.2" lengthAdjust="spacingAndGlyphs">BWY39-XX-</text>
<text x="731.8" y="493.3" font-size="6.8" font-weight="bold" fill="#00ff00" stroke="none" text-anchor="start" textLength="27.5" lengthAdjust="spacingAndGlyphs">BWY39-XX-</text>
<text x="759.9" y="493.3" font-size="6.8" font-weight="bold" fill="#00ff00" stroke="none" text-anchor="start" textLength="20" lengthAdjust="spacingAndGlyphs">23-22</text>
<path d="M623.5 518.4L623.5 635.1" stroke="#00ff00" stroke-width="1"/>
<path d="M636.5 518.4L636.5 635.1" stroke="#00ff00" stroke-width="1"/>
<path d="M669.5 518.4L669.5 635.1" stroke="#00ff00" stroke-width="1"/>
<path d="M714.5 518.4L714.5 635.1" stroke="#00ff00" stroke-width="1"/>
<path d="M726.5 518.4L726.5 635.1" stroke="#00ff00" stroke-width="1"/>
<path d="M743.5 518.4L743.5 635.1" stroke="#00ff00" stroke-width="1"/>
<path d="M754.5 518.4L754.5 635.1" stroke="#00ff00" stroke-width="1"/>
<path d="M764.5 518.4L764.5 635.1" stroke="#00ff00" stroke-width="1"/>
<path d="M776.5 518.4L776.5 635.1" stroke="#00ff00" stroke-width="1"/>
<path d="M623.4 518.5L776.7 518.5" stroke="#00ff00" stroke-width="1"/>
<path d="M623.4 525.5L776.7 525.5" stroke="#00ff00" stroke-width="1"/>
<path d="M623.4 532.5L776.7 532.5" stroke="#00ff00" stroke-width="1"/>
<path d="M623.4 538.5L776.7 538.5" stroke="#00ff00" stroke-width="1"/>
<path d="M623.4 545.5L776.7 545.5" stroke="#00ff00" stroke-width="1"/>
<path d="M623.4 552.5L776.7 552.5" stroke="#00ff00" stroke-width="1"/>
<path d="M623.4 559.5L776.7 559.5" stroke="#00ff00" stroke-width="1"/>
<path d="M623.4 566.5L776.7 566.5" stroke="#00ff00" stroke-width="1"/>
<path d="M623.4 573.5L776.7 573.5" stroke="#00ff00" stroke-width="1"/>
<path d="M623.4 580.5L776.7 580.5" stroke="#00ff00" stroke-width="1"/>
<path d="M623.4 587.5L776.7 587.5" stroke="#00ff00" stroke-width="1"/>
<path d="M623.4 593.5L776.7 593.5" stroke="#00ff00" stroke-width="1"/>
<path d="M623.4 600.5L776.7 600.5" stroke="#00ff00" stroke-width="1"/>
<path d="M623.4 607.5L776.7 607.5" stroke="#00ff00" stroke-width="1"/>
<path d="M623.4 614.5L776.7 614.5" stroke="#00ff00" stroke-width="1"/>
<path d="M623.4 621.5L776.7 621.5" stroke="#00ff00" stroke-width="1"/>
<path d="M623.4 628.5L776.7 628.5" stroke="#00ff00" stroke-width="1"/>
<path d="M623.4 635.5L776.7 635.5" stroke="#00ff00" stroke-width="1"/>
<text x="624.6" y="524.3" font-size="7.2" font-weight="bold" fill="#00ff00" stroke="none" text-anchor="start" textLength="8.6" lengthAdjust="spacingAndGlyphs">16</text>
<text x="634.6" y="524.3" font-size="7.4" font-weight="bold" fill="#00ff00" stroke="none" text-anchor="start" textLength="33" lengthAdjust="spacingAndGlyphs">GB93-76</text>
<path d="M670.8 519.5L671.7 520.4M670.4 521.4L671.7 521.4L671.7 524.3M672.5 519.9L674.7 519.9M672.8 521.4L674.5 521.4L674.5 524L672.8 524L672.8 521.4M675.6 520.4L677.3 520.4M676.5 519.5L676.5 524.3M678 519.5L679.9 519.5L679.9 521.6L678 521.6L678 519.5M677.8 522.8L679.9 522.8M679 521.6L679 524.3M681.9 519.5L680.8 521.9M681.4 520.9L681.4 524.3M682.5 520.4L685.1 520.4M683.8 520.4L683.8 524.3M682.7 522.6L684.9 522.6" stroke="#00ff00" stroke-width="1.4" shape-rendering="crispEdges"/>
<text x="687" y="524.3" font-size="7" font-weight="bold" fill="#00ff00" stroke="none" text-anchor="start" textLength="7.2" lengthAdjust="spacingAndGlyphs">24</text>
<text x="716" y="524.3" font-size="6.2" fill="#00ff00" stroke="#00ff00" stroke-width="0.3" text-anchor="start">4&#215;2n</text>
<text x="744.4" y="524.3" font-size="6" fill="#00ff00" stroke="#00ff00" stroke-width="0.3" text-anchor="start" textLength="11.5" lengthAdjust="spacingAndGlyphs">0.04</text>
<text x="624.6" y="531.1" font-size="7.2" font-weight="bold" fill="#00ff00" stroke="none" text-anchor="start" textLength="8.6" lengthAdjust="spacingAndGlyphs">15</text>
<text x="634.6" y="531.1" font-size="7.4" font-weight="bold" fill="#00ff00" stroke="none" text-anchor="start" textLength="33" lengthAdjust="spacingAndGlyphs">GB52-76</text>
<path d="M670.4 527.3L672.1 527.3M671.3 526.3L671.3 531.1M672.8 526.3L674.7 526.3L674.7 528.5L672.8 528.5L672.8 526.3M672.5 529.7L674.7 529.7M673.8 528.5L673.8 531.1M676 526.6L679.5 526.6M676.2 528.7L679.3 528.7M675.6 531L679.9 531M677.8 526.6L677.8 531M680.8 527.3L682.5 527.3M681.7 526.3L681.7 531.1M683.2 526.3L685.1 526.3L685.1 528.5L683.2 528.5L683.2 526.3M682.9 529.7L685.1 529.7M684.2 528.5L684.2 531.1" stroke="#00ff00" stroke-width="1.4" shape-rendering="crispEdges"/>
<text x="687" y="531.1" font-size="7" font-weight="bold" fill="#00ff00" stroke="none" text-anchor="start" textLength="7.2" lengthAdjust="spacingAndGlyphs">24</text>
<text x="716" y="531.1" font-size="6.2" fill="#00ff00" stroke="#00ff00" stroke-width="0.3" text-anchor="start">4&#215;3n</text>
<text x="744.4" y="531.1" font-size="6" fill="#00ff00" stroke="#00ff00" stroke-width="0.3" text-anchor="start" textLength="11.5" lengthAdjust="spacingAndGlyphs">0.17</text>
<text x="624.6" y="538" font-size="7.2" font-weight="bold" fill="#00ff00" stroke="none" text-anchor="start" textLength="8.6" lengthAdjust="spacingAndGlyphs">14</text>
<text x="634.6" y="538" font-size="7.4" font-weight="bold" fill="#00ff00" stroke="none" text-anchor="start" textLength="33" lengthAdjust="spacingAndGlyphs">GB5782-86</text>
<path d="M670.8 533.4L674.3 533.4M671 535.6L674.1 535.6M670.4 537.9L674.7 537.9M672.5 533.4L672.5 537.9M675.6 534.1L677.3 534.1M676.5 533.2L676.5 538M678 533.2L679.9 533.2L679.9 535.3L678 535.3L678 533.2M677.8 536.5L679.9 536.5M679 535.3L679 538M680.8 534.1L682.5 534.1M681.7 533.2L681.7 538M683.2 533.2L685.1 533.2L685.1 535.3L683.2 535.3L683.2 533.2M682.9 536.5L685.1 536.5M684.2 535.3L684.2 538" stroke="#00ff00" stroke-width="1.4" shape-rendering="crispEdges"/>
<text x="687" y="538" font-size="7" font-weight="bold" fill="#00ff00" stroke="none" text-anchor="start" textLength="10.8" lengthAdjust="spacingAndGlyphs">M24</text>
<text x="716" y="538" font-size="6.2" fill="#00ff00" stroke="#00ff00" stroke-width="0.3" text-anchor="start">4&#215;2n</text>
<text x="744.4" y="538" font-size="6" fill="#00ff00" stroke="#00ff00" stroke-width="0.3" text-anchor="start" textLength="11.5" lengthAdjust="spacingAndGlyphs">0.44</text>
<text x="624.6" y="544.9" font-size="7.2" font-weight="bold" fill="#00ff00" stroke="none" text-anchor="start" textLength="8.6" lengthAdjust="spacingAndGlyphs">13</text>
<text x="634.6" y="544.9" font-size="7.4" font-weight="bold" fill="#00ff00" stroke="none" text-anchor="start" textLength="33" lengthAdjust="spacingAndGlyphs">GB5782-86</text>
<path d="M670.6 541.3L674.5 541.3L674.5 543.4L670.6 543.4L670.6 541.3M672.5 540.1L672.5 544.9M675.6 540.5L679.9 540.5M676 542.2L679.5 542.2M675.6 543.9L679.9 543.9M676.9 540.5L676.5 544.9M678.8 540.5L678.8 544.9M681.2 540.3L684.7 540.3M681.4 542.5L684.5 542.5M680.8 544.8L685.1 544.8M682.9 540.3L682.9 544.8M686.4 540.1L687.3 541M686 542L687.3 542L687.3 544.9M688.1 540.5L690.3 540.5M688.4 542L690.1 542L690.1 544.6L688.4 544.6L688.4 542M691.4 541.3L695.3 541.3L695.3 543.4L691.4 543.4L691.4 541.3M693.3 540.1L693.3 544.9" stroke="#00ff00" stroke-width="1.4" shape-rendering="crispEdges"/>
<text x="697.4" y="544.9" font-size="7" font-weight="bold" fill="#00ff00" stroke="none" text-anchor="start" textLength="21.6" lengthAdjust="spacingAndGlyphs">M12X40</text>
<text x="716" y="544.9" font-size="6.2" fill="#00ff00" stroke="#00ff00" stroke-width="0.3" text-anchor="start">10&#215;n</text>
<text x="744.4" y="544.9" font-size="6" fill="#00ff00" stroke="#00ff00" stroke-width="0.3" text-anchor="start" textLength="11.5" lengthAdjust="spacingAndGlyphs">1.06</text>
<text x="624.6" y="551.7" font-size="7.2" font-weight="bold" fill="#00ff00" stroke="none" text-anchor="start" textLength="8.6" lengthAdjust="spacingAndGlyphs">12</text>
<text x="634.6" y="551.7" font-size="7.4" font-weight="bold" fill="#00ff00" stroke="none" text-anchor="start" textLength="33" lengthAdjust="spacingAndGlyphs">GB97-76</text>
<path d="M670.8 547.2L674.3 547.2M671 549.3L674.1 549.3M670.4 551.6L674.7 551.6M672.5 547.2L672.5 551.6M676 547.2L679.5 547.2M676.2 549.3L679.3 549.3M675.6 551.6L679.9 551.6M677.8 547.2L677.8 551.6M681.2 547.2L684.7 547.2M681.4 549.3L684.5 549.3M680.8 551.6L685.1 551.6M682.9 547.2L682.9 551.6" stroke="#00ff00" stroke-width="1.4" shape-rendering="crispEdges"/>
<text x="687" y="551.7" font-size="7" font-weight="bold" fill="#00ff00" stroke="none" text-anchor="start" textLength="7.2" lengthAdjust="spacingAndGlyphs">16</text>
<text x="716" y="551.7" font-size="6.2" fill="#00ff00" stroke="#00ff00" stroke-width="0.3" text-anchor="start">4</text>
<text x="624.6" y="558.6" font-size="7.2" font-weight="bold" fill="#00ff00" stroke="none" text-anchor="start" textLength="8.6" lengthAdjust="spacingAndGlyphs">11</text>
<text x="634.6" y="558.6" font-size="7.4" font-weight="bold" fill="#00ff00" stroke="none" text-anchor="start" textLength="24" lengthAdjust="spacingAndGlyphs">LS50-1</text>
<path d="M670.4 554.3L674.7 554.3M670.8 555.9L674.3 555.9M670.4 557.6L674.7 557.6M671.7 554.3L671.3 558.6M673.6 554.3L673.6 558.6M676 553.8L676.9 554.7M675.6 555.7L676.9 555.7L676.9 558.6M677.8 554.3L679.9 554.3M678 555.7L679.7 555.7L679.7 558.3L678 558.3L678 555.7" stroke="#00ff00" stroke-width="1.4" shape-rendering="crispEdges"/>
<text x="716" y="558.6" font-size="6.2" fill="#00ff00" stroke="#00ff00" stroke-width="0.3" text-anchor="start">1</text>
<text x="624.6" y="565.4" font-size="7.2" font-weight="bold" fill="#00ff00" stroke="none" text-anchor="start" textLength="8.6" lengthAdjust="spacingAndGlyphs">10</text>
<text x="634.6" y="565.4" font-size="7.4" font-weight="bold" fill="#00ff00" stroke="none" text-anchor="start" textLength="33" lengthAdjust="spacingAndGlyphs">GB27-76</text>
<path d="M670.4 562.1L674.7 562.1M672.5 560.6L672.5 565.4M672.5 562.3L670.4 565.4M672.5 562.3L674.7 565.4M675.6 561.6L677.3 561.6M676.5 560.6L676.5 565.4M678 560.6L679.9 560.6L679.9 562.8L678 562.8L678 560.6M677.8 564L679.9 564M679 562.8L679 565.4M681 561.8L684.9 561.8L684.9 564L681 564L681 561.8M682.9 560.6L682.9 565.4" stroke="#00ff00" stroke-width="1.4" shape-rendering="crispEdges"/>
<text x="687" y="565.4" font-size="7" font-weight="bold" fill="#00ff00" stroke="none" text-anchor="start" textLength="7.2" lengthAdjust="spacingAndGlyphs">16</text>
<text x="716" y="565.4" font-size="6.2" fill="#00ff00" stroke="#00ff00" stroke-width="0.3" text-anchor="start">20n</text>
<text x="627" y="572.3" font-size="7.2" font-weight="bold" fill="#00ff00" stroke="none" text-anchor="start" textLength="4.6" lengthAdjust="spacingAndGlyphs">9</text>
<text x="634.6" y="572.3" font-size="7.4" font-weight="bold" fill="#00ff00" stroke="none" text-anchor="start" textLength="24" lengthAdjust="spacingAndGlyphs">JWB-X</text>
<path d="M672.5 567.5L670.4 572.3M672.5 568.9L674.7 572.3M671.3 570.4L673.8 570.4M670.8 568.2L674.3 568.2M675.6 568.5L677.3 568.5M676.5 567.5L676.5 572.3M678 567.5L679.9 567.5L679.9 569.7L678 569.7L678 567.5M677.8 570.9L679.9 570.9M679 569.7L679 572.3M680.8 568.5L682.5 568.5M681.7 567.5L681.7 572.3M683.2 567.5L685.1 567.5L685.1 569.7L683.2 569.7L683.2 567.5M682.9 570.9L685.1 570.9M684.2 569.7L684.2 572.3M686 568.5L687.7 568.5M686.9 567.5L686.9 572.3M688.4 567.5L690.3 567.5L690.3 569.7L688.4 569.7L688.4 567.5M688.1 570.9L690.3 570.9M689.4 569.7L689.4 572.3" stroke="#00ff00" stroke-width="1.4" shape-rendering="crispEdges"/>
<text x="716" y="572.3" font-size="6.2" fill="#00ff00" stroke="#00ff00" stroke-width="0.3" text-anchor="start">n</text>
<text x="627" y="579.2" font-size="7.2" font-weight="bold" fill="#00ff00" stroke="none" text-anchor="start" textLength="4.6" lengthAdjust="spacingAndGlyphs">8</text>
<text x="634.6" y="579.2" font-size="7.4" font-weight="bold" fill="#00ff00" stroke="none" text-anchor="start" textLength="24" lengthAdjust="spacingAndGlyphs">LS50.8</text>
<path d="M670.4 574.8L674.7 574.8M670.8 576.5L674.3 576.5M670.4 578.2L674.7 578.2M671.7 574.8L671.3 579.2M673.6 574.8L673.6 579.2M675.6 575.8L679.9 575.8M677.8 574.4L677.8 579.2M677.8 576L675.6 579.2M677.8 576L679.9 579.2" stroke="#00ff00" stroke-width="1.4" shape-rendering="crispEdges"/>
<text x="681.8" y="579.2" font-size="7" font-weight="bold" fill="#00ff00" stroke="none" text-anchor="start" textLength="3.6" lengthAdjust="spacingAndGlyphs">p</text>
<path d="M716.4 576L717.6 576M717 575.4L717 578.8M718 575.4L719.3 575.4L719.3 576.9L718 576.9L718 575.4M717.9 577.7L719.3 577.7M718.7 576.9L718.7 578.8" stroke="#00ff00" stroke-width="1" shape-rendering="crispEdges"/>
<path d="M722.1 576.2L724.8 576.2L724.8 577.7L722.1 577.7L722.1 576.2M723.5 575.4L723.5 578.8" stroke="#00ff00" stroke-width="1" shape-rendering="crispEdges"/>
<path d="M730 575.4L731.2 575.4L731.2 578.8L730 578.8L730 575.4M731.7 576L732.9 576L732.9 578.4L731.7 578.4L731.7 576" stroke="#00ff00" stroke-width="1" shape-rendering="crispEdges"/>
<path d="M738 575.4L739.2 575.4L739.2 578.8L738 578.8L738 575.4M739.7 576L740.9 576L740.9 578.4L739.7 578.4L739.7 576" stroke="#00ff00" stroke-width="1" shape-rendering="crispEdges"/>
<text x="744.4" y="579.2" font-size="6" fill="#00ff00" stroke="#00ff00" stroke-width="0.3" text-anchor="start" textLength="11.5" lengthAdjust="spacingAndGlyphs">16.92</text>
<text x="627" y="586" font-size="7.2" font-weight="bold" fill="#00ff00" stroke="none" text-anchor="start" textLength="4.6" lengthAdjust="spacingAndGlyphs">7</text>
<text x="634.6" y="586" font-size="7.4" font-weight="bold" fill="#00ff00" stroke="none" text-anchor="start" textLength="24" lengthAdjust="spacingAndGlyphs">LS50.7</text>
<path d="M670.4 581.5L674.7 581.5L674.7 585.8L670.4 585.8L670.4 581.5M672.5 581.5L672.5 585.8M670.4 583.6L674.7 583.6M675.8 582.4L679.7 582.4L679.7 584.6L675.8 584.6L675.8 582.4M677.8 581.2L677.8 586" stroke="#00ff00" stroke-width="1.4" shape-rendering="crispEdges"/>
<text x="681.8" y="586" font-size="7" font-weight="bold" fill="#00ff00" stroke="none" text-anchor="start" textLength="3.6" lengthAdjust="spacingAndGlyphs">p</text>
<path d="M716.4 583.2L719.3 583.2M717.9 582.2L717.9 585.6M717.9 583.4L716.4 585.6M717.9 583.4L719.3 585.6" stroke="#00ff00" stroke-width="1" shape-rendering="crispEdges"/>
<path d="M722 582.9L723.2 582.9M722.6 582.2L722.6 585.6M723.6 582.2L724.9 582.2L724.9 583.8L723.6 583.8L723.6 582.2M723.5 584.6L724.9 584.6M724.3 583.8L724.3 585.6" stroke="#00ff00" stroke-width="1" shape-rendering="crispEdges"/>
<path d="M730 582.6L732.9 582.6M730.3 583.8L732.6 583.8M730 584.9L732.9 584.9M730.9 582.6L730.6 585.6M732.2 582.6L732.2 585.6" stroke="#00ff00" stroke-width="1" shape-rendering="crispEdges"/>
<path d="M738 582.9L739.2 582.9M738.6 582.2L738.6 585.6M739.6 582.2L740.9 582.2L740.9 583.8L739.6 583.8L739.6 582.2M739.5 584.6L740.9 584.6M740.3 583.8L740.3 585.6" stroke="#00ff00" stroke-width="1" shape-rendering="crispEdges"/>
<text x="744.4" y="586" font-size="6" fill="#00ff00" stroke="#00ff00" stroke-width="0.3" text-anchor="start" textLength="11.5" lengthAdjust="spacingAndGlyphs">23.55</text>
<text x="627" y="592.9" font-size="7.2" font-weight="bold" fill="#00ff00" stroke="none" text-anchor="start" textLength="4.6" lengthAdjust="spacingAndGlyphs">6</text>
<text x="634.6" y="592.9" font-size="7.4" font-weight="bold" fill="#00ff00" stroke="none" text-anchor="start" textLength="24" lengthAdjust="spacingAndGlyphs">LS50.6</text>
<path d="M670.6 589.3L674.5 589.3L674.5 591.4L670.6 591.4L670.6 589.3M672.5 588.1L672.5 592.9M675.6 589.5L679.9 589.5M677.8 588.1L677.8 592.9M677.8 589.8L675.6 592.9M677.8 589.8L679.9 592.9M680.8 588.6L685.1 588.6M681.2 590.2L684.7 590.2M680.8 591.9L685.1 591.9M682.1 588.6L681.7 592.9M684 588.6L684 592.9" stroke="#00ff00" stroke-width="1.4" shape-rendering="crispEdges"/>
<path d="M717.9 589.1L716.4 592.5M717.9 590.1L719.3 592.5M717 591.1L718.7 591.1M716.7 589.6L719 589.6" stroke="#00ff00" stroke-width="1" shape-rendering="crispEdges"/>
<path d="M722.3 589.1L722.9 589.8M722 590.4L722.9 590.4L722.9 592.5M723.5 589.4L724.9 589.4M723.6 590.4L724.8 590.4L724.8 592.3L723.6 592.3L723.6 590.4" stroke="#00ff00" stroke-width="1" shape-rendering="crispEdges"/>
<path d="M730 589.8L731.2 589.8M730.6 589.1L730.6 592.5M731.6 589.1L732.9 589.1L732.9 590.6L731.6 590.6L731.6 589.1M731.5 591.5L732.9 591.5M732.3 590.6L732.3 592.5" stroke="#00ff00" stroke-width="1" shape-rendering="crispEdges"/>
<path d="M738.3 589.1L738.9 589.8M738 590.4L738.9 590.4L738.9 592.5M739.5 589.4L740.9 589.4M739.6 590.4L740.8 590.4L740.8 592.3L739.6 592.3L739.6 590.4" stroke="#00ff00" stroke-width="1" shape-rendering="crispEdges"/>
<text x="627" y="599.8" font-size="7.2" font-weight="bold" fill="#00ff00" stroke="none" text-anchor="start" textLength="4.6" lengthAdjust="spacingAndGlyphs">5</text>
<text x="634.6" y="599.8" font-size="7.4" font-weight="bold" fill="#00ff00" stroke="none" text-anchor="start" textLength="24" lengthAdjust="spacingAndGlyphs">LS50.5</text>
<path d="M670.4 595.9L672.1 595.9M671.3 595L671.3 599.8M672.8 595L674.7 595L674.7 597.1L672.8 597.1L672.8 595M672.5 598.3L674.7 598.3M673.8 597.1L673.8 599.8M675.6 595L677.4 595L677.4 599.8L675.6 599.8L675.6 595M678.2 595.9L679.9 595.9L679.9 599.3L678.2 599.3L678.2 595.9M680.8 595.2L685.1 595.2L685.1 599.5L680.8 599.5L680.8 595.2M682.9 595.2L682.9 599.5M680.8 597.4L685.1 597.4" stroke="#00ff00" stroke-width="1.4" shape-rendering="crispEdges"/>
<path d="M716.4 596.3L719.3 596.3M716.7 597.5L719 597.5M716.4 598.7L719.3 598.7M717.3 596.3L717 599.4M718.6 596.3L718.6 599.4" stroke="#00ff00" stroke-width="1" shape-rendering="crispEdges"/>
<path d="M722 596.6L723.2 596.6M722.6 596L722.6 599.4M723.6 596L724.9 596L724.9 597.5L723.6 597.5L723.6 596M723.5 598.3L724.9 598.3M724.3 597.5L724.3 599.4" stroke="#00ff00" stroke-width="1" shape-rendering="crispEdges"/>
<path d="M730 596.6L731.2 596.6M730.6 596L730.6 599.4M731.6 596L732.9 596L732.9 597.5L731.6 597.5L731.6 596M731.5 598.3L732.9 598.3M732.3 597.5L732.3 599.4" stroke="#00ff00" stroke-width="1" shape-rendering="crispEdges"/>
<path d="M738 596.3L740.9 596.3M738.3 597.5L740.6 597.5M738 598.7L740.9 598.7M738.9 596.3L738.6 599.4M740.2 596.3L740.2 599.4" stroke="#00ff00" stroke-width="1" shape-rendering="crispEdges"/>
<text x="744.4" y="599.8" font-size="6" fill="#00ff00" stroke="#00ff00" stroke-width="0.3" text-anchor="start" textLength="11.5" lengthAdjust="spacingAndGlyphs">132.9</text>
<text x="627" y="606.6" font-size="7.2" font-weight="bold" fill="#00ff00" stroke="none" text-anchor="start" textLength="4.6" lengthAdjust="spacingAndGlyphs">4</text>
<text x="634.6" y="606.6" font-size="7.4" font-weight="bold" fill="#00ff00" stroke="none" text-anchor="start" textLength="24" lengthAdjust="spacingAndGlyphs">LS50.4</text>
<path d="M670.4 602.8L672.1 602.8M671.3 601.8L671.3 606.6M672.8 601.8L674.7 601.8L674.7 604L672.8 604L672.8 601.8M672.5 605.2L674.7 605.2M673.8 604L673.8 606.6M675.6 601.8L677.4 601.8L677.4 606.6L675.6 606.6L675.6 601.8M678.2 602.8L679.9 602.8L679.9 606.1L678.2 606.1L678.2 602.8M680.8 602.8L682.5 602.8M681.7 601.8L681.7 606.6M683.2 601.8L685.1 601.8L685.1 604L683.2 604L683.2 601.8M682.9 605.2L685.1 605.2M684.2 604L684.2 606.6M686 602.1L690.3 602.1L690.3 606.4L686 606.4L686 602.1M688.1 602.1L688.1 606.4M686 604.2L690.3 604.2M691.2 602.8L692.9 602.8M692.1 601.8L692.1 606.6M693.6 601.8L695.5 601.8L695.5 604L693.6 604L693.6 601.8M693.3 605.2L695.5 605.2M694.6 604L694.6 606.6M696.4 601.8L698.2 601.8L698.2 606.6L696.4 606.6L696.4 601.8M699 602.8L700.7 602.8L700.7 606.1L699 606.1L699 602.8M701.6 602.3L705.9 602.3M702 604L705.5 604M701.6 605.7L705.9 605.7M702.9 602.3L702.5 606.6M704.8 602.3L704.8 606.6" stroke="#00ff00" stroke-width="1.4" shape-rendering="crispEdges"/>
<path d="M716.7 603L719 603M716.8 604.5L718.9 604.5M716.4 606.1L719.3 606.1M717.9 603L717.9 606.1" stroke="#00ff00" stroke-width="1" shape-rendering="crispEdges"/>
<path d="M722.7 602.8L722 604.5M722.4 603.8L722.4 606.2M723.2 603.5L724.9 603.5M724 603.5L724 606.2M723.3 605L724.8 605" stroke="#00ff00" stroke-width="1" shape-rendering="crispEdges"/>
<path d="M730 603.8L732.9 603.8M731.5 602.8L731.5 606.2M731.5 604L730 606.2M731.5 604L732.9 606.2" stroke="#00ff00" stroke-width="1" shape-rendering="crispEdges"/>
<path d="M738.7 602.8L738 604.5M738.4 603.8L738.4 606.2M739.2 603.5L740.9 603.5M740 603.5L740 606.2M739.3 605L740.8 605" stroke="#00ff00" stroke-width="1" shape-rendering="crispEdges"/>
<text x="627" y="613.5" font-size="7.2" font-weight="bold" fill="#00ff00" stroke="none" text-anchor="start" textLength="4.6" lengthAdjust="spacingAndGlyphs">3</text>
<text x="634.6" y="613.5" font-size="7.4" font-weight="bold" fill="#00ff00" stroke="none" text-anchor="start" textLength="24" lengthAdjust="spacingAndGlyphs">LS50.3</text>
<path d="M670.4 609.2L674.7 609.2M670.8 610.8L674.3 610.8M670.4 612.5L674.7 612.5M671.7 609.2L671.3 613.5M673.6 609.2L673.6 613.5M677.8 608.7L675.6 613.5M677.8 610.1L679.9 613.5M676.5 611.6L679 611.6M676 609.4L679.5 609.4M680.8 610.1L685.1 610.1M682.9 608.7L682.9 613.5M682.9 610.4L680.8 613.5M682.9 610.4L685.1 613.5M686 608.7L687.8 608.7L687.8 613.5L686 613.5L686 608.7M688.6 609.6L690.3 609.6L690.3 613L688.6 613L688.6 609.6" stroke="#00ff00" stroke-width="1.4" shape-rendering="crispEdges"/>
<text x="692.2" y="613.5" font-size="7" font-weight="bold" fill="#00ff00" stroke="none" text-anchor="start" textLength="21.6" lengthAdjust="spacingAndGlyphs">L=3000</text>
<text x="716" y="613.5" font-size="6.2" fill="#00ff00" stroke="#00ff00" stroke-width="0.3" text-anchor="start">1</text>
<path d="M717.1 609.7L716.4 611.4M716.8 610.7L716.8 613.1M717.6 610.4L719.3 610.4M718.4 610.4L718.4 613.1M717.7 611.9L719.2 611.9" stroke="#00ff00" stroke-width="1" shape-rendering="crispEdges"/>
<path d="M722 610.7L724.9 610.7M723.5 609.7L723.5 613.1M723.5 610.9L722 613.1M723.5 610.9L724.9 613.1" stroke="#00ff00" stroke-width="1" shape-rendering="crispEdges"/>
<path d="M730 609.7L731.2 609.7L731.2 613.1L730 613.1L730 609.7M731.7 610.4L732.9 610.4L732.9 612.7L731.7 612.7L731.7 610.4" stroke="#00ff00" stroke-width="1" shape-rendering="crispEdges"/>
<path d="M738 609.8L740.9 609.8L740.9 612.9L738 612.9L738 609.8M739.5 609.8L739.5 612.9M738 611.4L740.9 611.4" stroke="#00ff00" stroke-width="1" shape-rendering="crispEdges"/>
<text x="744.4" y="613.5" font-size="6" fill="#00ff00" stroke="#00ff00" stroke-width="0.3" text-anchor="start" textLength="11.5" lengthAdjust="spacingAndGlyphs">175.4</text>
<text x="627" y="620.3" font-size="7.2" font-weight="bold" fill="#00ff00" stroke="none" text-anchor="start" textLength="4.6" lengthAdjust="spacingAndGlyphs">2</text>
<text x="634.6" y="620.3" font-size="7.4" font-weight="bold" fill="#00ff00" stroke="none" text-anchor="start" textLength="24" lengthAdjust="spacingAndGlyphs">LS50.2</text>
<path d="M670.4 617L674.7 617M672.5 615.5L672.5 620.3M672.5 617.2L670.4 620.3M672.5 617.2L674.7 620.3M676 615.8L679.5 615.8M676.2 617.9L679.3 617.9M675.6 620.2L679.9 620.2M677.8 615.8L677.8 620.2M682.9 615.5L680.8 620.3M682.9 617L685.1 620.3M681.7 618.4L684.2 618.4M681.2 616.3L684.7 616.3" stroke="#00ff00" stroke-width="1.4" shape-rendering="crispEdges"/>
<text x="687" y="620.3" font-size="7" font-weight="bold" fill="#00ff00" stroke="none" text-anchor="start" textLength="14.4" lengthAdjust="spacingAndGlyphs">3000</text>
<text x="716" y="620.3" font-size="6.2" fill="#00ff00" stroke="#00ff00" stroke-width="0.3" text-anchor="start">1</text>
<path d="M716.7 616.7L719 616.7M716.8 618.2L718.9 618.2M716.4 619.9L719.3 619.9M717.9 616.7L717.9 619.9" stroke="#00ff00" stroke-width="1" shape-rendering="crispEdges"/>
<path d="M722 616.7L724.9 616.7L724.9 619.8L722 619.8L722 616.7M723.5 616.7L723.5 619.8M722 618.2L724.9 618.2" stroke="#00ff00" stroke-width="1" shape-rendering="crispEdges"/>
<path d="M730.3 616.7L732.6 616.7M730.4 618.2L732.5 618.2M730 619.9L732.9 619.9M731.5 616.7L731.5 619.9" stroke="#00ff00" stroke-width="1" shape-rendering="crispEdges"/>
<path d="M738 616.9L740.9 616.9M738.3 618.1L740.6 618.1M738 619.3L740.9 619.3M738.9 616.9L738.6 619.9M740.2 616.9L740.2 619.9" stroke="#00ff00" stroke-width="1" shape-rendering="crispEdges"/>
<text x="744.4" y="620.3" font-size="6" fill="#00ff00" stroke="#00ff00" stroke-width="0.3" text-anchor="start" textLength="11.5" lengthAdjust="spacingAndGlyphs">176.0</text>
<text x="627" y="627.2" font-size="7.2" font-weight="bold" fill="#00ff00" stroke="none" text-anchor="start" textLength="4.6" lengthAdjust="spacingAndGlyphs">1</text>
<text x="634.6" y="627.2" font-size="7.4" font-weight="bold" fill="#00ff00" stroke="none" text-anchor="start" textLength="24" lengthAdjust="spacingAndGlyphs">LS50.1</text>
<path d="M670.4 622.4L672.2 622.4L672.2 627.2L670.4 627.2L670.4 622.4M673 623.4L674.7 623.4L674.7 626.7L673 626.7L673 623.4M675.6 623.8L679.9 623.8M677.8 622.4L677.8 627.2M677.8 624.1L675.6 627.2M677.8 624.1L679.9 627.2M681.9 622.4L680.8 624.8M681.4 623.8L681.4 627.2M682.5 623.4L685.1 623.4M683.8 623.4L683.8 627.2M682.7 625.5L684.9 625.5" stroke="#00ff00" stroke-width="1.4" shape-rendering="crispEdges"/>
<text x="716" y="627.2" font-size="6.2" fill="#00ff00" stroke="#00ff00" stroke-width="0.3" text-anchor="start">1</text>
<path d="M716.4 623.7L719.3 623.7M716.7 624.9L719 624.9M716.4 626.1L719.3 626.1M717.3 623.7L717 626.8M718.6 623.7L718.6 626.8" stroke="#00ff00" stroke-width="1" shape-rendering="crispEdges"/>
<path d="M722.3 623.6L724.6 623.6M722.4 625.1L724.5 625.1M722 626.7L724.9 626.7M723.5 623.6L723.5 626.7" stroke="#00ff00" stroke-width="1" shape-rendering="crispEdges"/>
<path d="M730 623.4L731.2 623.4L731.2 626.8L730 626.8L730 623.4M731.7 624.1L732.9 624.1L732.9 626.5L731.7 626.5L731.7 624.1" stroke="#00ff00" stroke-width="1" shape-rendering="crispEdges"/>
<path d="M738.3 623.6L740.6 623.6M738.4 625.1L740.5 625.1M738 626.7L740.9 626.7M739.5 623.6L739.5 626.7" stroke="#00ff00" stroke-width="1" shape-rendering="crispEdges"/>
<text x="744.4" y="627.2" font-size="6" fill="#00ff00" stroke="#00ff00" stroke-width="0.3" text-anchor="start" textLength="11.5" lengthAdjust="spacingAndGlyphs">190</text>
<path d="M625.6 629.7L624.6 631.9M625.2 631L625.2 634.1M626.2 630.5L628.5 630.5M627.3 630.5L627.3 634.1M626.4 632.5L628.3 632.5M629.6 630.5L631.2 630.5M630.4 629.7L630.4 634.1M631.7 629.7L633.5 629.7L633.5 631.6L631.7 631.6L631.7 629.7M631.6 632.7L633.5 632.7M632.6 631.6L632.6 634.1" stroke="#00ff00" stroke-width="1" shape-rendering="crispEdges"/>
<path d="M659.9 630.1L659 632.1M659.5 631.3L659.5 634.1M660.4 630.9L662.5 630.9M661.5 630.9L661.5 634.1M660.6 632.7L662.3 632.7" stroke="#00ff00" stroke-width="1" shape-rendering="crispEdges"/>
<path d="M671.8 630.1L670 634.1M671.8 631.3L673.5 634.1M670.7 632.5L672.8 632.5M670.4 630.7L673.1 630.7" stroke="#00ff00" stroke-width="1" shape-rendering="crispEdges"/>
<path d="M706.9 630.1L706 632.1M706.5 631.3L706.5 634.1M707.4 630.9L709.5 630.9M708.5 630.9L708.5 634.1M707.6 632.7L709.3 632.7" stroke="#00ff00" stroke-width="1" shape-rendering="crispEdges"/>
<path d="M715.6 629.9L717.2 629.9L717.2 634.1L715.6 634.1L715.6 629.9M717.8 630.7L719.3 630.7L719.3 633.6L717.8 633.6L717.8 630.7M722.2 629.9L720.4 634.1M722.2 631.1L724.1 634.1M721.1 632.4L723.4 632.4M720.8 630.5L723.7 630.5" stroke="#00ff00" stroke-width="1" shape-rendering="crispEdges"/>
<path d="M729.8 630.1L728 634.1M729.8 631.3L731.5 634.1M728.7 632.5L730.8 632.5M728.4 630.7L731.1 630.7" stroke="#00ff00" stroke-width="1" shape-rendering="crispEdges"/>
<path d="M736 631.3L739.5 631.3M737.8 630.1L737.8 634.1M737.8 631.5L736 634.1M737.8 631.5L739.5 634.1" stroke="#00ff00" stroke-width="1" shape-rendering="crispEdges"/>
<path d="M746.9 629.9L745 634.1M746.9 631.1L748.7 634.1M745.7 632.4L748 632.4M745.4 630.5L748.3 630.5M750 630.9L753.3 630.9L753.3 632.8L750 632.8L750 630.9M751.6 629.9L751.6 634.1M756.5 629.9L754.6 634.1M756.5 631.1L758.3 634.1M755.3 632.4L757.6 632.4M755 630.5L757.9 630.5M759.4 630.7L760.9 630.7M760.1 629.9L760.1 634.1M761.4 629.9L763.1 629.9L763.1 631.8L761.4 631.8L761.4 629.9M761.2 632.8L763.1 632.8M762.3 631.8L762.3 634.1M764.2 630.3L767.9 630.3M764.6 631.8L767.5 631.8M764.2 633.2L767.9 633.2M765.3 630.3L764.9 634.1M767 630.3L767 634.1M769 630.3L772.7 630.3M769.4 631.8L772.3 631.8M769 633.2L772.7 633.2M770.1 630.3L769.7 634.1M771.8 630.3L771.8 634.1" stroke="#00ff00" stroke-width="1" shape-rendering="crispEdges"/>
<rect x="745.7" y="600.5" width="7.1" height="6.2" style="fill:#fff" stroke="none"/>
<text x="749.4" y="606" font-size="5.5" fill="#000" stroke="#000" stroke-width="0.3" text-anchor="middle">5</text>
<path d="M765 570.5L771 570.5" stroke="#00ff00" stroke-width="1"/>
<path d="M770 570L777.8 570" stroke="#00ff00" stroke-width="2"/>
<path d="M623.5 634.5L623.5 672.2" stroke="#00a6a8" stroke-width="1"/>
<path d="M623.4 638.5L674.8 638.5" stroke="#00ff00" stroke-width="1"/>
<path d="M623.4 642.5L674.8 642.5" stroke="#00ff00" stroke-width="1"/>
<path d="M623.4 646.5L674.8 646.5" stroke="#00ff00" stroke-width="1"/>
<path d="M623.4 651.5L674.8 651.5" stroke="#00ff00" stroke-width="1"/>
<path d="M623.4 655.5L674.8 655.5" stroke="#00ff00" stroke-width="1"/>
<path d="M623.4 659.5L674.8 659.5" stroke="#00ff00" stroke-width="1"/>
<path d="M623.4 664.5L674.8 664.5" stroke="#00ff00" stroke-width="1"/>
<path d="M623.4 667.5L674.8 667.5" stroke="#00ff00" stroke-width="1"/>
<path d="M630.5 634.5L630.5 672.2" stroke="#00ff00" stroke-width="1"/>
<path d="M637.5 634.5L637.5 672.2" stroke="#00ff00" stroke-width="1"/>
<path d="M652.5 634.5L652.5 672.2" stroke="#00ff00" stroke-width="1"/>
<path d="M665.5 634.5L665.5 672.2" stroke="#00ff00" stroke-width="1"/>
<path d="M674.5 634.5L674.5 672.2" stroke="#00ff00" stroke-width="1"/>
<path d="M725.5 634.5L725.5 672.2" stroke="#00ff00" stroke-width="1"/>
<path d="M674.8 657.5L725.5 657.5" stroke="#00ff00" stroke-width="1"/>
<text x="704.8" y="645.6" font-size="10.4" fill="#00ff00" stroke="#00ff00" stroke-width="0.3" text-anchor="middle" textLength="30.4" lengthAdjust="spacingAndGlyphs">LS500</text>
<path d="M681.6 650.5L685.1 650.5L685.1 652.5L681.6 652.5L681.6 650.5M683.4 649.4L683.4 653.8" stroke="#00ff00" stroke-width="1.4" shape-rendering="crispEdges"/>
<path d="M687.3 649.4L686.3 651.6M686.9 650.7L686.9 653.8M687.9 650.3L690.2 650.3M689 650.3L689 653.8M688.1 652.3L690 652.3" stroke="#00ff00" stroke-width="1.4" shape-rendering="crispEdges"/>
<path d="M693.1 649.4L691.2 653.8M693.1 650.7L695.1 653.8M692 652L694.3 652M691.6 650.1L694.7 650.1" stroke="#00ff00" stroke-width="1.4" shape-rendering="crispEdges"/>
<path d="M696.1 650.3L697.7 650.3M696.9 649.4L696.9 653.8M698.2 649.4L700 649.4L700 651.4L698.2 651.4L698.2 649.4M698.1 652.5L700 652.5M699.1 651.4L699.1 653.8" stroke="#00ff00" stroke-width="1.4" shape-rendering="crispEdges"/>
<path d="M701.4 649.4L702.2 650.3M701 651.2L702.2 651.2L702.2 653.8M703 649.8L704.9 649.8M703.1 651.2L704.7 651.2L704.7 653.6L703.1 653.6L703.1 651.2" stroke="#00ff00" stroke-width="1.4" shape-rendering="crispEdges"/>
<path d="M705.9 649.6L709.8 649.6L709.8 653.6L705.9 653.6L705.9 649.6M707.9 649.6L707.9 653.6M705.9 651.6L709.8 651.6" stroke="#00ff00" stroke-width="1.4" shape-rendering="crispEdges"/>
<path d="M710.8 650.3L712.4 650.3M711.6 649.4L711.6 653.8M712.9 649.4L714.7 649.4L714.7 651.4L712.9 651.4L712.9 649.4M712.8 652.5L714.7 652.5M713.8 651.4L713.8 653.8" stroke="#00ff00" stroke-width="1.4" shape-rendering="crispEdges"/>
<path d="M715.7 650.7L719.6 650.7M717.6 649.4L717.6 653.8M717.6 650.9L715.7 653.8M717.6 650.9L719.6 653.8" stroke="#00ff00" stroke-width="1.4" shape-rendering="crispEdges"/>
<path d="M690.6 664.8L694.7 664.8M692.6 663.4L692.6 668M692.6 665L690.6 668M692.6 665L694.7 668" stroke="#00ff00" stroke-width="1" shape-rendering="crispEdges"/>
<path d="M708 663.4L709.7 663.4L709.7 668L708 668L708 663.4M710.5 664.3L712.1 664.3L712.1 667.5L710.5 667.5L710.5 664.3" stroke="#00ff00" stroke-width="1" shape-rendering="crispEdges"/>
<text x="759.8" y="644.2" font-size="9.2" fill="#00ff00" stroke="#00ff00" stroke-width="0.3" text-anchor="middle" textLength="29" lengthAdjust="spacingAndGlyphs">LS50.0</text>
<path d="M725.5 645.5L776.7 645.5" stroke="#00ff00" stroke-width="1"/>
<path d="M725.5 651.5L776.7 651.5" stroke="#00ff00" stroke-width="1"/>
<path d="M725.5 657.5L776.7 657.5" stroke="#00ff00" stroke-width="1"/>
<path d="M725.5 662.5L776.7 662.5" stroke="#00ff00" stroke-width="1"/>
<path d="M733.5 651.9L733.5 657.6" stroke="#00ff00" stroke-width="1"/>
<path d="M739.5 651.9L739.5 657.6" stroke="#00ff00" stroke-width="1"/>
<path d="M747.5 651.9L747.5 657.6" stroke="#00ff00" stroke-width="1"/>
<path d="M756.5 651.9L756.5 657.6" stroke="#00ff00" stroke-width="1"/>
<path d="M766.5 651.9L766.5 657.6" stroke="#00ff00" stroke-width="1"/>
<path d="M727 648.9L730.1 648.9M728.5 647.8L728.5 651.4M728.5 649.1L727 651.4M728.5 649.1L730.1 651.4" stroke="#00ff00" stroke-width="1" shape-rendering="crispEdges"/>
<path d="M732.4 648.9L735.5 648.9M733.9 647.8L733.9 651.4M733.9 649.1L732.4 651.4M733.9 649.1L735.5 651.4" stroke="#00ff00" stroke-width="1" shape-rendering="crispEdges"/>
<path d="M737.8 648L740.9 648L740.9 651.2L737.8 651.2L737.8 648M739.3 648L739.3 651.2M737.8 649.6L740.9 649.6" stroke="#00ff00" stroke-width="1" shape-rendering="crispEdges"/>
<path d="M743.2 648L746.3 648L746.3 651.2L743.2 651.2L743.2 648M744.8 648L744.8 651.2M743.2 649.6L746.3 649.6" stroke="#00ff00" stroke-width="1" shape-rendering="crispEdges"/>
<path d="M748.8 648.7L751.5 648.7L751.5 650.3L748.8 650.3L748.8 648.7M750.1 647.8L750.1 651.4" stroke="#00ff00" stroke-width="1" shape-rendering="crispEdges"/>
<path d="M754.3 648L756.8 648M754.5 649.6L756.6 649.6M754 651.3L757.1 651.3M755.5 648L755.5 651.3" stroke="#00ff00" stroke-width="1" shape-rendering="crispEdges"/>
<path d="M759.4 648L762.5 648L762.5 651.2L759.4 651.2L759.4 648M760.9 648L760.9 651.2M759.4 649.6L762.5 649.6" stroke="#00ff00" stroke-width="1" shape-rendering="crispEdges"/>
<path d="M765.1 648L767.6 648M765.3 649.6L767.4 649.6M764.8 651.3L767.9 651.3M766.3 648L766.3 651.3" stroke="#00ff00" stroke-width="1" shape-rendering="crispEdges"/>
<path d="M771 647.8L770.2 649.6M770.7 648.9L770.7 651.4M771.4 648.5L773.3 648.5M772.4 648.5L772.4 651.4M771.6 650.1L773.1 650.1" stroke="#00ff00" stroke-width="1" shape-rendering="crispEdges"/>
<path d="M726.6 658.8L729.5 658.8L729.5 661.8L726.6 661.8L726.6 658.8M728.1 658.8L728.1 661.8M726.6 660.3L729.5 660.3M731.1 658.6L730.4 660.3M730.8 659.6L730.8 662M731.6 659.3L733.3 659.3M732.4 659.3L732.4 662M731.7 660.8L733.2 660.8" stroke="#00ff00" stroke-width="1" shape-rendering="crispEdges"/>
<path d="M752.3 658.4L755 658.4M752.5 660.1L754.8 660.1M752 661.9L755.3 661.9M753.6 658.4L753.6 661.9" stroke="#00ff00" stroke-width="1.4" shape-rendering="crispEdges"/>
<path d="M760 659.3L761.2 659.3M760.6 658.6L760.6 662M761.6 658.6L762.9 658.6L762.9 660.1L761.6 660.1L761.6 658.6M761.5 661L762.9 661M762.3 660.1L762.3 662" stroke="#00ff00" stroke-width="1" shape-rendering="crispEdges"/>
<path d="M777 659.3L778.2 659.3M777.6 658.6L777.6 662M778.6 658.6L779.9 658.6L779.9 660.1L778.6 660.1L778.6 658.6M778.5 661L779.9 661M779.3 660.1L779.3 662" stroke="#00ff00" stroke-width="1" shape-rendering="crispEdges"/>
<path d="M624.4 651.4L625 652.1M624.1 652.8L625 652.8L625 655M625.6 651.8L627.2 651.8M625.8 652.8L627 652.8L627 654.8L625.8 654.8L625.8 652.8M628.1 651.8L631.2 651.8M628.4 653L630.8 653M628.1 654.3L631.2 654.3M629 651.8L628.7 655M630.4 651.8L630.4 655" stroke="#00ff00" stroke-width="1.4" shape-rendering="crispEdges"/>
<path d="M652.4 651.6L650.9 655M652.4 652.6L653.8 655M651.5 653.6L653.2 653.6M651.2 652.1L653.5 652.1M654.6 652.6L657.5 652.6M656.1 651.6L656.1 655M656.1 652.8L654.6 655M656.1 652.8L657.5 655M658.3 651.8L661.2 651.8L661.2 654.8L658.3 654.8L658.3 651.8M659.8 651.8L659.8 654.8M658.3 653.3L661.2 653.3" stroke="#00ff00" stroke-width="1" shape-rendering="crispEdges"/>
<path d="M624.2 656.5L627 656.5L627 658.1L624.2 658.1L624.2 656.5M625.6 655.6L625.6 659.2M628.4 655.8L630.8 655.8M628.5 657.4L630.7 657.4M628.1 659.1L631.2 659.1M629.6 655.8L629.6 659.1" stroke="#00ff00" stroke-width="1.4" shape-rendering="crispEdges"/>
<path d="M651.6 655.8L650.9 657.5M651.3 656.8L651.3 659.2M652.1 656.5L653.8 656.5M652.9 656.5L652.9 659.2M652.2 658L653.7 658M654.6 656.8L657.5 656.8M656.1 655.8L656.1 659.2M656.1 657L654.6 659.2M656.1 657L657.5 659.2M658.3 656L661.2 656L661.2 659L658.3 659L658.3 656M659.8 656L659.8 659M658.3 657.5L661.2 657.5" stroke="#00ff00" stroke-width="1" shape-rendering="crispEdges"/>
<path d="M624.2 660.7L627 660.7L627 662.3L624.2 662.3L624.2 660.7M625.6 659.8L625.6 663.4M628.1 660.9L631.2 660.9M629.6 659.8L629.6 663.4M629.6 661.1L628.1 663.4M629.6 661.1L631.2 663.4" stroke="#00ff00" stroke-width="1.4" shape-rendering="crispEdges"/>
<path d="M650.9 660.2L653.8 660.2L653.8 663.2L650.9 663.2L650.9 660.2M652.4 660.2L652.4 663.2M650.9 661.7L653.8 661.7M654.6 661L657.5 661M656.1 660L656.1 663.4M656.1 661.2L654.6 663.4M656.1 661.2L657.5 663.4M658.6 660L659.2 660.7M658.3 661.4L659.2 661.4L659.2 663.4M659.8 660.3L661.2 660.3M659.9 661.4L661.1 661.4L661.1 663.2L659.9 663.2L659.9 661.4" stroke="#00ff00" stroke-width="1" shape-rendering="crispEdges"/>
<path d="M624.1 664L625.4 664L625.4 667.6L624.1 667.6L624.1 664M625.9 664.7L627.2 664.7L627.2 667.3L625.9 667.3L625.9 664.7M628.1 665.1L631.2 665.1M629.6 664L629.6 667.6M629.6 665.3L628.1 667.6M629.6 665.3L631.2 667.6" stroke="#00ff00" stroke-width="1.4" shape-rendering="crispEdges"/>
<path d="M650.9 664.4L653.8 664.4L653.8 667.4L650.9 667.4L650.9 664.4M652.4 664.4L652.4 667.4M650.9 665.9L653.8 665.9M654.6 665.2L657.5 665.2M656.1 664.2L656.1 667.6M656.1 665.4L654.6 667.6M656.1 665.4L657.5 667.6M658.3 664.6L661.2 664.6M658.6 665.7L660.9 665.7M658.3 666.9L661.2 666.9M659.2 664.6L658.9 667.6M660.5 664.6L660.5 667.6" stroke="#00ff00" stroke-width="1" shape-rendering="crispEdges"/>
<path d="M624.2 669L627 669L627 670.6L624.2 670.6L624.2 669M625.6 668.1L625.6 671.7M629.6 668.1L628.1 671.7M629.6 669.1L631.2 671.7M628.7 670.2L630.5 670.2M628.4 668.6L630.8 668.6" stroke="#00ff00" stroke-width="1.4" shape-rendering="crispEdges"/>
<path d="M650.9 668.9L652.1 668.9M651.5 668.3L651.5 671.7M652.5 668.3L653.8 668.3L653.8 669.8L652.5 669.8L652.5 668.3M652.4 670.6L653.8 670.6M653.2 669.8L653.2 671.7M655.3 668.3L654.6 670M655 669.3L655 671.7M655.8 668.9L657.5 668.9M656.6 668.9L656.6 671.7M655.9 670.5L657.4 670.5M658.3 668.4L661.2 668.4L661.2 671.5L658.3 671.5L658.3 668.4M659.8 668.4L659.8 671.5M658.3 670L661.2 670" stroke="#00ff00" stroke-width="1" shape-rendering="crispEdges"/>
</svg>
<div id="panel"><div id="pi">
<svg width="0" height="0" style="position:absolute"><defs><linearGradient id="gb" x1="0" y1="0" x2="1" y2="1"><stop offset="0" stop-color="#123f6e"/><stop offset=".55" stop-color="#2f6298"/><stop offset="1" stop-color="#6f9cc8"/></linearGradient><linearGradient id="gy" x1="0" y1="0" x2="0" y2="1"><stop offset="0" stop-color="#fbdc3a"/><stop offset="1" stop-color="#e8b60c"/></linearGradient></defs></svg>
<div class="hl"></div><div class="sel"></div>
<svg class="ic" style="left:839px;top:30.7px" width="13" height="14" viewBox="0 0 13 14"><path d="M1 0H8.1L12 4V10.6L4 6.3H1Z" fill="url(#gb)"/><path d="M4.4 3.6H9.4L10.6 8.4L5 6Z" fill="#7fa3c6" opacity=".55"/><path d="M8.1 0V4H12Z" fill="#c3d3e2"/><path d="M0 6.3H4L12 10.5V13.2H0Z" fill="url(#gy)"/><path d="M0 12.3H12V13.3H0Z" fill="#cf9a06"/><path d="M1 6.8V12" stroke="#fff0a0" stroke-width=".7" opacity=".8"/><path d="M3.2 0V6.2M1.2 2.9H5.1" stroke="#fff" stroke-width="1.3"/><path d="M2 1.6L4.4 4.2M4.4 1.6L2 4.2" stroke="#fff" stroke-width=".7"/><circle cx="3.3" cy="2.8" r=".55" fill="#2a5a8c"/></svg>
<span class="t" style="left:853.2px;top:30.7px">GB27-88</span>
<svg class="ic" style="left:839px;top:48px" width="13" height="14" viewBox="0 0 13 14"><path d="M1 0H8.1L12 4V10.6L4 6.3H1Z" fill="url(#gb)"/><path d="M4.4 3.6H9.4L10.6 8.4L5 6Z" fill="#7fa3c6" opacity=".55"/><path d="M8.1 0V4H12Z" fill="#c3d3e2"/><path d="M0 6.3H4L12 10.5V13.2H0Z" fill="url(#gy)"/><path d="M0 12.3H12V13.3H0Z" fill="#cf9a06"/><path d="M1 6.8V12" stroke="#fff0a0" stroke-width=".7" opacity=".8"/><path d="M3.2 0V6.2M1.2 2.9H5.1" stroke="#fff" stroke-width="1.3"/><path d="M2 1.6L4.4 4.2M4.4 1.6L2 4.2" stroke="#fff" stroke-width=".7"/><circle cx="3.3" cy="2.8" r=".55" fill="#2a5a8c"/></svg>
<span class="t" style="left:853.2px;top:48px">LS40.2.6A-6</span>
<svg class="ic" style="left:839px;top:65.2px" width="13" height="14" viewBox="0 0 13 14"><path d="M1 0H8.1L12 4V10.6L4 6.3H1Z" fill="url(#gb)"/><path d="M4.4 3.6H9.4L10.6 8.4L5 6Z" fill="#7fa3c6" opacity=".55"/><path d="M8.1 0V4H12Z" fill="#c3d3e2"/><path d="M0 6.3H4L12 10.5V13.2H0Z" fill="url(#gy)"/><path d="M0 12.3H12V13.3H0Z" fill="#cf9a06"/><path d="M1 6.8V12" stroke="#fff0a0" stroke-width=".7" opacity=".8"/><path d="M3.2 0V6.2M1.2 2.9H5.1" stroke="#fff" stroke-width="1.3"/><path d="M2 1.6L4.4 4.2M4.4 1.6L2 4.2" stroke="#fff" stroke-width=".7"/><circle cx="3.3" cy="2.8" r=".55" fill="#2a5a8c"/></svg>
<span class="t" style="left:853.2px;top:65.2px">LS40.2.6A-7</span>
<svg class="ic" style="left:839px;top:82.5px" width="13" height="14" viewBox="0 0 13 14"><path d="M1 0H8.1L12 4V10.6L4 6.3H1Z" fill="url(#gb)"/><path d="M4.4 3.6H9.4L10.6 8.4L5 6Z" fill="#7fa3c6" opacity=".55"/><path d="M8.1 0V4H12Z" fill="#c3d3e2"/><path d="M0 6.3H4L12 10.5V13.2H0Z" fill="url(#gy)"/><path d="M0 12.3H12V13.3H0Z" fill="#cf9a06"/><path d="M1 6.8V12" stroke="#fff0a0" stroke-width=".7" opacity=".8"/><path d="M3.2 0V6.2M1.2 2.9H5.1" stroke="#fff" stroke-width="1.3"/><path d="M2 1.6L4.4 4.2M4.4 1.6L2 4.2" stroke="#fff" stroke-width=".7"/><circle cx="3.3" cy="2.8" r=".55" fill="#2a5a8c"/></svg>
<span class="t" style="left:853.2px;top:82.5px">LS50.1.1</span>
<svg class="ic" style="left:839px;top:99.7px" width="13" height="14" viewBox="0 0 13 14"><path d="M1 0H8.1L12 4V10.6L4 6.3H1Z" fill="url(#gb)"/><path d="M4.4 3.6H9.4L10.6 8.4L5 6Z" fill="#7fa3c6" opacity=".55"/><path d="M8.1 0V4H12Z" fill="#c3d3e2"/><path d="M0 6.3H4L12 10.5V13.2H0Z" fill="url(#gy)"/><path d="M0 12.3H12V13.3H0Z" fill="#cf9a06"/><path d="M1 6.8V12" stroke="#fff0a0" stroke-width=".7" opacity=".8"/><path d="M3.2 0V6.2M1.2 2.9H5.1" stroke="#fff" stroke-width="1.3"/><path d="M2 1.6L4.4 4.2M4.4 1.6L2 4.2" stroke="#fff" stroke-width=".7"/><circle cx="3.3" cy="2.8" r=".55" fill="#2a5a8c"/></svg>
<span class="t" style="left:853.2px;top:99.7px">LS50.1.1-1</span>
<svg class="ic" style="left:839px;top:117px" width="13" height="14" viewBox="0 0 13 14"><path d="M1 0H8.1L12 4V10.6L4 6.3H1Z" fill="url(#gb)"/><path d="M4.4 3.6H9.4L10.6 8.4L5 6Z" fill="#7fa3c6" opacity=".55"/><path d="M8.1 0V4H12Z" fill="#c3d3e2"/><path d="M0 6.3H4L12 10.5V13.2H0Z" fill="url(#gy)"/><path d="M0 12.3H12V13.3H0Z" fill="#cf9a06"/><path d="M1 6.8V12" stroke="#fff0a0" stroke-width=".7" opacity=".8"/><path d="M3.2 0V6.2M1.2 2.9H5.1" stroke="#fff" stroke-width="1.3"/><path d="M2 1.6L4.4 4.2M4.4 1.6L2 4.2" stroke="#fff" stroke-width=".7"/><circle cx="3.3" cy="2.8" r=".55" fill="#2a5a8c"/></svg>
<span class="t" style="left:853.2px;top:117px">LS50.1.1-2</span>
<svg class="ic" style="left:839px;top:134.2px" width="13" height="14" viewBox="0 0 13 14"><path d="M1 0H8.1L12 4V10.6L4 6.3H1Z" fill="url(#gb)"/><path d="M4.4 3.6H9.4L10.6 8.4L5 6Z" fill="#7fa3c6" opacity=".55"/><path d="M8.1 0V4H12Z" fill="#c3d3e2"/><path d="M0 6.3H4L12 10.5V13.2H0Z" fill="url(#gy)"/><path d="M0 12.3H12V13.3H0Z" fill="#cf9a06"/><path d="M1 6.8V12" stroke="#fff0a0" stroke-width=".7" opacity=".8"/><path d="M3.2 0V6.2M1.2 2.9H5.1" stroke="#fff" stroke-width="1.3"/><path d="M2 1.6L4.4 4.2M4.4 1.6L2 4.2" stroke="#fff" stroke-width=".7"/><circle cx="3.3" cy="2.8" r=".55" fill="#2a5a8c"/></svg>
<span class="t" style="left:853.2px;top:134.2px">LS50.1.1-3</span>
<svg class="ic" style="left:839px;top:151.4px" width="13" height="14" viewBox="0 0 13 14"><path d="M1 0H8.1L12 4V10.6L4 6.3H1Z" fill="url(#gb)"/><path d="M4.4 3.6H9.4L10.6 8.4L5 6Z" fill="#7fa3c6" opacity=".55"/><path d="M8.1 0V4H12Z" fill="#c3d3e2"/><path d="M0 6.3H4L12 10.5V13.2H0Z" fill="url(#gy)"/><path d="M0 12.3H12V13.3H0Z" fill="#cf9a06"/><path d="M1 6.8V12" stroke="#fff0a0" stroke-width=".7" opacity=".8"/><path d="M3.2 0V6.2M1.2 2.9H5.1" stroke="#fff" stroke-width="1.3"/><path d="M2 1.6L4.4 4.2M4.4 1.6L2 4.2" stroke="#fff" stroke-width=".7"/><circle cx="3.3" cy="2.8" r=".55" fill="#2a5a8c"/></svg>
<span class="t" style="left:853.2px;top:151.4px">LS50.1.2</span>
<svg class="ic" style="left:839px;top:168.7px" width="13" height="14" viewBox="0 0 13 14"><path d="M1 0H8.1L12 4V10.6L4 6.3H1Z" fill="url(#gb)"/><path d="M4.4 3.6H9.4L10.6 8.4L5 6Z" fill="#7fa3c6" opacity=".55"/><path d="M8.1 0V4H12Z" fill="#c3d3e2"/><path d="M0 6.3H4L12 10.5V13.2H0Z" fill="url(#gy)"/><path d="M0 12.3H12V13.3H0Z" fill="#cf9a06"/><path d="M1 6.8V12" stroke="#fff0a0" stroke-width=".7" opacity=".8"/><path d="M3.2 0V6.2M1.2 2.9H5.1" stroke="#fff" stroke-width="1.3"/><path d="M2 1.6L4.4 4.2M4.4 1.6L2 4.2" stroke="#fff" stroke-width=".7"/><circle cx="3.3" cy="2.8" r=".55" fill="#2a5a8c"/></svg>
<span class="t" style="left:853.2px;top:168.7px">LS50.1</span>
<svg class="ic" style="left:839px;top:185.9px" width="13" height="14" viewBox="0 0 13 14"><path d="M1 0H8.1L12 4V10.6L4 6.3H1Z" fill="url(#gb)"/><path d="M4.4 3.6H9.4L10.6 8.4L5 6Z" fill="#7fa3c6" opacity=".55"/><path d="M8.1 0V4H12Z" fill="#c3d3e2"/><path d="M0 6.3H4L12 10.5V13.2H0Z" fill="url(#gy)"/><path d="M0 12.3H12V13.3H0Z" fill="#cf9a06"/><path d="M1 6.8V12" stroke="#fff0a0" stroke-width=".7" opacity=".8"/><path d="M3.2 0V6.2M1.2 2.9H5.1" stroke="#fff" stroke-width="1.3"/><path d="M2 1.6L4.4 4.2M4.4 1.6L2 4.2" stroke="#fff" stroke-width=".7"/><circle cx="3.3" cy="2.8" r=".55" fill="#2a5a8c"/></svg>
<span class="t" style="left:853.2px;top:185.9px">LS50.2.1</span>
<svg class="ic" style="left:839px;top:203.2px" width="13" height="14" viewBox="0 0 13 14"><path d="M1 0H8.1L12 4V10.6L4 6.3H1Z" fill="url(#gb)"/><path d="M4.4 3.6H9.4L10.6 8.4L5 6Z" fill="#7fa3c6" opacity=".55"/><path d="M8.1 0V4H12Z" fill="#c3d3e2"/><path d="M0 6.3H4L12 10.5V13.2H0Z" fill="url(#gy)"/><path d="M0 12.3H12V13.3H0Z" fill="#cf9a06"/><path d="M1 6.8V12" stroke="#fff0a0" stroke-width=".7" opacity=".8"/><path d="M3.2 0V6.2M1.2 2.9H5.1" stroke="#fff" stroke-width="1.3"/><path d="M2 1.6L4.4 4.2M4.4 1.6L2 4.2" stroke="#fff" stroke-width=".7"/><circle cx="3.3" cy="2.8" r=".55" fill="#2a5a8c"/></svg>
<span class="t" style="left:853.2px;top:203.2px">LS50.2.1-1</span>
<svg class="ic" style="left:839px;top:220.4px" width="13" height="14" viewBox="0 0 13 14"><path d="M1 0H8.1L12 4V10.6L4 6.3H1Z" fill="url(#gb)"/><path d="M4.4 3.6H9.4L10.6 8.4L5 6Z" fill="#7fa3c6" opacity=".55"/><path d="M8.1 0V4H12Z" fill="#c3d3e2"/><path d="M0 6.3H4L12 10.5V13.2H0Z" fill="url(#gy)"/><path d="M0 12.3H12V13.3H0Z" fill="#cf9a06"/><path d="M1 6.8V12" stroke="#fff0a0" stroke-width=".7" opacity=".8"/><path d="M3.2 0V6.2M1.2 2.9H5.1" stroke="#fff" stroke-width="1.3"/><path d="M2 1.6L4.4 4.2M4.4 1.6L2 4.2" stroke="#fff" stroke-width=".7"/><circle cx="3.3" cy="2.8" r=".55" fill="#2a5a8c"/></svg>
<span class="t" style="left:853.2px;top:220.4px">LS50.2.1-2</span>
<svg class="ic" style="left:839px;top:237.7px" width="13" height="14" viewBox="0 0 13 14"><path d="M1 0H8.1L12 4V10.6L4 6.3H1Z" fill="url(#gb)"/><path d="M4.4 3.6H9.4L10.6 8.4L5 6Z" fill="#7fa3c6" opacity=".55"/><path d="M8.1 0V4H12Z" fill="#c3d3e2"/><path d="M0 6.3H4L12 10.5V13.2H0Z" fill="url(#gy)"/><path d="M0 12.3H12V13.3H0Z" fill="#cf9a06"/><path d="M1 6.8V12" stroke="#fff0a0" stroke-width=".7" opacity=".8"/><path d="M3.2 0V6.2M1.2 2.9H5.1" stroke="#fff" stroke-width="1.3"/><path d="M2 1.6L4.4 4.2M4.4 1.6L2 4.2" stroke="#fff" stroke-width=".7"/><circle cx="3.3" cy="2.8" r=".55" fill="#2a5a8c"/></svg>
<span class="t" style="left:853.2px;top:237.7px">LS50.2.1-3</span>
<svg class="ic" style="left:839px;top:254.9px" width="13" height="14" viewBox="0 0 13 14"><path d="M1 0H8.1L12 4V10.6L4 6.3H1Z" fill="url(#gb)"/><path d="M4.4 3.6H9.4L10.6 8.4L5 6Z" fill="#7fa3c6" opacity=".55"/><path d="M8.1 0V4H12Z" fill="#c3d3e2"/><path d="M0 6.3H4L12 10.5V13.2H0Z" fill="url(#gy)"/><path d="M0 12.3H12V13.3H0Z" fill="#cf9a06"/><path d="M1 6.8V12" stroke="#fff0a0" stroke-width=".7" opacity=".8"/><path d="M3.2 0V6.2M1.2 2.9H5.1" stroke="#fff" stroke-width="1.3"/><path d="M2 1.6L4.4 4.2M4.4 1.6L2 4.2" stroke="#fff" stroke-width=".7"/><circle cx="3.3" cy="2.8" r=".55" fill="#2a5a8c"/></svg>
<span class="t" style="left:853.2px;top:254.9px">LS50.2.1-4</span>
<svg class="ic" style="left:839px;top:272.2px" width="13" height="14" viewBox="0 0 13 14"><path d="M1 0H8.1L12 4V10.6L4 6.3H1Z" fill="url(#gb)"/><path d="M4.4 3.6H9.4L10.6 8.4L5 6Z" fill="#7fa3c6" opacity=".55"/><path d="M8.1 0V4H12Z" fill="#c3d3e2"/><path d="M0 6.3H4L12 10.5V13.2H0Z" fill="url(#gy)"/><path d="M0 12.3H12V13.3H0Z" fill="#cf9a06"/><path d="M1 6.8V12" stroke="#fff0a0" stroke-width=".7" opacity=".8"/><path d="M3.2 0V6.2M1.2 2.9H5.1" stroke="#fff" stroke-width="1.3"/><path d="M2 1.6L4.4 4.2M4.4 1.6L2 4.2" stroke="#fff" stroke-width=".7"/><circle cx="3.3" cy="2.8" r=".55" fill="#2a5a8c"/></svg>
<span class="t" style="left:853.2px;top:272.2px">LS50.2.1-5</span>
<svg class="ic" style="left:839px;top:289.4px" width="13" height="14" viewBox="0 0 13 14"><path d="M1 0H8.1L12 4V10.6L4 6.3H1Z" fill="url(#gb)"/><path d="M4.4 3.6H9.4L10.6 8.4L5 6Z" fill="#7fa3c6" opacity=".55"/><path d="M8.1 0V4H12Z" fill="#c3d3e2"/><path d="M0 6.3H4L12 10.5V13.2H0Z" fill="url(#gy)"/><path d="M0 12.3H12V13.3H0Z" fill="#cf9a06"/><path d="M1 6.8V12" stroke="#fff0a0" stroke-width=".7" opacity=".8"/><path d="M3.2 0V6.2M1.2 2.9H5.1" stroke="#fff" stroke-width="1.3"/><path d="M2 1.6L4.4 4.2M4.4 1.6L2 4.2" stroke="#fff" stroke-width=".7"/><circle cx="3.3" cy="2.8" r=".55" fill="#2a5a8c"/></svg>
<span class="t" style="left:853.2px;top:289.4px">LS50.2.1-6</span>
<svg class="ic" style="left:839px;top:306.7px" width="13" height="14" viewBox="0 0 13 14"><path d="M1 0H8.1L12 4V10.6L4 6.3H1Z" fill="url(#gb)"/><path d="M4.4 3.6H9.4L10.6 8.4L5 6Z" fill="#7fa3c6" opacity=".55"/><path d="M8.1 0V4H12Z" fill="#c3d3e2"/><path d="M0 6.3H4L12 10.5V13.2H0Z" fill="url(#gy)"/><path d="M0 12.3H12V13.3H0Z" fill="#cf9a06"/><path d="M1 6.8V12" stroke="#fff0a0" stroke-width=".7" opacity=".8"/><path d="M3.2 0V6.2M1.2 2.9H5.1" stroke="#fff" stroke-width="1.3"/><path d="M2 1.6L4.4 4.2M4.4 1.6L2 4.2" stroke="#fff" stroke-width=".7"/><circle cx="3.3" cy="2.8" r=".55" fill="#2a5a8c"/></svg>
<span class="t" style="left:853.2px;top:306.7px">LS50.2.2</span>
<svg class="ic" style="left:839px;top:323.9px" width="13" height="14" viewBox="0 0 13 14"><path d="M1 0H8.1L12 4V10.6L4 6.3H1Z" fill="url(#gb)"/><path d="M4.4 3.6H9.4L10.6 8.4L5 6Z" fill="#7fa3c6" opacity=".55"/><path d="M8.1 0V4H12Z" fill="#c3d3e2"/><path d="M0 6.3H4L12 10.5V13.2H0Z" fill="url(#gy)"/><path d="M0 12.3H12V13.3H0Z" fill="#cf9a06"/><path d="M1 6.8V12" stroke="#fff0a0" stroke-width=".7" opacity=".8"/><path d="M3.2 0V6.2M1.2 2.9H5.1" stroke="#fff" stroke-width="1.3"/><path d="M2 1.6L4.4 4.2M4.4 1.6L2 4.2" stroke="#fff" stroke-width=".7"/><circle cx="3.3" cy="2.8" r=".55" fill="#2a5a8c"/></svg>
<span class="t" style="left:853.2px;top:323.9px">LS50.2.2-1</span>
<svg class="ic" style="left:839px;top:341.2px" width="13" height="14" viewBox="0 0 13 14"><path d="M1 0H8.1L12 4V10.6L4 6.3H1Z" fill="url(#gb)"/><path d="M4.4 3.6H9.4L10.6 8.4L5 6Z" fill="#7fa3c6" opacity=".55"/><path d="M8.1 0V4H12Z" fill="#c3d3e2"/><path d="M0 6.3H4L12 10.5V13.2H0Z" fill="url(#gy)"/><path d="M0 12.3H12V13.3H0Z" fill="#cf9a06"/><path d="M1 6.8V12" stroke="#fff0a0" stroke-width=".7" opacity=".8"/><path d="M3.2 0V6.2M1.2 2.9H5.1" stroke="#fff" stroke-width="1.3"/><path d="M2 1.6L4.4 4.2M4.4 1.6L2 4.2" stroke="#fff" stroke-width=".7"/><circle cx="3.3" cy="2.8" r=".55" fill="#2a5a8c"/></svg>
<span class="t" style="left:853.2px;top:341.2px">LS50.2.2-2</span>
<svg class="ic" style="left:839px;top:358.4px" width="13" height="14" viewBox="0 0 13 14"><path d="M1 0H8.1L12 4V10.6L4 6.3H1Z" fill="url(#gb)"/><path d="M4.4 3.6H9.4L10.6 8.4L5 6Z" fill="#7fa3c6" opacity=".55"/><path d="M8.1 0V4H12Z" fill="#c3d3e2"/><path d="M0 6.3H4L12 10.5V13.2H0Z" fill="url(#gy)"/><path d="M0 12.3H12V13.3H0Z" fill="#cf9a06"/><path d="M1 6.8V12" stroke="#fff0a0" stroke-width=".7" opacity=".8"/><path d="M3.2 0V6.2M1.2 2.9H5.1" stroke="#fff" stroke-width="1.3"/><path d="M2 1.6L4.4 4.2M4.4 1.6L2 4.2" stroke="#fff" stroke-width=".7"/><circle cx="3.3" cy="2.8" r=".55" fill="#2a5a8c"/></svg>
<span class="t" style="left:853.2px;top:358.4px">LS50.2.2-3</span>
<svg class="ic" style="left:839px;top:375.7px" width="13" height="14" viewBox="0 0 13 14"><path d="M1 0H8.1L12 4V10.6L4 6.3H1Z" fill="url(#gb)"/><path d="M4.4 3.6H9.4L10.6 8.4L5 6Z" fill="#7fa3c6" opacity=".55"/><path d="M8.1 0V4H12Z" fill="#c3d3e2"/><path d="M0 6.3H4L12 10.5V13.2H0Z" fill="url(#gy)"/><path d="M0 12.3H12V13.3H0Z" fill="#cf9a06"/><path d="M1 6.8V12" stroke="#fff0a0" stroke-width=".7" opacity=".8"/><path d="M3.2 0V6.2M1.2 2.9H5.1" stroke="#fff" stroke-width="1.3"/><path d="M2 1.6L4.4 4.2M4.4 1.6L2 4.2" stroke="#fff" stroke-width=".7"/><circle cx="3.3" cy="2.8" r=".55" fill="#2a5a8c"/></svg>
<span class="t" style="left:853.2px;top:375.7px">LS50.2.4</span>
<svg class="ic" style="left:839px;top:392.9px" width="13" height="14" viewBox="0 0 13 14"><path d="M1 0H8.1L12 4V10.6L4 6.3H1Z" fill="url(#gb)"/><path d="M4.4 3.6H9.4L10.6 8.4L5 6Z" fill="#7fa3c6" opacity=".55"/><path d="M8.1 0V4H12Z" fill="#c3d3e2"/><path d="M0 6.3H4L12 10.5V13.2H0Z" fill="url(#gy)"/><path d="M0 12.3H12V13.3H0Z" fill="#cf9a06"/><path d="M1 6.8V12" stroke="#fff0a0" stroke-width=".7" opacity=".8"/><path d="M3.2 0V6.2M1.2 2.9H5.1" stroke="#fff" stroke-width="1.3"/><path d="M2 1.6L4.4 4.2M4.4 1.6L2 4.2" stroke="#fff" stroke-width=".7"/><circle cx="3.3" cy="2.8" r=".55" fill="#2a5a8c"/></svg>
<span class="t" style="left:853.2px;top:392.9px">LS50.2.4-1</span>
<svg class="ic" style="left:839px;top:410.2px" width="13" height="14" viewBox="0 0 13 14"><path d="M1 0H8.1L12 4V10.6L4 6.3H1Z" fill="url(#gb)"/><path d="M4.4 3.6H9.4L10.6 8.4L5 6Z" fill="#7fa3c6" opacity=".55"/><path d="M8.1 0V4H12Z" fill="#c3d3e2"/><path d="M0 6.3H4L12 10.5V13.2H0Z" fill="url(#gy)"/><path d="M0 12.3H12V13.3H0Z" fill="#cf9a06"/><path d="M1 6.8V12" stroke="#fff0a0" stroke-width=".7" opacity=".8"/><path d="M3.2 0V6.2M1.2 2.9H5.1" stroke="#fff" stroke-width="1.3"/><path d="M2 1.6L4.4 4.2M4.4 1.6L2 4.2" stroke="#fff" stroke-width=".7"/><circle cx="3.3" cy="2.8" r=".55" fill="#2a5a8c"/></svg>
<span class="t" style="left:853.2px;top:410.2px">LS50.2.4-2</span>
<svg class="ic" style="left:839px;top:427.4px" width="13" height="14" viewBox="0 0 13 14"><path d="M1 0H8.1L12 4V10.6L4 6.3H1Z" fill="url(#gb)"/><path d="M4.4 3.6H9.4L10.6 8.4L5 6Z" fill="#7fa3c6" opacity=".55"/><path d="M8.1 0V4H12Z" fill="#c3d3e2"/><path d="M0 6.3H4L12 10.5V13.2H0Z" fill="url(#gy)"/><path d="M0 12.3H12V13.3H0Z" fill="#cf9a06"/><path d="M1 6.8V12" stroke="#fff0a0" stroke-width=".7" opacity=".8"/><path d="M3.2 0V6.2M1.2 2.9H5.1" stroke="#fff" stroke-width="1.3"/><path d="M2 1.6L4.4 4.2M4.4 1.6L2 4.2" stroke="#fff" stroke-width=".7"/><circle cx="3.3" cy="2.8" r=".55" fill="#2a5a8c"/></svg>
<span class="t" style="left:853.2px;top:427.4px">LS50.2.5</span>
<svg class="ic" style="left:839px;top:444.7px" width="13" height="14" viewBox="0 0 13 14"><path d="M1 0H8.1L12 4V10.6L4 6.3H1Z" fill="url(#gb)"/><path d="M4.4 3.6H9.4L10.6 8.4L5 6Z" fill="#7fa3c6" opacity=".55"/><path d="M8.1 0V4H12Z" fill="#c3d3e2"/><path d="M0 6.3H4L12 10.5V13.2H0Z" fill="url(#gy)"/><path d="M0 12.3H12V13.3H0Z" fill="#cf9a06"/><path d="M1 6.8V12" stroke="#fff0a0" stroke-width=".7" opacity=".8"/><path d="M3.2 0V6.2M1.2 2.9H5.1" stroke="#fff" stroke-width="1.3"/><path d="M2 1.6L4.4 4.2M4.4 1.6L2 4.2" stroke="#fff" stroke-width=".7"/><circle cx="3.3" cy="2.8" r=".55" fill="#2a5a8c"/></svg>
<span class="t" style="left:853.2px;top:444.7px">LS50.2.5-1</span>
<svg class="ic" style="left:839px;top:461.9px" width="13" height="14" viewBox="0 0 13 14"><path d="M1 0H8.1L12 4V10.6L4 6.3H1Z" fill="url(#gb)"/><path d="M4.4 3.6H9.4L10.6 8.4L5 6Z" fill="#7fa3c6" opacity=".55"/><path d="M8.1 0V4H12Z" fill="#c3d3e2"/><path d="M0 6.3H4L12 10.5V13.2H0Z" fill="url(#gy)"/><path d="M0 12.3H12V13.3H0Z" fill="#cf9a06"/><path d="M1 6.8V12" stroke="#fff0a0" stroke-width=".7" opacity=".8"/><path d="M3.2 0V6.2M1.2 2.9H5.1" stroke="#fff" stroke-width="1.3"/><path d="M2 1.6L4.4 4.2M4.4 1.6L2 4.2" stroke="#fff" stroke-width=".7"/><circle cx="3.3" cy="2.8" r=".55" fill="#2a5a8c"/></svg>
<span class="t" style="left:853.2px;top:461.9px">LS50.2.5-2</span>
<svg class="ic" style="left:839px;top:479.2px" width="13" height="14" viewBox="0 0 13 14"><path d="M1 0H8.1L12 4V10.6L4 6.3H1Z" fill="url(#gb)"/><path d="M4.4 3.6H9.4L10.6 8.4L5 6Z" fill="#7fa3c6" opacity=".55"/><path d="M8.1 0V4H12Z" fill="#c3d3e2"/><path d="M0 6.3H4L12 10.5V13.2H0Z" fill="url(#gy)"/><path d="M0 12.3H12V13.3H0Z" fill="#cf9a06"/><path d="M1 6.8V12" stroke="#fff0a0" stroke-width=".7" opacity=".8"/><path d="M3.2 0V6.2M1.2 2.9H5.1" stroke="#fff" stroke-width="1.3"/><path d="M2 1.6L4.4 4.2M4.4 1.6L2 4.2" stroke="#fff" stroke-width=".7"/><circle cx="3.3" cy="2.8" r=".55" fill="#2a5a8c"/></svg>
<span class="t" style="left:853.2px;top:479.2px">LS50.2.6B</span>
<svg class="ic" style="left:839px;top:496.4px" width="13" height="14" viewBox="0 0 13 14"><path d="M1 0H8.1L12 4V10.6L4 6.3H1Z" fill="url(#gb)"/><path d="M4.4 3.6H9.4L10.6 8.4L5 6Z" fill="#7fa3c6" opacity=".55"/><path d="M8.1 0V4H12Z" fill="#c3d3e2"/><path d="M0 6.3H4L12 10.5V13.2H0Z" fill="url(#gy)"/><path d="M0 12.3H12V13.3H0Z" fill="#cf9a06"/><path d="M1 6.8V12" stroke="#fff0a0" stroke-width=".7" opacity=".8"/><path d="M3.2 0V6.2M1.2 2.9H5.1" stroke="#fff" stroke-width="1.3"/><path d="M2 1.6L4.4 4.2M4.4 1.6L2 4.2" stroke="#fff" stroke-width=".7"/><circle cx="3.3" cy="2.8" r=".55" fill="#2a5a8c"/></svg>
<span class="t" style="left:853.2px;top:496.4px">LS50.2.6B-1</span>
<svg class="ic" style="left:839px;top:513.7px" width="13" height="14" viewBox="0 0 13 14"><path d="M1 0H8.1L12 4V10.6L4 6.3H1Z" fill="url(#gb)"/><path d="M4.4 3.6H9.4L10.6 8.4L5 6Z" fill="#7fa3c6" opacity=".55"/><path d="M8.1 0V4H12Z" fill="#c3d3e2"/><path d="M0 6.3H4L12 10.5V13.2H0Z" fill="url(#gy)"/><path d="M0 12.3H12V13.3H0Z" fill="#cf9a06"/><path d="M1 6.8V12" stroke="#fff0a0" stroke-width=".7" opacity=".8"/><path d="M3.2 0V6.2M1.2 2.9H5.1" stroke="#fff" stroke-width="1.3"/><path d="M2 1.6L4.4 4.2M4.4 1.6L2 4.2" stroke="#fff" stroke-width=".7"/><circle cx="3.3" cy="2.8" r=".55" fill="#2a5a8c"/></svg>
<span class="t" style="left:853.2px;top:513.7px">LS50.2.6B-2</span>
<svg class="ic" style="left:839px;top:531px" width="13" height="14" viewBox="0 0 13 14"><path d="M1 0H8.1L12 4V10.6L4 6.3H1Z" fill="url(#gb)"/><path d="M4.4 3.6H9.4L10.6 8.4L5 6Z" fill="#7fa3c6" opacity=".55"/><path d="M8.1 0V4H12Z" fill="#c3d3e2"/><path d="M0 6.3H4L12 10.5V13.2H0Z" fill="url(#gy)"/><path d="M0 12.3H12V13.3H0Z" fill="#cf9a06"/><path d="M1 6.8V12" stroke="#fff0a0" stroke-width=".7" opacity=".8"/><path d="M3.2 0V6.2M1.2 2.9H5.1" stroke="#fff" stroke-width="1.3"/><path d="M2 1.6L4.4 4.2M4.4 1.6L2 4.2" stroke="#fff" stroke-width=".7"/><circle cx="3.3" cy="2.8" r=".55" fill="#2a5a8c"/></svg>
<span class="t" style="left:853.2px;top:531px">LS50.2.6B-3</span>
<svg class="ic" style="left:839px;top:548.2px" width="13" height="14" viewBox="0 0 13 14"><path d="M1 0H8.1L12 4V10.6L4 6.3H1Z" fill="url(#gb)"/><path d="M4.4 3.6H9.4L10.6 8.4L5 6Z" fill="#7fa3c6" opacity=".55"/><path d="M8.1 0V4H12Z" fill="#c3d3e2"/><path d="M0 6.3H4L12 10.5V13.2H0Z" fill="url(#gy)"/><path d="M0 12.3H12V13.3H0Z" fill="#cf9a06"/><path d="M1 6.8V12" stroke="#fff0a0" stroke-width=".7" opacity=".8"/><path d="M3.2 0V6.2M1.2 2.9H5.1" stroke="#fff" stroke-width="1.3"/><path d="M2 1.6L4.4 4.2M4.4 1.6L2 4.2" stroke="#fff" stroke-width=".7"/><circle cx="3.3" cy="2.8" r=".55" fill="#2a5a8c"/></svg>
<span class="t" style="left:853.2px;top:548.2px">LS50.2.6B-4</span>
<svg class="ic" style="left:839px;top:565.5px" width="13" height="14" viewBox="0 0 13 14"><path d="M1 0H8.1L12 4V10.6L4 6.3H1Z" fill="url(#gb)"/><path d="M4.4 3.6H9.4L10.6 8.4L5 6Z" fill="#7fa3c6" opacity=".55"/><path d="M8.1 0V4H12Z" fill="#c3d3e2"/><path d="M0 6.3H4L12 10.5V13.2H0Z" fill="url(#gy)"/><path d="M0 12.3H12V13.3H0Z" fill="#cf9a06"/><path d="M1 6.8V12" stroke="#fff0a0" stroke-width=".7" opacity=".8"/><path d="M3.2 0V6.2M1.2 2.9H5.1" stroke="#fff" stroke-width="1.3"/><path d="M2 1.6L4.4 4.2M4.4 1.6L2 4.2" stroke="#fff" stroke-width=".7"/><circle cx="3.3" cy="2.8" r=".55" fill="#2a5a8c"/></svg>
<span class="t" style="left:853.2px;top:565.5px">LS50.2.6B-5</span>
<svg class="ic" style="left:839px;top:582.7px" width="13" height="14" viewBox="0 0 13 14"><path d="M1 0H8.1L12 4V10.6L4 6.3H1Z" fill="url(#gb)"/><path d="M4.4 3.6H9.4L10.6 8.4L5 6Z" fill="#7fa3c6" opacity=".55"/><path d="M8.1 0V4H12Z" fill="#c3d3e2"/><path d="M0 6.3H4L12 10.5V13.2H0Z" fill="url(#gy)"/><path d="M0 12.3H12V13.3H0Z" fill="#cf9a06"/><path d="M1 6.8V12" stroke="#fff0a0" stroke-width=".7" opacity=".8"/><path d="M3.2 0V6.2M1.2 2.9H5.1" stroke="#fff" stroke-width="1.3"/><path d="M2 1.6L4.4 4.2M4.4 1.6L2 4.2" stroke="#fff" stroke-width=".7"/><circle cx="3.3" cy="2.8" r=".55" fill="#2a5a8c"/></svg>
<span class="t" style="left:853.2px;top:582.7px">LS50.2</span>
<svg class="ic" style="left:839px;top:600px" width="13" height="14" viewBox="0 0 13 14"><path d="M1 0H8.1L12 4V10.6L4 6.3H1Z" fill="url(#gb)"/><path d="M4.4 3.6H9.4L10.6 8.4L5 6Z" fill="#7fa3c6" opacity=".55"/><path d="M8.1 0V4H12Z" fill="#c3d3e2"/><path d="M0 6.3H4L12 10.5V13.2H0Z" fill="url(#gy)"/><path d="M0 12.3H12V13.3H0Z" fill="#cf9a06"/><path d="M1 6.8V12" stroke="#fff0a0" stroke-width=".7" opacity=".8"/><path d="M3.2 0V6.2M1.2 2.9H5.1" stroke="#fff" stroke-width="1.3"/><path d="M2 1.6L4.4 4.2M4.4 1.6L2 4.2" stroke="#fff" stroke-width=".7"/><circle cx="3.3" cy="2.8" r=".55" fill="#2a5a8c"/></svg>
<span class="t" style="left:853.2px;top:600px">LS50.3.1</span>
<svg class="ic" style="left:839px;top:617.2px" width="13" height="14" viewBox="0 0 13 14"><path d="M1 0H8.1L12 4V10.6L4 6.3H1Z" fill="url(#gb)"/><path d="M4.4 3.6H9.4L10.6 8.4L5 6Z" fill="#7fa3c6" opacity=".55"/><path d="M8.1 0V4H12Z" fill="#c3d3e2"/><path d="M0 6.3H4L12 10.5V13.2H0Z" fill="url(#gy)"/><path d="M0 12.3H12V13.3H0Z" fill="#cf9a06"/><path d="M1 6.8V12" stroke="#fff0a0" stroke-width=".7" opacity=".8"/><path d="M3.2 0V6.2M1.2 2.9H5.1" stroke="#fff" stroke-width="1.3"/><path d="M2 1.6L4.4 4.2M4.4 1.6L2 4.2" stroke="#fff" stroke-width=".7"/><circle cx="3.3" cy="2.8" r=".55" fill="#2a5a8c"/></svg>
<span class="t" style="left:853.2px;top:617.2px">LS50.3</span>
<svg class="ic" style="left:839px;top:634.5px" width="13" height="14" viewBox="0 0 13 14"><path d="M1 0H8.1L12 4V10.6L4 6.3H1Z" fill="url(#gb)"/><path d="M4.4 3.6H9.4L10.6 8.4L5 6Z" fill="#7fa3c6" opacity=".55"/><path d="M8.1 0V4H12Z" fill="#c3d3e2"/><path d="M0 6.3H4L12 10.5V13.2H0Z" fill="url(#gy)"/><path d="M0 12.3H12V13.3H0Z" fill="#cf9a06"/><path d="M1 6.8V12" stroke="#fff0a0" stroke-width=".7" opacity=".8"/><path d="M3.2 0V6.2M1.2 2.9H5.1" stroke="#fff" stroke-width="1.3"/><path d="M2 1.6L4.4 4.2M4.4 1.6L2 4.2" stroke="#fff" stroke-width=".7"/><circle cx="3.3" cy="2.8" r=".55" fill="#2a5a8c"/></svg>
<span class="t" style="left:853.2px;top:634.5px">LS50.4.1</span>
<svg class="ic" style="left:839px;top:651.7px" width="13" height="14" viewBox="0 0 13 14"><path d="M1 0H8.1L12 4V10.6L4 6.3H1Z" fill="url(#gb)"/><path d="M4.4 3.6H9.4L10.6 8.4L5 6Z" fill="#7fa3c6" opacity=".55"/><path d="M8.1 0V4H12Z" fill="#c3d3e2"/><path d="M0 6.3H4L12 10.5V13.2H0Z" fill="url(#gy)"/><path d="M0 12.3H12V13.3H0Z" fill="#cf9a06"/><path d="M1 6.8V12" stroke="#fff0a0" stroke-width=".7" opacity=".8"/><path d="M3.2 0V6.2M1.2 2.9H5.1" stroke="#fff" stroke-width="1.3"/><path d="M2 1.6L4.4 4.2M4.4 1.6L2 4.2" stroke="#fff" stroke-width=".7"/><circle cx="3.3" cy="2.8" r=".55" fill="#2a5a8c"/></svg>
<span class="t" style="left:853.2px;top:651.7px">LS50.4</span>
<svg class="ic" style="left:926px;top:30.7px" width="13" height="14" viewBox="0 0 13 14"><path d="M1 0H8.1L12 4V10.6L4 6.3H1Z" fill="url(#gb)"/><path d="M4.4 3.6H9.4L10.6 8.4L5 6Z" fill="#7fa3c6" opacity=".55"/><path d="M8.1 0V4H12Z" fill="#c3d3e2"/><path d="M0 6.3H4L12 10.5V13.2H0Z" fill="url(#gy)"/><path d="M0 12.3H12V13.3H0Z" fill="#cf9a06"/><path d="M1 6.8V12" stroke="#fff0a0" stroke-width=".7" opacity=".8"/><path d="M3.2 0V6.2M1.2 2.9H5.1" stroke="#fff" stroke-width="1.3"/><path d="M2 1.6L4.4 4.2M4.4 1.6L2 4.2" stroke="#fff" stroke-width=".7"/><circle cx="3.3" cy="2.8" r=".55" fill="#2a5a8c"/></svg>
<span class="t" style="left:940.2px;top:30.7px">LS50.5.1</span>
<svg class="ic" style="left:926px;top:48px" width="13" height="14" viewBox="0 0 13 14"><path d="M1 0H8.1L12 4V10.6L4 6.3H1Z" fill="url(#gb)"/><path d="M4.4 3.6H9.4L10.6 8.4L5 6Z" fill="#7fa3c6" opacity=".55"/><path d="M8.1 0V4H12Z" fill="#c3d3e2"/><path d="M0 6.3H4L12 10.5V13.2H0Z" fill="url(#gy)"/><path d="M0 12.3H12V13.3H0Z" fill="#cf9a06"/><path d="M1 6.8V12" stroke="#fff0a0" stroke-width=".7" opacity=".8"/><path d="M3.2 0V6.2M1.2 2.9H5.1" stroke="#fff" stroke-width="1.3"/><path d="M2 1.6L4.4 4.2M4.4 1.6L2 4.2" stroke="#fff" stroke-width=".7"/><circle cx="3.3" cy="2.8" r=".55" fill="#2a5a8c"/></svg>
<span class="t" style="left:940.2px;top:48px">LS50.5.1-1</span>
<svg class="ic" style="left:926px;top:65.2px" width="13" height="14" viewBox="0 0 13 14"><path d="M1 0H8.1L12 4V10.6L4 6.3H1Z" fill="url(#gb)"/><path d="M4.4 3.6H9.4L10.6 8.4L5 6Z" fill="#7fa3c6" opacity=".55"/><path d="M8.1 0V4H12Z" fill="#c3d3e2"/><path d="M0 6.3H4L12 10.5V13.2H0Z" fill="url(#gy)"/><path d="M0 12.3H12V13.3H0Z" fill="#cf9a06"/><path d="M1 6.8V12" stroke="#fff0a0" stroke-width=".7" opacity=".8"/><path d="M3.2 0V6.2M1.2 2.9H5.1" stroke="#fff" stroke-width="1.3"/><path d="M2 1.6L4.4 4.2M4.4 1.6L2 4.2" stroke="#fff" stroke-width=".7"/><circle cx="3.3" cy="2.8" r=".55" fill="#2a5a8c"/></svg>
<span class="t" style="left:940.2px;top:65.2px">LS50.5.1-2</span>
<svg class="ic" style="left:926px;top:82.5px" width="13" height="14" viewBox="0 0 13 14"><path d="M1 0H8.1L12 4V10.6L4 6.3H1Z" fill="url(#gb)"/><path d="M4.4 3.6H9.4L10.6 8.4L5 6Z" fill="#7fa3c6" opacity=".55"/><path d="M8.1 0V4H12Z" fill="#c3d3e2"/><path d="M0 6.3H4L12 10.5V13.2H0Z" fill="url(#gy)"/><path d="M0 12.3H12V13.3H0Z" fill="#cf9a06"/><path d="M1 6.8V12" stroke="#fff0a0" stroke-width=".7" opacity=".8"/><path d="M3.2 0V6.2M1.2 2.9H5.1" stroke="#fff" stroke-width="1.3"/><path d="M2 1.6L4.4 4.2M4.4 1.6L2 4.2" stroke="#fff" stroke-width=".7"/><circle cx="3.3" cy="2.8" r=".55" fill="#2a5a8c"/></svg>
<span class="t" style="left:940.2px;top:82.5px">LS50.5.1-3</span>
<svg class="ic" style="left:926px;top:99.7px" width="13" height="14" viewBox="0 0 13 14"><path d="M1 0H8.1L12 4V10.6L4 6.3H1Z" fill="url(#gb)"/><path d="M4.4 3.6H9.4L10.6 8.4L5 6Z" fill="#7fa3c6" opacity=".55"/><path d="M8.1 0V4H12Z" fill="#c3d3e2"/><path d="M0 6.3H4L12 10.5V13.2H0Z" fill="url(#gy)"/><path d="M0 12.3H12V13.3H0Z" fill="#cf9a06"/><path d="M1 6.8V12" stroke="#fff0a0" stroke-width=".7" opacity=".8"/><path d="M3.2 0V6.2M1.2 2.9H5.1" stroke="#fff" stroke-width="1.3"/><path d="M2 1.6L4.4 4.2M4.4 1.6L2 4.2" stroke="#fff" stroke-width=".7"/><circle cx="3.3" cy="2.8" r=".55" fill="#2a5a8c"/></svg>
<span class="t" style="left:940.2px;top:99.7px">LS50.5.1-4</span>
<svg class="ic" style="left:926px;top:117px" width="13" height="14" viewBox="0 0 13 14"><path d="M1 0H8.1L12 4V10.6L4 6.3H1Z" fill="url(#gb)"/><path d="M4.4 3.6H9.4L10.6 8.4L5 6Z" fill="#7fa3c6" opacity=".55"/><path d="M8.1 0V4H12Z" fill="#c3d3e2"/><path d="M0 6.3H4L12 10.5V13.2H0Z" fill="url(#gy)"/><path d="M0 12.3H12V13.3H0Z" fill="#cf9a06"/><path d="M1 6.8V12" stroke="#fff0a0" stroke-width=".7" opacity=".8"/><path d="M3.2 0V6.2M1.2 2.9H5.1" stroke="#fff" stroke-width="1.3"/><path d="M2 1.6L4.4 4.2M4.4 1.6L2 4.2" stroke="#fff" stroke-width=".7"/><circle cx="3.3" cy="2.8" r=".55" fill="#2a5a8c"/></svg>
<span class="t" style="left:940.2px;top:117px">LS50.5.1-5</span>
<svg class="ic" style="left:926px;top:134.2px" width="13" height="14" viewBox="0 0 13 14"><path d="M1 0H8.1L12 4V10.6L4 6.3H1Z" fill="url(#gb)"/><path d="M4.4 3.6H9.4L10.6 8.4L5 6Z" fill="#7fa3c6" opacity=".55"/><path d="M8.1 0V4H12Z" fill="#c3d3e2"/><path d="M0 6.3H4L12 10.5V13.2H0Z" fill="url(#gy)"/><path d="M0 12.3H12V13.3H0Z" fill="#cf9a06"/><path d="M1 6.8V12" stroke="#fff0a0" stroke-width=".7" opacity=".8"/><path d="M3.2 0V6.2M1.2 2.9H5.1" stroke="#fff" stroke-width="1.3"/><path d="M2 1.6L4.4 4.2M4.4 1.6L2 4.2" stroke="#fff" stroke-width=".7"/><circle cx="3.3" cy="2.8" r=".55" fill="#2a5a8c"/></svg>
<span class="t" style="left:940.2px;top:134.2px">LS50.5</span>
<svg class="ic" style="left:926px;top:151.4px" width="13" height="14" viewBox="0 0 13 14"><path d="M1 0H8.1L12 4V10.6L4 6.3H1Z" fill="url(#gb)"/><path d="M4.4 3.6H9.4L10.6 8.4L5 6Z" fill="#7fa3c6" opacity=".55"/><path d="M8.1 0V4H12Z" fill="#c3d3e2"/><path d="M0 6.3H4L12 10.5V13.2H0Z" fill="url(#gy)"/><path d="M0 12.3H12V13.3H0Z" fill="#cf9a06"/><path d="M1 6.8V12" stroke="#fff0a0" stroke-width=".7" opacity=".8"/><path d="M3.2 0V6.2M1.2 2.9H5.1" stroke="#fff" stroke-width="1.3"/><path d="M2 1.6L4.4 4.2M4.4 1.6L2 4.2" stroke="#fff" stroke-width=".7"/><circle cx="3.3" cy="2.8" r=".55" fill="#2a5a8c"/></svg>
<span class="t" style="left:940.2px;top:151.4px">LS50.6.1</span>
<svg class="ic" style="left:926px;top:168.7px" width="13" height="14" viewBox="0 0 13 14"><path d="M1 0H8.1L12 4V10.6L4 6.3H1Z" fill="url(#gb)"/><path d="M4.4 3.6H9.4L10.6 8.4L5 6Z" fill="#7fa3c6" opacity=".55"/><path d="M8.1 0V4H12Z" fill="#c3d3e2"/><path d="M0 6.3H4L12 10.5V13.2H0Z" fill="url(#gy)"/><path d="M0 12.3H12V13.3H0Z" fill="#cf9a06"/><path d="M1 6.8V12" stroke="#fff0a0" stroke-width=".7" opacity=".8"/><path d="M3.2 0V6.2M1.2 2.9H5.1" stroke="#fff" stroke-width="1.3"/><path d="M2 1.6L4.4 4.2M4.4 1.6L2 4.2" stroke="#fff" stroke-width=".7"/><circle cx="3.3" cy="2.8" r=".55" fill="#2a5a8c"/></svg>
<span class="t" style="left:940.2px;top:168.7px">LS50.6.1-1</span>
<svg class="ic" style="left:926px;top:185.9px" width="13" height="14" viewBox="0 0 13 14"><path d="M1 0H8.1L12 4V10.6L4 6.3H1Z" fill="url(#gb)"/><path d="M4.4 3.6H9.4L10.6 8.4L5 6Z" fill="#7fa3c6" opacity=".55"/><path d="M8.1 0V4H12Z" fill="#c3d3e2"/><path d="M0 6.3H4L12 10.5V13.2H0Z" fill="url(#gy)"/><path d="M0 12.3H12V13.3H0Z" fill="#cf9a06"/><path d="M1 6.8V12" stroke="#fff0a0" stroke-width=".7" opacity=".8"/><path d="M3.2 0V6.2M1.2 2.9H5.1" stroke="#fff" stroke-width="1.3"/><path d="M2 1.6L4.4 4.2M4.4 1.6L2 4.2" stroke="#fff" stroke-width=".7"/><circle cx="3.3" cy="2.8" r=".55" fill="#2a5a8c"/></svg>
<span class="t" style="left:940.2px;top:185.9px">LS50.6</span>
<svg class="ic" style="left:926px;top:203.2px" width="13" height="14" viewBox="0 0 13 14"><path d="M1 0H8.1L12 4V10.6L4 6.3H1Z" fill="url(#gb)"/><path d="M4.4 3.6H9.4L10.6 8.4L5 6Z" fill="#7fa3c6" opacity=".55"/><path d="M8.1 0V4H12Z" fill="#c3d3e2"/><path d="M0 6.3H4L12 10.5V13.2H0Z" fill="url(#gy)"/><path d="M0 12.3H12V13.3H0Z" fill="#cf9a06"/><path d="M1 6.8V12" stroke="#fff0a0" stroke-width=".7" opacity=".8"/><path d="M3.2 0V6.2M1.2 2.9H5.1" stroke="#fff" stroke-width="1.3"/><path d="M2 1.6L4.4 4.2M4.4 1.6L2 4.2" stroke="#fff" stroke-width=".7"/><circle cx="3.3" cy="2.8" r=".55" fill="#2a5a8c"/></svg>
<span class="t" style="left:940.2px;top:203.2px">LS50.6-1</span>
<svg class="ic" style="left:926px;top:220.4px" width="13" height="14" viewBox="0 0 13 14"><path d="M1 0H8.1L12 4V10.6L4 6.3H1Z" fill="url(#gb)"/><path d="M4.4 3.6H9.4L10.6 8.4L5 6Z" fill="#7fa3c6" opacity=".55"/><path d="M8.1 0V4H12Z" fill="#c3d3e2"/><path d="M0 6.3H4L12 10.5V13.2H0Z" fill="url(#gy)"/><path d="M0 12.3H12V13.3H0Z" fill="#cf9a06"/><path d="M1 6.8V12" stroke="#fff0a0" stroke-width=".7" opacity=".8"/><path d="M3.2 0V6.2M1.2 2.9H5.1" stroke="#fff" stroke-width="1.3"/><path d="M2 1.6L4.4 4.2M4.4 1.6L2 4.2" stroke="#fff" stroke-width=".7"/><circle cx="3.3" cy="2.8" r=".55" fill="#2a5a8c"/></svg>
<span class="t" style="left:940.2px;top:220.4px">LS50.6-2</span>
<svg class="ic" style="left:926px;top:237.7px" width="13" height="14" viewBox="0 0 13 14"><path d="M1 0H8.1L12 4V10.6L4 6.3H1Z" fill="url(#gb)"/><path d="M4.4 3.6H9.4L10.6 8.4L5 6Z" fill="#7fa3c6" opacity=".55"/><path d="M8.1 0V4H12Z" fill="#c3d3e2"/><path d="M0 6.3H4L12 10.5V13.2H0Z" fill="url(#gy)"/><path d="M0 12.3H12V13.3H0Z" fill="#cf9a06"/><path d="M1 6.8V12" stroke="#fff0a0" stroke-width=".7" opacity=".8"/><path d="M3.2 0V6.2M1.2 2.9H5.1" stroke="#fff" stroke-width="1.3"/><path d="M2 1.6L4.4 4.2M4.4 1.6L2 4.2" stroke="#fff" stroke-width=".7"/><circle cx="3.3" cy="2.8" r=".55" fill="#2a5a8c"/></svg>
<span class="t" style="left:940.2px;top:237.7px">LS50.6-3</span>
<svg class="ic" style="left:926px;top:254.9px" width="13" height="14" viewBox="0 0 13 14"><path d="M1 0H8.1L12 4V10.6L4 6.3H1Z" fill="url(#gb)"/><path d="M4.4 3.6H9.4L10.6 8.4L5 6Z" fill="#7fa3c6" opacity=".55"/><path d="M8.1 0V4H12Z" fill="#c3d3e2"/><path d="M0 6.3H4L12 10.5V13.2H0Z" fill="url(#gy)"/><path d="M0 12.3H12V13.3H0Z" fill="#cf9a06"/><path d="M1 6.8V12" stroke="#fff0a0" stroke-width=".7" opacity=".8"/><path d="M3.2 0V6.2M1.2 2.9H5.1" stroke="#fff" stroke-width="1.3"/><path d="M2 1.6L4.4 4.2M4.4 1.6L2 4.2" stroke="#fff" stroke-width=".7"/><circle cx="3.3" cy="2.8" r=".55" fill="#2a5a8c"/></svg>
<span class="t" style="left:940.2px;top:254.9px">LS50.7</span>
<svg class="ic" style="left:926px;top:272.2px" width="13" height="14" viewBox="0 0 13 14"><path d="M1 0H8.1L12 4V10.6L4 6.3H1Z" fill="url(#gb)"/><path d="M4.4 3.6H9.4L10.6 8.4L5 6Z" fill="#7fa3c6" opacity=".55"/><path d="M8.1 0V4H12Z" fill="#c3d3e2"/><path d="M0 6.3H4L12 10.5V13.2H0Z" fill="url(#gy)"/><path d="M0 12.3H12V13.3H0Z" fill="#cf9a06"/><path d="M1 6.8V12" stroke="#fff0a0" stroke-width=".7" opacity=".8"/><path d="M3.2 0V6.2M1.2 2.9H5.1" stroke="#fff" stroke-width="1.3"/><path d="M2 1.6L4.4 4.2M4.4 1.6L2 4.2" stroke="#fff" stroke-width=".7"/><circle cx="3.3" cy="2.8" r=".55" fill="#2a5a8c"/></svg>
<span class="t" style="left:940.2px;top:272.2px">LS50.8</span>
<svg class="ic" style="left:926px;top:289.4px" width="13" height="14" viewBox="0 0 13 14"><path d="M1 0H8.1L12 4V10.6L4 6.3H1Z" fill="url(#gb)"/><path d="M4.4 3.6H9.4L10.6 8.4L5 6Z" fill="#7fa3c6" opacity=".55"/><path d="M8.1 0V4H12Z" fill="#c3d3e2"/><path d="M0 6.3H4L12 10.5V13.2H0Z" fill="url(#gy)"/><path d="M0 12.3H12V13.3H0Z" fill="#cf9a06"/><path d="M1 6.8V12" stroke="#fff0a0" stroke-width=".7" opacity=".8"/><path d="M3.2 0V6.2M1.2 2.9H5.1" stroke="#fff" stroke-width="1.3"/><path d="M2 1.6L4.4 4.2M4.4 1.6L2 4.2" stroke="#fff" stroke-width=".7"/><circle cx="3.3" cy="2.8" r=".55" fill="#2a5a8c"/></svg>
<svg style="position:absolute;left:940.2px;top:292px" width="41" height="10" viewBox="0 0 41 10" fill="none" stroke="#000" stroke-width="1.05"><path transform="translate(0.0 0) scale(.93 .92)" d="M2.6 0V4.6M.4 1L1.6 2M.3 3.8L2.6 2.9M4 1.5H9.6M6.8 0V4M4.8 4H8.8M5 4.3V5.3M.3 5.6H9.7M4.6 5.6L.8 8.6M3.2 7V10L5 9M9 6.6L6.2 8M5 6.6L9.8 10"/><path transform="translate(9.8 0) scale(.93 .92)" d="M.3 .8H5.3M.8 2.6H4.8V9.8H.8ZM2.1 .8V5.6M3.5 .8V5.6M.8 5.9H4.8M.8 7.9H4.8M6 1H9.3V4.6H6.2V9.4H9.8V8"/><path transform="translate(19.6 0) scale(.93 .92)" d="M2.5 .2L3.8 2M7.5 .2L6.2 2M2 2.6H8V5.9H2ZM1.5 7L.5 9.6M3.2 6.8V9.6H7.2V8.5M5 6.8L5.8 8M8.5 7L9.7 9.2"/><path transform="translate(29.4 0) scale(.93 .92)" d="M.8 .5H9.3V9.8H.8ZM4.6 1.4L2.5 4.6M4 2.6H7.2L3 6.6M4.2 3.8L7.9 6.6M4.4 6.5L5.9 7.3M3.8 8L6 8.8"/></svg>
</div></div>
</body></html>
